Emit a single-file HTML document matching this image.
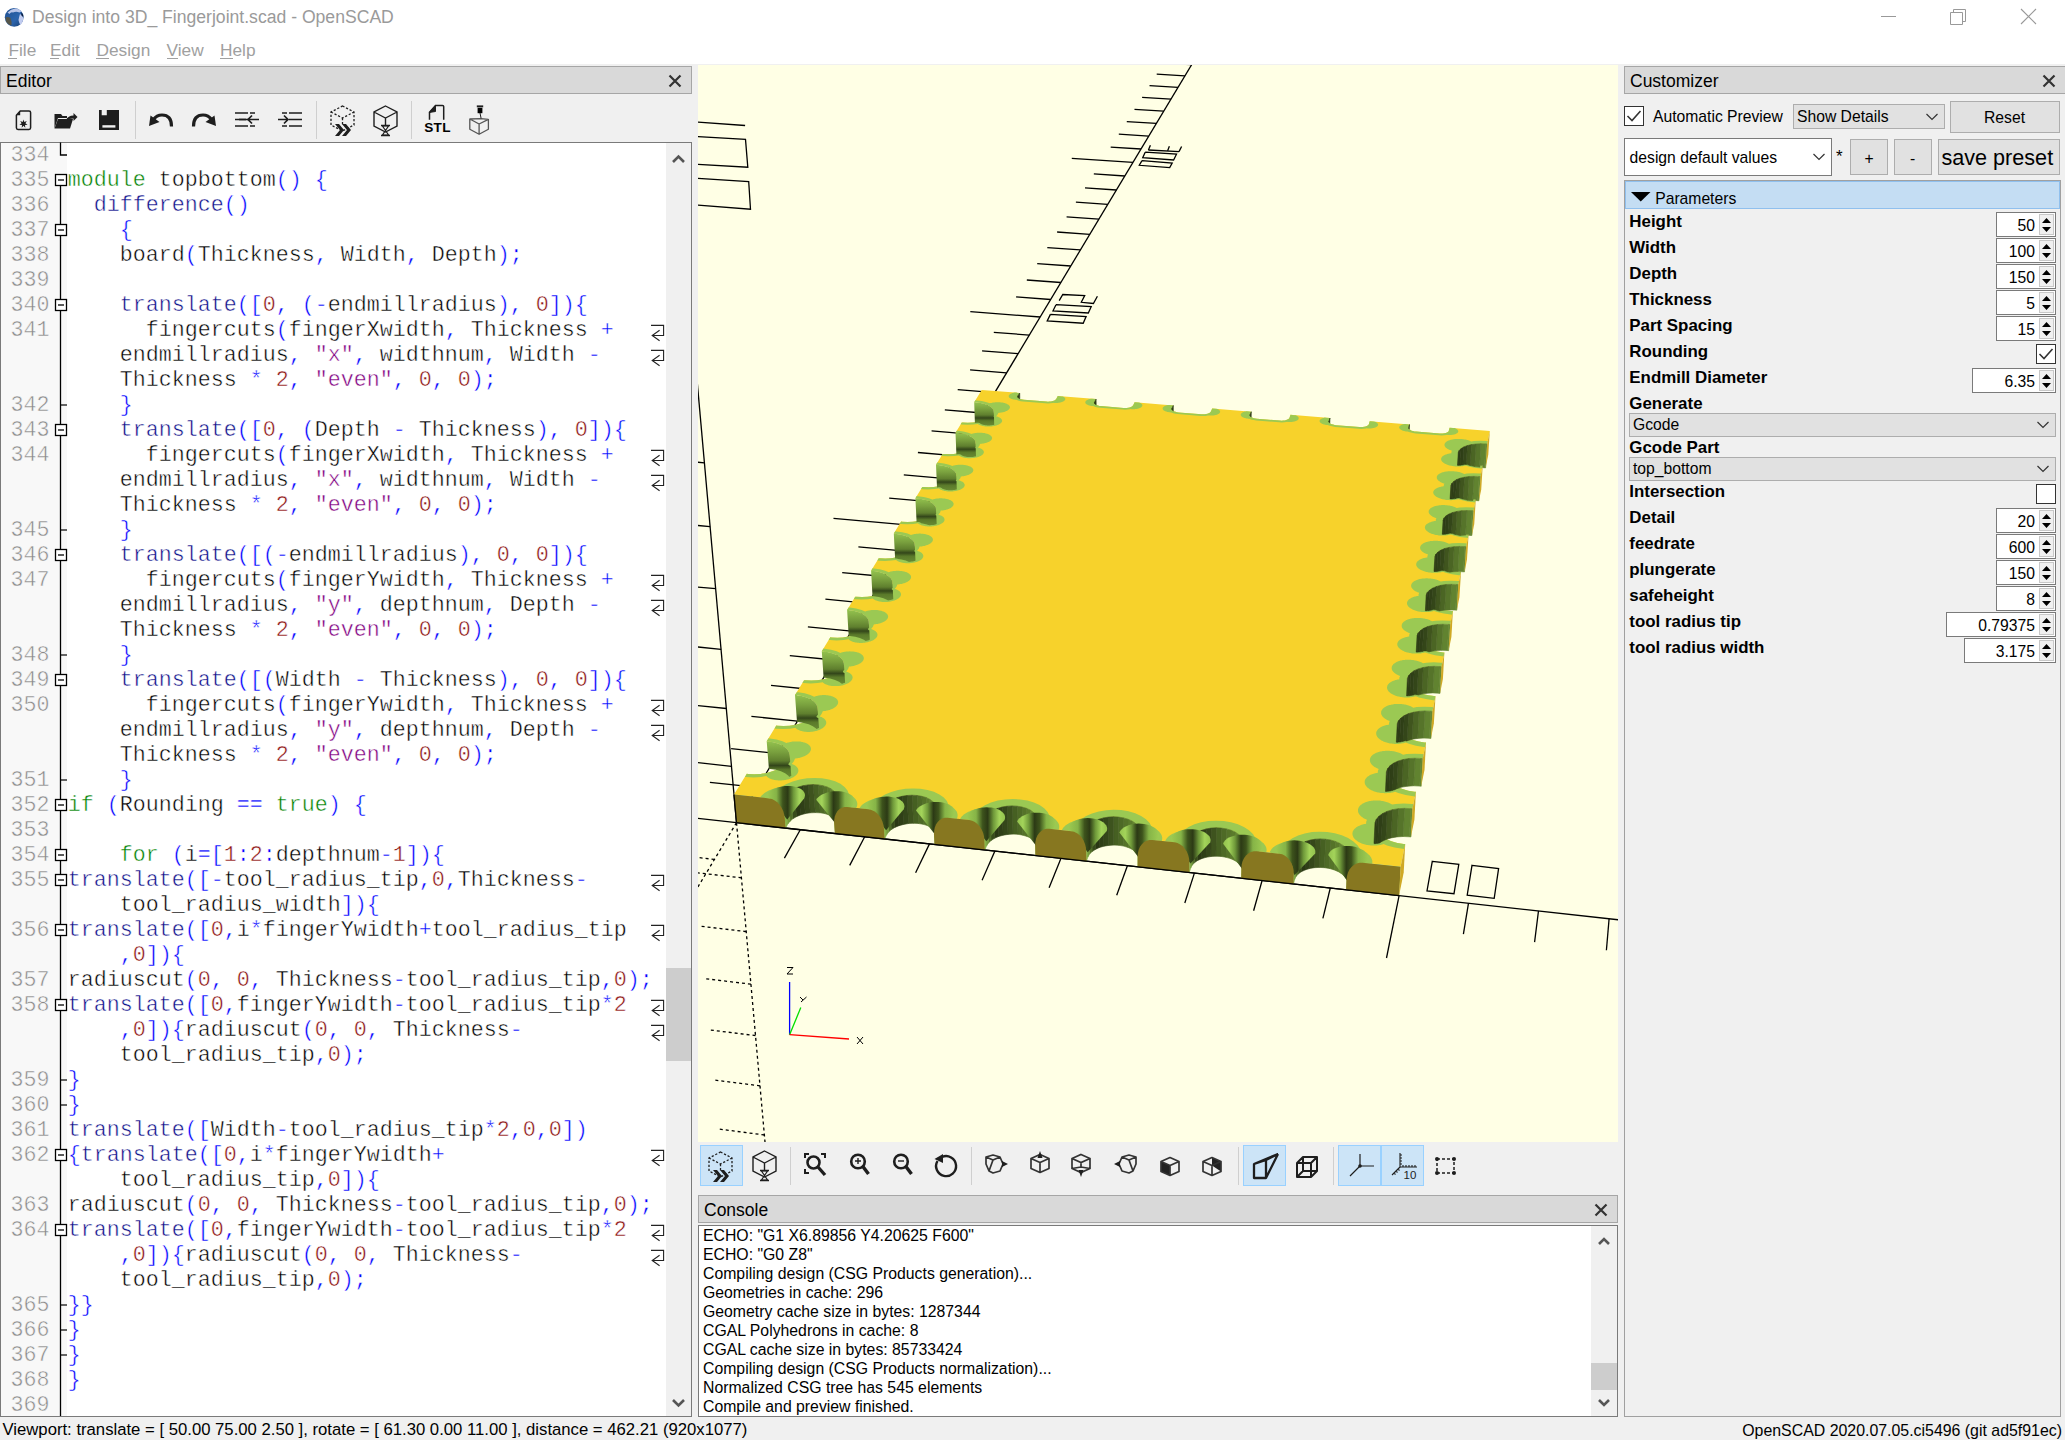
<!DOCTYPE html>
<html><head><meta charset="utf-8"><title>OpenSCAD</title>
<style>
html,body{margin:0;padding:0;}
body{width:2065px;height:1440px;overflow:hidden;position:relative;background:#f0f0f0;font-family:"Liberation Sans",sans-serif;}
.t{position:absolute;line-height:1;white-space:pre;}
.b{position:absolute;}
.s{position:absolute;overflow:visible;}
#code .ln{position:absolute;left:1px;width:48.5px;text-align:right;font-family:"Liberation Mono",monospace;font-size:21.66px;line-height:25px;height:25px;color:#8a8a8a;white-space:pre;-webkit-text-stroke:0.5px #f8f8f8;}
#code .cd{position:absolute;font-family:"Liberation Mono",monospace;font-size:21.66px;line-height:25px;height:25px;white-space:pre;-webkit-text-stroke:0.45px #fff;}
</style></head><body>
<div class="b" style="left:0px;top:0px;width:2065px;height:64px;background:#ffffff;"></div>
<svg class="s" style="left:3px;top:6px;" width="23" height="23" viewBox="0 0 23 23"><defs><linearGradient id="gl" x1="0" y1="0" x2="1" y2="1"><stop offset="0" stop-color="#1f4f8f"/><stop offset="0.6" stop-color="#2c64ad"/><stop offset="1" stop-color="#163a6a"/></linearGradient></defs><circle cx="11.2" cy="11.3" r="9.4" fill="url(#gl)"/><path d="M4.5 6.5 Q8 2.8 12 2.4 Q16 2.6 18.6 5.2 L16.5 6.5 Q13 5 10 6.5 Q8 5.5 6.5 8 Z" fill="#b8c4e8"/><path d="M17 8 Q19.5 9.5 20.5 12 Q20 16.5 17.5 19 Q16 17 15.5 14 Q16 11 17 8 Z" fill="#c0cbef"/><path d="M2.5 11.5 Q5 10.5 7.5 12 Q9 15.5 8.5 19.5 Q5 19 3 15.5 Z" fill="#56564a"/><path d="M18.2 6 Q20.5 8.5 20.3 11 L18.5 9.5 Z" fill="#0c1c3c"/></svg>
<div class="t" style="left:32.00px;top:8.90px;font-size:17.6px;color:#9a9a9a;">Design into 3D_ Fingerjoint.scad - OpenSCAD</div>
<svg class="s" style="left:1870px;top:0px;" width="195" height="34" viewBox="0 0 195 34"><path d="M11 16.5 H26" stroke="#999" stroke-width="1"/><path d="M80.5 12.5 H92.5 V24.5 H80.5 Z M83.5 12.5 V9.5 H95.5 V21.5 H92.5" fill="none" stroke="#999" stroke-width="1"/><path d="M151 9 L166 24 M166 9 L151 24" stroke="#999" stroke-width="1.1"/></svg>
<div class="t" style="left:8.40px;top:41.86px;font-size:17.3px;color:#a0a0a0;">File</div>
<div class="t" style="left:50.00px;top:41.86px;font-size:17.3px;color:#a0a0a0;">Edit</div>
<div class="t" style="left:96.50px;top:41.86px;font-size:17.3px;color:#a0a0a0;">Design</div>
<div class="t" style="left:166.50px;top:41.86px;font-size:17.3px;color:#a0a0a0;">View</div>
<div class="t" style="left:220.00px;top:41.86px;font-size:17.3px;color:#a0a0a0;">Help</div>
<div class="b" style="left:8.2px;top:57.8px;width:9.0px;height:1.0px;background:#a0a0a0;"></div>
<div class="b" style="left:50px;top:57.8px;width:9px;height:1.0px;background:#a0a0a0;"></div>
<div class="b" style="left:96.3px;top:57.8px;width:13.0px;height:1.0px;background:#a0a0a0;"></div>
<div class="b" style="left:166.5px;top:57.8px;width:11.0px;height:1.0px;background:#a0a0a0;"></div>
<div class="b" style="left:220px;top:57.8px;width:13px;height:1.0px;background:#a0a0a0;"></div>
<div class="b" style="left:0px;top:66px;width:692px;height:28px;background:#d9d9d9;border:1px solid #a6a6a6;box-sizing:border-box;"></div>
<div class="t" style="left:6.00px;top:72.99px;font-size:17.5px;color:#000;">Editor</div>
<svg class="s" style="left:667.5px;top:74.3px;" width="14" height="14" viewBox="0 0 14 14"><path d="M1.5 1.5 L12.5 12.5 M12.5 1.5 L1.5 12.5" stroke="#333" stroke-width="2.2"/></svg>
<div class="b" style="left:1624px;top:66px;width:442px;height:28px;background:#d9d9d9;border:1px solid #a6a6a6;box-sizing:border-box;"></div>
<div class="t" style="left:1630.00px;top:72.99px;font-size:17.5px;color:#000;">Customizer</div>
<svg class="s" style="left:2041.5px;top:74.3px;" width="14" height="14" viewBox="0 0 14 14"><path d="M1.5 1.5 L12.5 12.5 M12.5 1.5 L1.5 12.5" stroke="#333" stroke-width="2.2"/></svg>
<div class="b" style="left:698px;top:1195px;width:920px;height:28px;background:#d9d9d9;border:1px solid #a6a6a6;box-sizing:border-box;"></div>
<div class="t" style="left:704.00px;top:1201.99px;font-size:17.5px;color:#000;">Console</div>
<svg class="s" style="left:1593.5px;top:1203.3px;" width="14" height="14" viewBox="0 0 14 14"><path d="M1.5 1.5 L12.5 12.5 M12.5 1.5 L1.5 12.5" stroke="#333" stroke-width="2.2"/></svg>
<svg class="s" style="left:14.5px;top:109.5px;" width="17" height="20.5" viewBox="0 0 17 20.5"><path d="M5.2 1 H14 Q15.6 1 15.6 2.6 V17.8 Q15.6 19.4 14 19.4 H3 Q1.4 19.4 1.4 17.8 V5.2 Z" fill="none" stroke="#1e1e1e" stroke-width="1.5" stroke-linejoin="round"/><path d="M1.4 5.2 L5.2 1 V5.2 Z" fill="#1e1e1e"/><path d="M8.5 9.5 L9.3 12 L11.8 11 L10.4 13.3 L12.6 14.8 L10 15.1 L10.3 17.7 L8.5 15.8 L6.7 17.7 L7 15.1 L4.4 14.8 L6.6 13.3 L5.2 11 L7.7 12 Z" fill="#1e1e1e"/></svg>
<svg class="s" style="left:54px;top:112.5px;" width="24" height="16" viewBox="0 0 24 16"><path d="M0.5 1 H7 L8.5 3 H13 V5 H4 L0.5 15.5 Z" fill="#1e1e1e"/><path d="M0.5 15.5 L4 6 H19 L16 15.5 Z" fill="#1e1e1e"/><path d="M12 7 Q14 2.5 19.5 2.5 V0 L23.5 4 L19.5 8 V5.5 Q15 5.5 12 7 Z" fill="#1e1e1e"/></svg>
<svg class="s" style="left:99px;top:110px;" width="20" height="20" viewBox="0 0 20 20"><path d="M0 0 H2.7 V5.2 H7.8 V0 H20 V20 H0 Z" fill="#1e1e1e"/><rect x="3.4" y="15.2" width="13" height="2.4" fill="#f0f0f0"/></svg>
<svg class="s" style="left:149px;top:113px;" width="24" height="14" viewBox="0 0 24 14"><path d="M22.5 13.5 Q22.5 2 13 2 Q7.5 2 4.5 6.5" fill="none" stroke="#1e1e1e" stroke-width="3.2"/><path d="M0 13 L1.5 2.5 L10.5 9 Z" fill="#1e1e1e"/></svg>
<svg class="s" style="left:192px;top:113px;" width="24" height="14" viewBox="0 0 24 14"><g transform="translate(24,0) scale(-1,1)"><path d="M22.5 13.5 Q22.5 2 13 2 Q7.5 2 4.5 6.5" fill="none" stroke="#1e1e1e" stroke-width="3.2"/><path d="M0 13 L1.5 2.5 L10.5 9 Z" fill="#1e1e1e"/></g></svg>
<svg class="s" style="left:235px;top:112px;" width="24" height="16" viewBox="0 0 24 16"><path d="M0 1 H13 M15 1 H20 M0 7.5 H5 M5 7.5 H13 M0 14 H13 M15 14 H20" stroke="#1e1e1e" stroke-width="1.6"/><path d="M24 7.5 H13 M17 3.5 L13 7.5 L17 11.5" fill="none" stroke="#1e1e1e" stroke-width="1.7"/><path d="M4 7.5 H11" stroke="#1e1e1e" stroke-width="1.6"/></svg>
<svg class="s" style="left:278px;top:112px;" width="24" height="16" viewBox="0 0 24 16"><path d="M4 1 H9 M11 1 H24 M11 7.5 H24 M4 14 H9 M11 14 H24" stroke="#1e1e1e" stroke-width="1.6"/><path d="M0 7.5 H10 M6 3.5 L10 7.5 L6 11.5" fill="none" stroke="#1e1e1e" stroke-width="1.7"/></svg>
<svg class="s" style="left:329.5px;top:104.5px;" width="25" height="32" viewBox="0 0 25 32"><path d="M12.5 1 L24 7 V20 L12.5 26 L1 20 V7 Z M1 7 L12.5 13 L24 7 M12.5 13 V21" fill="none" stroke="#1e1e1e" stroke-width="1.3" stroke-dasharray="2.2 1.8"/><path d="M5 19 H9 L14 25 L9 31 H5 L10 25 Z M12 19 H16 L21 25 L16 31 H12 L17 25 Z" fill="#1e1e1e"/></svg>
<svg class="s" style="left:372.5px;top:104.5px;" width="25" height="32" viewBox="0 0 25 32"><path d="M12.5 1 L24 7 V21 L12.5 27 L1 21 V7 Z M1 7 L12.5 13 L24 7 M12.5 13 V20" fill="none" stroke="#1e1e1e" stroke-width="1.4"/><path d="M8 20.5 H17 M8 30.5 H17" stroke="#1e1e1e" stroke-width="1.5"/><path d="M9.5 21 H15.5 L12.5 25.5 Z M12.5 25.5 L15.5 30 H9.5 Z" fill="none" stroke="#1e1e1e" stroke-width="1.2"/></svg>
<svg class="s" style="left:424px;top:104px;" width="28" height="30" viewBox="0 0 28 30"><path d="M5.5 15.8 V8.4 L11.5 1.4 H18.5 Q19.7 1.4 19.7 2.6 V15.8" fill="none" stroke="#1e1e1e" stroke-width="1.5"/><path d="M5.5 8.4 L11.5 1.4 V7.5 Z" fill="#1e1e1e" stroke="#1e1e1e" stroke-width="1"/><text x="13.6" y="28.4" font-family="Liberation Sans" font-weight="bold" font-size="13.6" letter-spacing="0.4" text-anchor="middle" fill="#000">STL</text></svg>
<svg class="s" style="left:469px;top:105px;" width="21" height="31" viewBox="0 0 21 31"><rect x="7.8" y="0.4" width="6.4" height="1.9" fill="#1e1e1e"/><rect x="8.6" y="2.8" width="4.8" height="5.4" fill="#000"/><path d="M11 8 L12.2 13.8" fill="none" stroke="#1e1e1e" stroke-width="1"/><path d="M0.8 14 L12 13.6 L19.4 14.4 M0.8 14 L10.1 19 L19.4 14.4 V24.3 L10.1 29.3 L0.8 24.3 Z M10.1 19 V29.3" fill="none" stroke="#555" stroke-width="1.3" stroke-linejoin="round"/></svg>
<div class="b" style="left:135px;top:101px;width:1px;height:38px;background:#cfcfcf;"></div>
<div class="b" style="left:316px;top:101px;width:1px;height:38px;background:#cfcfcf;"></div>
<div class="b" style="left:411px;top:101px;width:1px;height:38px;background:#cfcfcf;"></div>
<div class="b" style="left:0px;top:142px;width:692px;height:1275px;background:#ffffff;border:1px solid #7a7a7a;box-sizing:border-box;"></div>
<div class="b" style="left:1px;top:143px;width:66px;height:1273px;background:#f8f8f8;"></div>
<div class="b" style="left:666px;top:143px;width:25px;height:1273px;background:#f0f0f0;"></div>
<svg class="s" style="left:666px;top:143px;" width="25" height="1273" viewBox="0 0 25 1273"><path d="M7 19 L12.5 13.5 L18 19" fill="none" stroke="#555" stroke-width="2.6"/><path d="M7 1257 L12.5 1262.5 L18 1257" fill="none" stroke="#555" stroke-width="2.6"/><rect x="0" y="825" width="25" height="93" fill="#cdcdcd"/></svg>
<div id="code"><div class="ln" style="top:142.5px">334</div>
<div class="ln" style="top:167.5px">335</div>
<div class="cd" style="top:167.5px;left:67.8px"><span style="color:#008000">module</span> <span style="color:#000000">topbottom</span><span style="color:#0000ff">(</span><span style="color:#0000ff">)</span> <span style="color:#0000ff">{</span></div>
<div class="ln" style="top:192.5px">336</div>
<div class="cd" style="top:192.5px;left:93.8px"><span style="color:#10108a">difference</span><span style="color:#0000ff">(</span><span style="color:#0000ff">)</span></div>
<div class="ln" style="top:217.5px">337</div>
<div class="cd" style="top:217.5px;left:119.8px"><span style="color:#0000ff">{</span></div>
<div class="ln" style="top:242.5px">338</div>
<div class="cd" style="top:242.5px;left:119.8px"><span style="color:#000000">board</span><span style="color:#0000ff">(</span><span style="color:#000000">Thickness</span><span style="color:#0000ff">,</span> <span style="color:#000000">Width</span><span style="color:#0000ff">,</span> <span style="color:#000000">Depth</span><span style="color:#0000ff">)</span><span style="color:#0000ff">;</span></div>
<div class="ln" style="top:267.5px">339</div>
<div class="ln" style="top:292.5px">340</div>
<div class="cd" style="top:292.5px;left:119.8px"><span style="color:#10108a">translate</span><span style="color:#0000ff">(</span><span style="color:#0000ff">[</span><span style="color:#8b1010">0</span><span style="color:#0000ff">,</span> <span style="color:#0000ff">(</span><span style="color:#0000ff">-</span><span style="color:#000000">endmillradius</span><span style="color:#0000ff">)</span><span style="color:#0000ff">,</span> <span style="color:#8b1010">0</span><span style="color:#0000ff">]</span><span style="color:#0000ff">)</span><span style="color:#0000ff">{</span></div>
<div class="ln" style="top:317.5px">341</div>
<div class="cd" style="top:317.5px;left:145.8px"><span style="color:#000000">fingercuts</span><span style="color:#0000ff">(</span><span style="color:#000000">fingerXwidth</span><span style="color:#0000ff">,</span> <span style="color:#000000">Thickness</span> <span style="color:#0000ff">+</span></div>
<div class="cd" style="top:342.5px;left:119.8px"><span style="color:#000000">endmillradius</span><span style="color:#0000ff">,</span> <span style="color:#800080">"x"</span><span style="color:#0000ff">,</span> <span style="color:#000000">widthnum</span><span style="color:#0000ff">,</span> <span style="color:#000000">Width</span> <span style="color:#0000ff">-</span></div>
<div class="cd" style="top:367.5px;left:119.8px"><span style="color:#000000">Thickness</span> <span style="color:#0000ff">*</span> <span style="color:#8b1010">2</span><span style="color:#0000ff">,</span> <span style="color:#800080">"even"</span><span style="color:#0000ff">,</span> <span style="color:#8b1010">0</span><span style="color:#0000ff">,</span> <span style="color:#8b1010">0</span><span style="color:#0000ff">)</span><span style="color:#0000ff">;</span></div>
<div class="ln" style="top:392.5px">342</div>
<div class="cd" style="top:392.5px;left:119.8px"><span style="color:#0000ff">}</span></div>
<div class="ln" style="top:417.5px">343</div>
<div class="cd" style="top:417.5px;left:119.8px"><span style="color:#10108a">translate</span><span style="color:#0000ff">(</span><span style="color:#0000ff">[</span><span style="color:#8b1010">0</span><span style="color:#0000ff">,</span> <span style="color:#0000ff">(</span><span style="color:#000000">Depth</span> <span style="color:#0000ff">-</span> <span style="color:#000000">Thickness</span><span style="color:#0000ff">)</span><span style="color:#0000ff">,</span> <span style="color:#8b1010">0</span><span style="color:#0000ff">]</span><span style="color:#0000ff">)</span><span style="color:#0000ff">{</span></div>
<div class="ln" style="top:442.5px">344</div>
<div class="cd" style="top:442.5px;left:145.8px"><span style="color:#000000">fingercuts</span><span style="color:#0000ff">(</span><span style="color:#000000">fingerXwidth</span><span style="color:#0000ff">,</span> <span style="color:#000000">Thickness</span> <span style="color:#0000ff">+</span></div>
<div class="cd" style="top:467.5px;left:119.8px"><span style="color:#000000">endmillradius</span><span style="color:#0000ff">,</span> <span style="color:#800080">"x"</span><span style="color:#0000ff">,</span> <span style="color:#000000">widthnum</span><span style="color:#0000ff">,</span> <span style="color:#000000">Width</span> <span style="color:#0000ff">-</span></div>
<div class="cd" style="top:492.5px;left:119.8px"><span style="color:#000000">Thickness</span> <span style="color:#0000ff">*</span> <span style="color:#8b1010">2</span><span style="color:#0000ff">,</span> <span style="color:#800080">"even"</span><span style="color:#0000ff">,</span> <span style="color:#8b1010">0</span><span style="color:#0000ff">,</span> <span style="color:#8b1010">0</span><span style="color:#0000ff">)</span><span style="color:#0000ff">;</span></div>
<div class="ln" style="top:517.5px">345</div>
<div class="cd" style="top:517.5px;left:119.8px"><span style="color:#0000ff">}</span></div>
<div class="ln" style="top:542.5px">346</div>
<div class="cd" style="top:542.5px;left:119.8px"><span style="color:#10108a">translate</span><span style="color:#0000ff">(</span><span style="color:#0000ff">[</span><span style="color:#0000ff">(</span><span style="color:#0000ff">-</span><span style="color:#000000">endmillradius</span><span style="color:#0000ff">)</span><span style="color:#0000ff">,</span> <span style="color:#8b1010">0</span><span style="color:#0000ff">,</span> <span style="color:#8b1010">0</span><span style="color:#0000ff">]</span><span style="color:#0000ff">)</span><span style="color:#0000ff">{</span></div>
<div class="ln" style="top:567.5px">347</div>
<div class="cd" style="top:567.5px;left:145.8px"><span style="color:#000000">fingercuts</span><span style="color:#0000ff">(</span><span style="color:#000000">fingerYwidth</span><span style="color:#0000ff">,</span> <span style="color:#000000">Thickness</span> <span style="color:#0000ff">+</span></div>
<div class="cd" style="top:592.5px;left:119.8px"><span style="color:#000000">endmillradius</span><span style="color:#0000ff">,</span> <span style="color:#800080">"y"</span><span style="color:#0000ff">,</span> <span style="color:#000000">depthnum</span><span style="color:#0000ff">,</span> <span style="color:#000000">Depth</span> <span style="color:#0000ff">-</span></div>
<div class="cd" style="top:617.5px;left:119.8px"><span style="color:#000000">Thickness</span> <span style="color:#0000ff">*</span> <span style="color:#8b1010">2</span><span style="color:#0000ff">,</span> <span style="color:#800080">"even"</span><span style="color:#0000ff">,</span> <span style="color:#8b1010">0</span><span style="color:#0000ff">,</span> <span style="color:#8b1010">0</span><span style="color:#0000ff">)</span><span style="color:#0000ff">;</span></div>
<div class="ln" style="top:642.5px">348</div>
<div class="cd" style="top:642.5px;left:119.8px"><span style="color:#0000ff">}</span></div>
<div class="ln" style="top:667.5px">349</div>
<div class="cd" style="top:667.5px;left:119.8px"><span style="color:#10108a">translate</span><span style="color:#0000ff">(</span><span style="color:#0000ff">[</span><span style="color:#0000ff">(</span><span style="color:#000000">Width</span> <span style="color:#0000ff">-</span> <span style="color:#000000">Thickness</span><span style="color:#0000ff">)</span><span style="color:#0000ff">,</span> <span style="color:#8b1010">0</span><span style="color:#0000ff">,</span> <span style="color:#8b1010">0</span><span style="color:#0000ff">]</span><span style="color:#0000ff">)</span><span style="color:#0000ff">{</span></div>
<div class="ln" style="top:692.5px">350</div>
<div class="cd" style="top:692.5px;left:145.8px"><span style="color:#000000">fingercuts</span><span style="color:#0000ff">(</span><span style="color:#000000">fingerYwidth</span><span style="color:#0000ff">,</span> <span style="color:#000000">Thickness</span> <span style="color:#0000ff">+</span></div>
<div class="cd" style="top:717.5px;left:119.8px"><span style="color:#000000">endmillradius</span><span style="color:#0000ff">,</span> <span style="color:#800080">"y"</span><span style="color:#0000ff">,</span> <span style="color:#000000">depthnum</span><span style="color:#0000ff">,</span> <span style="color:#000000">Depth</span> <span style="color:#0000ff">-</span></div>
<div class="cd" style="top:742.5px;left:119.8px"><span style="color:#000000">Thickness</span> <span style="color:#0000ff">*</span> <span style="color:#8b1010">2</span><span style="color:#0000ff">,</span> <span style="color:#800080">"even"</span><span style="color:#0000ff">,</span> <span style="color:#8b1010">0</span><span style="color:#0000ff">,</span> <span style="color:#8b1010">0</span><span style="color:#0000ff">)</span><span style="color:#0000ff">;</span></div>
<div class="ln" style="top:767.5px">351</div>
<div class="cd" style="top:767.5px;left:119.8px"><span style="color:#0000ff">}</span></div>
<div class="ln" style="top:792.5px">352</div>
<div class="cd" style="top:792.5px;left:67.8px"><span style="color:#008000">if</span> <span style="color:#0000ff">(</span><span style="color:#000000">Rounding</span> <span style="color:#0000ff">=</span><span style="color:#0000ff">=</span> <span style="color:#008000">true</span><span style="color:#0000ff">)</span> <span style="color:#0000ff">{</span></div>
<div class="ln" style="top:817.5px">353</div>
<div class="ln" style="top:842.5px">354</div>
<div class="cd" style="top:842.5px;left:119.8px"><span style="color:#008000">for</span> <span style="color:#0000ff">(</span><span style="color:#000000">i</span><span style="color:#0000ff">=</span><span style="color:#0000ff">[</span><span style="color:#8b1010">1</span><span style="color:#0000ff">:</span><span style="color:#8b1010">2</span><span style="color:#0000ff">:</span><span style="color:#000000">depthnum</span><span style="color:#0000ff">-</span><span style="color:#8b1010">1</span><span style="color:#0000ff">]</span><span style="color:#0000ff">)</span><span style="color:#0000ff">{</span></div>
<div class="ln" style="top:867.5px">355</div>
<div class="cd" style="top:867.5px;left:67.8px"><span style="color:#10108a">translate</span><span style="color:#0000ff">(</span><span style="color:#0000ff">[</span><span style="color:#0000ff">-</span><span style="color:#000000">tool_radius_tip</span><span style="color:#0000ff">,</span><span style="color:#8b1010">0</span><span style="color:#0000ff">,</span><span style="color:#000000">Thickness</span><span style="color:#0000ff">-</span></div>
<div class="cd" style="top:892.5px;left:119.8px"><span style="color:#000000">tool_radius_width</span><span style="color:#0000ff">]</span><span style="color:#0000ff">)</span><span style="color:#0000ff">{</span></div>
<div class="ln" style="top:917.5px">356</div>
<div class="cd" style="top:917.5px;left:67.8px"><span style="color:#10108a">translate</span><span style="color:#0000ff">(</span><span style="color:#0000ff">[</span><span style="color:#8b1010">0</span><span style="color:#0000ff">,</span><span style="color:#000000">i</span><span style="color:#0000ff">*</span><span style="color:#000000">fingerYwidth</span><span style="color:#0000ff">+</span><span style="color:#000000">tool_radius_tip</span></div>
<div class="cd" style="top:942.5px;left:119.8px"><span style="color:#0000ff">,</span><span style="color:#8b1010">0</span><span style="color:#0000ff">]</span><span style="color:#0000ff">)</span><span style="color:#0000ff">{</span></div>
<div class="ln" style="top:967.5px">357</div>
<div class="cd" style="top:967.5px;left:67.8px"><span style="color:#000000">radiuscut</span><span style="color:#0000ff">(</span><span style="color:#8b1010">0</span><span style="color:#0000ff">,</span> <span style="color:#8b1010">0</span><span style="color:#0000ff">,</span> <span style="color:#000000">Thickness</span><span style="color:#0000ff">-</span><span style="color:#000000">tool_radius_tip</span><span style="color:#0000ff">,</span><span style="color:#8b1010">0</span><span style="color:#0000ff">)</span><span style="color:#0000ff">;</span></div>
<div class="ln" style="top:992.5px">358</div>
<div class="cd" style="top:992.5px;left:67.8px"><span style="color:#10108a">translate</span><span style="color:#0000ff">(</span><span style="color:#0000ff">[</span><span style="color:#8b1010">0</span><span style="color:#0000ff">,</span><span style="color:#000000">fingerYwidth</span><span style="color:#0000ff">-</span><span style="color:#000000">tool_radius_tip</span><span style="color:#0000ff">*</span><span style="color:#8b1010">2</span></div>
<div class="cd" style="top:1017.5px;left:119.8px"><span style="color:#0000ff">,</span><span style="color:#8b1010">0</span><span style="color:#0000ff">]</span><span style="color:#0000ff">)</span><span style="color:#0000ff">{</span><span style="color:#000000">radiuscut</span><span style="color:#0000ff">(</span><span style="color:#8b1010">0</span><span style="color:#0000ff">,</span> <span style="color:#8b1010">0</span><span style="color:#0000ff">,</span> <span style="color:#000000">Thickness</span><span style="color:#0000ff">-</span></div>
<div class="cd" style="top:1042.5px;left:119.8px"><span style="color:#000000">tool_radius_tip</span><span style="color:#0000ff">,</span><span style="color:#8b1010">0</span><span style="color:#0000ff">)</span><span style="color:#0000ff">;</span></div>
<div class="ln" style="top:1067.5px">359</div>
<div class="cd" style="top:1067.5px;left:67.8px"><span style="color:#0000ff">}</span></div>
<div class="ln" style="top:1092.5px">360</div>
<div class="cd" style="top:1092.5px;left:67.8px"><span style="color:#0000ff">}</span></div>
<div class="ln" style="top:1117.5px">361</div>
<div class="cd" style="top:1117.5px;left:67.8px"><span style="color:#10108a">translate</span><span style="color:#0000ff">(</span><span style="color:#0000ff">[</span><span style="color:#000000">Width</span><span style="color:#0000ff">-</span><span style="color:#000000">tool_radius_tip</span><span style="color:#0000ff">*</span><span style="color:#8b1010">2</span><span style="color:#0000ff">,</span><span style="color:#8b1010">0</span><span style="color:#0000ff">,</span><span style="color:#8b1010">0</span><span style="color:#0000ff">]</span><span style="color:#0000ff">)</span></div>
<div class="ln" style="top:1142.5px">362</div>
<div class="cd" style="top:1142.5px;left:67.8px"><span style="color:#0000ff">{</span><span style="color:#10108a">translate</span><span style="color:#0000ff">(</span><span style="color:#0000ff">[</span><span style="color:#8b1010">0</span><span style="color:#0000ff">,</span><span style="color:#000000">i</span><span style="color:#0000ff">*</span><span style="color:#000000">fingerYwidth</span><span style="color:#0000ff">+</span></div>
<div class="cd" style="top:1167.5px;left:119.8px"><span style="color:#000000">tool_radius_tip</span><span style="color:#0000ff">,</span><span style="color:#8b1010">0</span><span style="color:#0000ff">]</span><span style="color:#0000ff">)</span><span style="color:#0000ff">{</span></div>
<div class="ln" style="top:1192.5px">363</div>
<div class="cd" style="top:1192.5px;left:67.8px"><span style="color:#000000">radiuscut</span><span style="color:#0000ff">(</span><span style="color:#8b1010">0</span><span style="color:#0000ff">,</span> <span style="color:#8b1010">0</span><span style="color:#0000ff">,</span> <span style="color:#000000">Thickness</span><span style="color:#0000ff">-</span><span style="color:#000000">tool_radius_tip</span><span style="color:#0000ff">,</span><span style="color:#8b1010">0</span><span style="color:#0000ff">)</span><span style="color:#0000ff">;</span></div>
<div class="ln" style="top:1217.5px">364</div>
<div class="cd" style="top:1217.5px;left:67.8px"><span style="color:#10108a">translate</span><span style="color:#0000ff">(</span><span style="color:#0000ff">[</span><span style="color:#8b1010">0</span><span style="color:#0000ff">,</span><span style="color:#000000">fingerYwidth</span><span style="color:#0000ff">-</span><span style="color:#000000">tool_radius_tip</span><span style="color:#0000ff">*</span><span style="color:#8b1010">2</span></div>
<div class="cd" style="top:1242.5px;left:119.8px"><span style="color:#0000ff">,</span><span style="color:#8b1010">0</span><span style="color:#0000ff">]</span><span style="color:#0000ff">)</span><span style="color:#0000ff">{</span><span style="color:#000000">radiuscut</span><span style="color:#0000ff">(</span><span style="color:#8b1010">0</span><span style="color:#0000ff">,</span> <span style="color:#8b1010">0</span><span style="color:#0000ff">,</span> <span style="color:#000000">Thickness</span><span style="color:#0000ff">-</span></div>
<div class="cd" style="top:1267.5px;left:119.8px"><span style="color:#000000">tool_radius_tip</span><span style="color:#0000ff">,</span><span style="color:#8b1010">0</span><span style="color:#0000ff">)</span><span style="color:#0000ff">;</span></div>
<div class="ln" style="top:1292.5px">365</div>
<div class="cd" style="top:1292.5px;left:67.8px"><span style="color:#0000ff">}</span><span style="color:#0000ff">}</span></div>
<div class="ln" style="top:1317.5px">366</div>
<div class="cd" style="top:1317.5px;left:67.8px"><span style="color:#0000ff">}</span></div>
<div class="ln" style="top:1342.5px">367</div>
<div class="cd" style="top:1342.5px;left:67.8px"><span style="color:#0000ff">}</span></div>
<div class="ln" style="top:1367.5px">368</div>
<div class="cd" style="top:1367.5px;left:67.8px"><span style="color:#0000ff">}</span></div>
<div class="ln" style="top:1392.5px">369</div></div>
<svg class="s" style="left:0;top:0" width="692" height="1417"><path d="M60.5 180.0 V1416" stroke="#000" stroke-width="1.3"/><path d="M60.5 142.5 V155.0 H67" fill="none" stroke="#000" stroke-width="1.3"/><rect x="55.5" y="174.5" width="11" height="11" fill="#fff" stroke="#000" stroke-width="1.3"/><path d="M58 180.0 H64" stroke="#000" stroke-width="1.3"/><rect x="55.5" y="224.5" width="11" height="11" fill="#fff" stroke="#000" stroke-width="1.3"/><path d="M58 230.0 H64" stroke="#000" stroke-width="1.3"/><rect x="55.5" y="299.5" width="11" height="11" fill="#fff" stroke="#000" stroke-width="1.3"/><path d="M58 305.0 H64" stroke="#000" stroke-width="1.3"/><path d="M651 325.4 H663.6 V335.5 H652.2 M659.6 330.2 L652.2 335.5 L659.6 340.7" fill="none" stroke="#222" stroke-width="1.1"/><path d="M651 350.4 H663.6 V360.5 H652.2 M659.6 355.2 L652.2 360.5 L659.6 365.7" fill="none" stroke="#222" stroke-width="1.1"/><path d="M60.5 405.0 H67" stroke="#000" stroke-width="1.2"/><rect x="55.5" y="424.5" width="11" height="11" fill="#fff" stroke="#000" stroke-width="1.3"/><path d="M58 430.0 H64" stroke="#000" stroke-width="1.3"/><path d="M651 450.4 H663.6 V460.5 H652.2 M659.6 455.2 L652.2 460.5 L659.6 465.7" fill="none" stroke="#222" stroke-width="1.1"/><path d="M651 475.4 H663.6 V485.5 H652.2 M659.6 480.2 L652.2 485.5 L659.6 490.7" fill="none" stroke="#222" stroke-width="1.1"/><path d="M60.5 530.0 H67" stroke="#000" stroke-width="1.2"/><rect x="55.5" y="549.5" width="11" height="11" fill="#fff" stroke="#000" stroke-width="1.3"/><path d="M58 555.0 H64" stroke="#000" stroke-width="1.3"/><path d="M651 575.4 H663.6 V585.5 H652.2 M659.6 580.2 L652.2 585.5 L659.6 590.7" fill="none" stroke="#222" stroke-width="1.1"/><path d="M651 600.4 H663.6 V610.5 H652.2 M659.6 605.2 L652.2 610.5 L659.6 615.7" fill="none" stroke="#222" stroke-width="1.1"/><path d="M60.5 655.0 H67" stroke="#000" stroke-width="1.2"/><rect x="55.5" y="674.5" width="11" height="11" fill="#fff" stroke="#000" stroke-width="1.3"/><path d="M58 680.0 H64" stroke="#000" stroke-width="1.3"/><path d="M651 700.4 H663.6 V710.5 H652.2 M659.6 705.2 L652.2 710.5 L659.6 715.7" fill="none" stroke="#222" stroke-width="1.1"/><path d="M651 725.4 H663.6 V735.5 H652.2 M659.6 730.2 L652.2 735.5 L659.6 740.7" fill="none" stroke="#222" stroke-width="1.1"/><path d="M60.5 780.0 H67" stroke="#000" stroke-width="1.2"/><rect x="55.5" y="799.5" width="11" height="11" fill="#fff" stroke="#000" stroke-width="1.3"/><path d="M58 805.0 H64" stroke="#000" stroke-width="1.3"/><rect x="55.5" y="849.5" width="11" height="11" fill="#fff" stroke="#000" stroke-width="1.3"/><path d="M58 855.0 H64" stroke="#000" stroke-width="1.3"/><path d="M651 875.4 H663.6 V885.5 H652.2 M659.6 880.2 L652.2 885.5 L659.6 890.7" fill="none" stroke="#222" stroke-width="1.1"/><rect x="55.5" y="874.5" width="11" height="11" fill="#fff" stroke="#000" stroke-width="1.3"/><path d="M58 880.0 H64" stroke="#000" stroke-width="1.3"/><path d="M651 925.4 H663.6 V935.5 H652.2 M659.6 930.2 L652.2 935.5 L659.6 940.7" fill="none" stroke="#222" stroke-width="1.1"/><rect x="55.5" y="924.5" width="11" height="11" fill="#fff" stroke="#000" stroke-width="1.3"/><path d="M58 930.0 H64" stroke="#000" stroke-width="1.3"/><path d="M651 1000.4 H663.6 V1010.5 H652.2 M659.6 1005.2 L652.2 1010.5 L659.6 1015.7" fill="none" stroke="#222" stroke-width="1.1"/><rect x="55.5" y="999.5" width="11" height="11" fill="#fff" stroke="#000" stroke-width="1.3"/><path d="M58 1005.0 H64" stroke="#000" stroke-width="1.3"/><path d="M651 1025.4 H663.6 V1035.5 H652.2 M659.6 1030.2 L652.2 1035.5 L659.6 1040.7" fill="none" stroke="#222" stroke-width="1.1"/><path d="M60.5 1080.0 H67" stroke="#000" stroke-width="1.2"/><path d="M60.5 1105.0 H67" stroke="#000" stroke-width="1.2"/><path d="M651 1150.4 H663.6 V1160.5 H652.2 M659.6 1155.2 L652.2 1160.5 L659.6 1165.7" fill="none" stroke="#222" stroke-width="1.1"/><rect x="55.5" y="1149.5" width="11" height="11" fill="#fff" stroke="#000" stroke-width="1.3"/><path d="M58 1155.0 H64" stroke="#000" stroke-width="1.3"/><path d="M651 1225.4 H663.6 V1235.5 H652.2 M659.6 1230.2 L652.2 1235.5 L659.6 1240.7" fill="none" stroke="#222" stroke-width="1.1"/><rect x="55.5" y="1224.5" width="11" height="11" fill="#fff" stroke="#000" stroke-width="1.3"/><path d="M58 1230.0 H64" stroke="#000" stroke-width="1.3"/><path d="M651 1250.4 H663.6 V1260.5 H652.2 M659.6 1255.2 L652.2 1260.5 L659.6 1265.7" fill="none" stroke="#222" stroke-width="1.1"/><path d="M60.5 1305.0 H67" stroke="#000" stroke-width="1.2"/><path d="M60.5 1330.0 H67" stroke="#000" stroke-width="1.2"/><path d="M60.5 1355.0 H67" stroke="#000" stroke-width="1.2"/></svg>
<svg class="s" style="left:698px;top:65px;overflow:hidden" width="920" height="1077" viewBox="0 0 920 1077"><defs><linearGradient id="pg1" gradientUnits="userSpaceOnUse" x1="0.0" y1="337.2" x2="0.0" y2="360.4"><stop offset="0" stop-color="#93c24e"/><stop offset="0.3" stop-color="#79a03e"/><stop offset="0.55" stop-color="#5f7f2e"/><stop offset="0.68" stop-color="#33461a"/><stop offset="0.8" stop-color="#5a7a2a"/><stop offset="1" stop-color="#688a33"/></linearGradient><linearGradient id="pg2" gradientUnits="userSpaceOnUse" x1="0.0" y1="367.7" x2="0.0" y2="392.1"><stop offset="0" stop-color="#93c24e"/><stop offset="0.3" stop-color="#79a03e"/><stop offset="0.55" stop-color="#5f7f2e"/><stop offset="0.68" stop-color="#33461a"/><stop offset="0.8" stop-color="#5a7a2a"/><stop offset="1" stop-color="#688a33"/></linearGradient><linearGradient id="pg3" gradientUnits="userSpaceOnUse" x1="0.0" y1="399.7" x2="0.0" y2="425.3"><stop offset="0" stop-color="#93c24e"/><stop offset="0.3" stop-color="#79a03e"/><stop offset="0.55" stop-color="#5f7f2e"/><stop offset="0.68" stop-color="#33461a"/><stop offset="0.8" stop-color="#5a7a2a"/><stop offset="1" stop-color="#688a33"/></linearGradient><linearGradient id="pg4" gradientUnits="userSpaceOnUse" x1="0.0" y1="433.3" x2="0.0" y2="460.2"><stop offset="0" stop-color="#93c24e"/><stop offset="0.3" stop-color="#79a03e"/><stop offset="0.55" stop-color="#5f7f2e"/><stop offset="0.68" stop-color="#33461a"/><stop offset="0.8" stop-color="#5a7a2a"/><stop offset="1" stop-color="#688a33"/></linearGradient><linearGradient id="pg5" gradientUnits="userSpaceOnUse" x1="0.0" y1="468.6" x2="0.0" y2="496.9"><stop offset="0" stop-color="#93c24e"/><stop offset="0.3" stop-color="#79a03e"/><stop offset="0.55" stop-color="#5f7f2e"/><stop offset="0.68" stop-color="#33461a"/><stop offset="0.8" stop-color="#5a7a2a"/><stop offset="1" stop-color="#688a33"/></linearGradient><linearGradient id="pg6" gradientUnits="userSpaceOnUse" x1="0.0" y1="505.7" x2="0.0" y2="535.4"><stop offset="0" stop-color="#93c24e"/><stop offset="0.3" stop-color="#79a03e"/><stop offset="0.55" stop-color="#5f7f2e"/><stop offset="0.68" stop-color="#33461a"/><stop offset="0.8" stop-color="#5a7a2a"/><stop offset="1" stop-color="#688a33"/></linearGradient><linearGradient id="pg7" gradientUnits="userSpaceOnUse" x1="0.0" y1="544.9" x2="0.0" y2="576.0"><stop offset="0" stop-color="#93c24e"/><stop offset="0.3" stop-color="#79a03e"/><stop offset="0.55" stop-color="#5f7f2e"/><stop offset="0.68" stop-color="#33461a"/><stop offset="0.8" stop-color="#5a7a2a"/><stop offset="1" stop-color="#688a33"/></linearGradient><linearGradient id="pg8" gradientUnits="userSpaceOnUse" x1="0.0" y1="586.3" x2="0.0" y2="618.8"><stop offset="0" stop-color="#93c24e"/><stop offset="0.3" stop-color="#79a03e"/><stop offset="0.55" stop-color="#5f7f2e"/><stop offset="0.68" stop-color="#33461a"/><stop offset="0.8" stop-color="#5a7a2a"/><stop offset="1" stop-color="#688a33"/></linearGradient><linearGradient id="pg9" gradientUnits="userSpaceOnUse" x1="0.0" y1="630.0" x2="0.0" y2="664.0"><stop offset="0" stop-color="#93c24e"/><stop offset="0.3" stop-color="#79a03e"/><stop offset="0.55" stop-color="#5f7f2e"/><stop offset="0.68" stop-color="#33461a"/><stop offset="0.8" stop-color="#5a7a2a"/><stop offset="1" stop-color="#688a33"/></linearGradient><linearGradient id="pg10" gradientUnits="userSpaceOnUse" x1="0.0" y1="676.3" x2="0.0" y2="711.9"><stop offset="0" stop-color="#93c24e"/><stop offset="0.3" stop-color="#79a03e"/><stop offset="0.55" stop-color="#5f7f2e"/><stop offset="0.68" stop-color="#33461a"/><stop offset="0.8" stop-color="#5a7a2a"/><stop offset="1" stop-color="#688a33"/></linearGradient><linearGradient id="fan1" gradientUnits="userSpaceOnUse" x1="68.8" y1="0.0" x2="107.0" y2="0.0"><stop offset="0" stop-color="#9dcb51"/><stop offset="0.25" stop-color="#86b447"/><stop offset="0.42" stop-color="#3d531c"/><stop offset="0.55" stop-color="#2c3a15"/><stop offset="0.7" stop-color="#6f993a"/><stop offset="0.85" stop-color="#a3d45a"/><stop offset="1" stop-color="#93c24e"/></linearGradient><linearGradient id="fan2" gradientUnits="userSpaceOnUse" x1="118.2" y1="0.0" x2="156.5" y2="0.0"><stop offset="0" stop-color="#93c24e"/><stop offset="0.15000000000000002" stop-color="#a3d45a"/><stop offset="0.30000000000000004" stop-color="#6f993a"/><stop offset="0.44999999999999996" stop-color="#2c3a15"/><stop offset="0.5800000000000001" stop-color="#3d531c"/><stop offset="0.75" stop-color="#86b447"/><stop offset="1" stop-color="#9dcb51"/></linearGradient><linearGradient id="fan3" gradientUnits="userSpaceOnUse" x1="168.0" y1="0.0" x2="206.4" y2="0.0"><stop offset="0" stop-color="#9dcb51"/><stop offset="0.25" stop-color="#86b447"/><stop offset="0.42" stop-color="#3d531c"/><stop offset="0.55" stop-color="#2c3a15"/><stop offset="0.7" stop-color="#6f993a"/><stop offset="0.85" stop-color="#a3d45a"/><stop offset="1" stop-color="#93c24e"/></linearGradient><linearGradient id="fan4" gradientUnits="userSpaceOnUse" x1="218.0" y1="0.0" x2="256.6" y2="0.0"><stop offset="0" stop-color="#93c24e"/><stop offset="0.15000000000000002" stop-color="#a3d45a"/><stop offset="0.30000000000000004" stop-color="#6f993a"/><stop offset="0.44999999999999996" stop-color="#2c3a15"/><stop offset="0.5800000000000001" stop-color="#3d531c"/><stop offset="0.75" stop-color="#86b447"/><stop offset="1" stop-color="#9dcb51"/></linearGradient><linearGradient id="fan5" gradientUnits="userSpaceOnUse" x1="268.4" y1="0.0" x2="307.1" y2="0.0"><stop offset="0" stop-color="#9dcb51"/><stop offset="0.25" stop-color="#86b447"/><stop offset="0.42" stop-color="#3d531c"/><stop offset="0.55" stop-color="#2c3a15"/><stop offset="0.7" stop-color="#6f993a"/><stop offset="0.85" stop-color="#a3d45a"/><stop offset="1" stop-color="#93c24e"/></linearGradient><linearGradient id="fan6" gradientUnits="userSpaceOnUse" x1="319.1" y1="0.0" x2="358.0" y2="0.0"><stop offset="0" stop-color="#93c24e"/><stop offset="0.15000000000000002" stop-color="#a3d45a"/><stop offset="0.30000000000000004" stop-color="#6f993a"/><stop offset="0.44999999999999996" stop-color="#2c3a15"/><stop offset="0.5800000000000001" stop-color="#3d531c"/><stop offset="0.75" stop-color="#86b447"/><stop offset="1" stop-color="#9dcb51"/></linearGradient><linearGradient id="fan7" gradientUnits="userSpaceOnUse" x1="370.1" y1="0.0" x2="409.2" y2="0.0"><stop offset="0" stop-color="#9dcb51"/><stop offset="0.25" stop-color="#86b447"/><stop offset="0.42" stop-color="#3d531c"/><stop offset="0.55" stop-color="#2c3a15"/><stop offset="0.7" stop-color="#6f993a"/><stop offset="0.85" stop-color="#a3d45a"/><stop offset="1" stop-color="#93c24e"/></linearGradient><linearGradient id="fan8" gradientUnits="userSpaceOnUse" x1="421.4" y1="0.0" x2="460.7" y2="0.0"><stop offset="0" stop-color="#93c24e"/><stop offset="0.15000000000000002" stop-color="#a3d45a"/><stop offset="0.30000000000000004" stop-color="#6f993a"/><stop offset="0.44999999999999996" stop-color="#2c3a15"/><stop offset="0.5800000000000001" stop-color="#3d531c"/><stop offset="0.75" stop-color="#86b447"/><stop offset="1" stop-color="#9dcb51"/></linearGradient><linearGradient id="fan9" gradientUnits="userSpaceOnUse" x1="473.1" y1="0.0" x2="512.6" y2="0.0"><stop offset="0" stop-color="#9dcb51"/><stop offset="0.25" stop-color="#86b447"/><stop offset="0.42" stop-color="#3d531c"/><stop offset="0.55" stop-color="#2c3a15"/><stop offset="0.7" stop-color="#6f993a"/><stop offset="0.85" stop-color="#a3d45a"/><stop offset="1" stop-color="#93c24e"/></linearGradient><linearGradient id="fan10" gradientUnits="userSpaceOnUse" x1="525.1" y1="0.0" x2="564.8" y2="0.0"><stop offset="0" stop-color="#93c24e"/><stop offset="0.15000000000000002" stop-color="#a3d45a"/><stop offset="0.30000000000000004" stop-color="#6f993a"/><stop offset="0.44999999999999996" stop-color="#2c3a15"/><stop offset="0.5800000000000001" stop-color="#3d531c"/><stop offset="0.75" stop-color="#86b447"/><stop offset="1" stop-color="#9dcb51"/></linearGradient><linearGradient id="fan11" gradientUnits="userSpaceOnUse" x1="577.5" y1="0.0" x2="617.4" y2="0.0"><stop offset="0" stop-color="#9dcb51"/><stop offset="0.25" stop-color="#86b447"/><stop offset="0.42" stop-color="#3d531c"/><stop offset="0.55" stop-color="#2c3a15"/><stop offset="0.7" stop-color="#6f993a"/><stop offset="0.85" stop-color="#a3d45a"/><stop offset="1" stop-color="#93c24e"/></linearGradient><linearGradient id="fan12" gradientUnits="userSpaceOnUse" x1="630.2" y1="0.0" x2="670.3" y2="0.0"><stop offset="0" stop-color="#93c24e"/><stop offset="0.15000000000000002" stop-color="#a3d45a"/><stop offset="0.30000000000000004" stop-color="#6f993a"/><stop offset="0.44999999999999996" stop-color="#2c3a15"/><stop offset="0.5800000000000001" stop-color="#3d531c"/><stop offset="0.75" stop-color="#86b447"/><stop offset="1" stop-color="#9dcb51"/></linearGradient></defs><rect x="0" y="0" width="920" height="1077" fill="#ffffe5"/><line x1="38.5" y1="757.7" x2="2212.5" y2="997.0" stroke="#000" stroke-width="1.3" fill="none"/><line x1="38.5" y1="757.7" x2="506.6" y2="-21.9" stroke="#000" stroke-width="1.3" fill="none"/><line x1="38.5" y1="757.7" x2="-192.2" y2="-1829.6" stroke="#000" stroke-width="1.3" fill="none"/><line x1="38.5" y1="757.7" x2="-859.1" y2="658.9" stroke="#000" stroke-width="1.3" fill="none"/><line x1="38.5" y1="757.7" x2="-109.9" y2="1004.9" stroke="#000" stroke-width="1.3" fill="none" stroke-dasharray="3 3"/><line x1="38.5" y1="757.7" x2="101.9" y2="1468.0" stroke="#000" stroke-width="1.3" fill="none" stroke-dasharray="3 3"/><line x1="102.3" y1="764.7" x2="86.4" y2="793.1" stroke="#000" stroke-width="1.3" fill="none"/><line x1="59.7" y1="722.4" x2="11.9" y2="717.3" stroke="#000" stroke-width="1.3" fill="none"/><line x1="33.5" y1="701.3" x2="-15.8" y2="696.0" stroke="#000" stroke-width="1.3" fill="none"/><line x1="-24.7" y1="750.7" x2="-42.6" y2="778.6" stroke="#000" stroke-width="1.3" fill="none" stroke-dasharray="3 3"/><line x1="16.5" y1="794.4" x2="-33.3" y2="788.8" stroke="#000" stroke-width="1.3" fill="none" stroke-dasharray="3 3"/><line x1="43.5" y1="812.8" x2="-4.8" y2="807.3" stroke="#000" stroke-width="1.3" fill="none" stroke-dasharray="3 3"/><line x1="166.7" y1="771.8" x2="151.7" y2="800.4" stroke="#000" stroke-width="1.3" fill="none"/><line x1="80.0" y1="688.6" x2="33.1" y2="683.7" stroke="#000" stroke-width="1.3" fill="none"/><line x1="28.4" y1="643.5" x2="-21.6" y2="638.4" stroke="#000" stroke-width="1.3" fill="none"/><line x1="-87.5" y1="743.8" x2="-106.3" y2="771.5" stroke="#000" stroke-width="1.3" fill="none" stroke-dasharray="3 3"/><line x1="-6.6" y1="832.8" x2="-57.3" y2="826.9" stroke="#000" stroke-width="1.3" fill="none" stroke-dasharray="3 3"/><line x1="48.3" y1="866.6" x2="0.6" y2="861.0" stroke="#000" stroke-width="1.3" fill="none" stroke-dasharray="3 3"/><line x1="231.5" y1="778.9" x2="217.6" y2="807.8" stroke="#000" stroke-width="1.3" fill="none"/><line x1="99.5" y1="656.2" x2="53.4" y2="651.4" stroke="#000" stroke-width="1.3" fill="none"/><line x1="23.1" y1="584.3" x2="-27.4" y2="579.3" stroke="#000" stroke-width="1.3" fill="none"/><line x1="-149.7" y1="736.9" x2="-169.5" y2="764.4" stroke="#000" stroke-width="1.3" fill="none" stroke-dasharray="3 3"/><line x1="52.9" y1="919.2" x2="5.8" y2="913.5" stroke="#000" stroke-width="1.3" fill="none" stroke-dasharray="3 3"/><line x1="296.9" y1="786.1" x2="284.1" y2="815.2" stroke="#000" stroke-width="1.3" fill="none"/><line x1="118.2" y1="625.0" x2="73.0" y2="620.4" stroke="#000" stroke-width="1.3" fill="none"/><line x1="17.7" y1="523.7" x2="-33.4" y2="518.9" stroke="#000" stroke-width="1.3" fill="none"/><line x1="-211.5" y1="730.2" x2="-232.2" y2="757.4" stroke="#000" stroke-width="1.3" fill="none" stroke-dasharray="3 3"/><line x1="57.5" y1="970.6" x2="10.9" y2="964.8" stroke="#000" stroke-width="1.3" fill="none" stroke-dasharray="3 3"/><line x1="362.9" y1="793.4" x2="351.1" y2="822.7" stroke="#000" stroke-width="1.3" fill="none"/><line x1="136.2" y1="595.0" x2="91.8" y2="590.6" stroke="#000" stroke-width="1.3" fill="none"/><line x1="12.1" y1="461.6" x2="-39.6" y2="456.8" stroke="#000" stroke-width="1.3" fill="none"/><line x1="-272.7" y1="723.4" x2="-294.3" y2="750.5" stroke="#000" stroke-width="1.3" fill="none" stroke-dasharray="3 3"/><line x1="62.0" y1="1020.8" x2="15.9" y2="1015.0" stroke="#000" stroke-width="1.3" fill="none" stroke-dasharray="3 3"/><line x1="429.4" y1="800.7" x2="418.7" y2="830.3" stroke="#000" stroke-width="1.3" fill="none"/><line x1="153.5" y1="566.1" x2="109.9" y2="561.9" stroke="#000" stroke-width="1.3" fill="none"/><line x1="6.5" y1="397.8" x2="-45.9" y2="393.3" stroke="#000" stroke-width="1.3" fill="none"/><line x1="-333.5" y1="716.7" x2="-356.0" y2="743.5" stroke="#000" stroke-width="1.3" fill="none" stroke-dasharray="3 3"/><line x1="66.4" y1="1070.0" x2="20.7" y2="1064.0" stroke="#000" stroke-width="1.3" fill="none" stroke-dasharray="3 3"/><line x1="496.4" y1="808.1" x2="486.8" y2="838.0" stroke="#000" stroke-width="1.3" fill="none"/><line x1="170.2" y1="538.3" x2="127.4" y2="534.2" stroke="#000" stroke-width="1.3" fill="none"/><line x1="0.6" y1="332.5" x2="-52.4" y2="328.1" stroke="#000" stroke-width="1.3" fill="none"/><line x1="70.7" y1="1118.0" x2="25.5" y2="1112.0" stroke="#000" stroke-width="1.3" fill="none" stroke-dasharray="3 3"/><line x1="564.1" y1="815.5" x2="555.6" y2="845.7" stroke="#000" stroke-width="1.3" fill="none"/><line x1="186.3" y1="511.5" x2="144.2" y2="507.6" stroke="#000" stroke-width="1.3" fill="none"/><line x1="-5.4" y1="265.4" x2="-59.1" y2="261.2" stroke="#000" stroke-width="1.3" fill="none"/><line x1="74.9" y1="1165.1" x2="30.2" y2="1159.0" stroke="#000" stroke-width="1.3" fill="none" stroke-dasharray="3 3"/><line x1="632.3" y1="823.0" x2="624.9" y2="853.4" stroke="#000" stroke-width="1.3" fill="none"/><line x1="201.8" y1="485.7" x2="160.4" y2="481.9" stroke="#000" stroke-width="1.3" fill="none"/><line x1="-11.5" y1="196.5" x2="-65.9" y2="192.5" stroke="#000" stroke-width="1.3" fill="none"/><line x1="79.0" y1="1211.1" x2="34.8" y2="1205.0" stroke="#000" stroke-width="1.3" fill="none" stroke-dasharray="3 3"/><line x1="701.1" y1="830.6" x2="688.5" y2="893.0" stroke="#000" stroke-width="1.3" fill="none"/><line x1="216.8" y1="460.7" x2="135.5" y2="453.4" stroke="#000" stroke-width="1.3" fill="none"/><line x1="-17.8" y1="125.8" x2="-127.6" y2="118.2" stroke="#000" stroke-width="1.3" fill="none"/><line x1="83.0" y1="1256.2" x2="-4.3" y2="1243.8" stroke="#000" stroke-width="1.3" fill="none" stroke-dasharray="3 3"/><line x1="770.5" y1="838.2" x2="765.4" y2="869.2" stroke="#000" stroke-width="1.3" fill="none"/><line x1="231.3" y1="436.6" x2="191.2" y2="433.1" stroke="#000" stroke-width="1.3" fill="none"/><line x1="840.5" y1="845.9" x2="836.6" y2="877.1" stroke="#000" stroke-width="1.3" fill="none"/><line x1="245.3" y1="413.3" x2="205.8" y2="409.9" stroke="#000" stroke-width="1.3" fill="none"/><line x1="911.1" y1="853.7" x2="908.4" y2="885.2" stroke="#000" stroke-width="1.3" fill="none"/><line x1="258.8" y1="390.8" x2="219.9" y2="387.5" stroke="#000" stroke-width="1.3" fill="none"/><line x1="982.3" y1="861.5" x2="980.9" y2="893.3" stroke="#000" stroke-width="1.3" fill="none"/><line x1="271.8" y1="369.1" x2="233.6" y2="365.9" stroke="#000" stroke-width="1.3" fill="none"/><line x1="1054.1" y1="869.5" x2="1054.0" y2="901.5" stroke="#000" stroke-width="1.3" fill="none"/><line x1="284.5" y1="348.0" x2="246.8" y2="344.9" stroke="#000" stroke-width="1.3" fill="none"/><line x1="1126.6" y1="877.4" x2="1127.8" y2="909.7" stroke="#000" stroke-width="1.3" fill="none"/><line x1="296.7" y1="327.6" x2="259.7" y2="324.6" stroke="#000" stroke-width="1.3" fill="none"/><line x1="308.6" y1="307.8" x2="272.1" y2="304.9" stroke="#000" stroke-width="1.3" fill="none"/><line x1="320.1" y1="288.6" x2="284.1" y2="285.8" stroke="#000" stroke-width="1.3" fill="none"/><line x1="331.3" y1="270.1" x2="295.8" y2="267.3" stroke="#000" stroke-width="1.3" fill="none"/><line x1="342.1" y1="252.0" x2="272.3" y2="246.7" stroke="#000" stroke-width="1.3" fill="none"/><line x1="352.6" y1="234.5" x2="318.1" y2="231.9" stroke="#000" stroke-width="1.3" fill="none"/><line x1="362.8" y1="217.5" x2="328.8" y2="215.0" stroke="#000" stroke-width="1.3" fill="none"/><line x1="372.8" y1="201.0" x2="339.2" y2="198.6" stroke="#000" stroke-width="1.3" fill="none"/><line x1="382.4" y1="184.9" x2="349.3" y2="182.6" stroke="#000" stroke-width="1.3" fill="none"/><line x1="391.8" y1="169.3" x2="359.1" y2="167.0" stroke="#000" stroke-width="1.3" fill="none"/><line x1="400.9" y1="154.1" x2="368.6" y2="151.9" stroke="#000" stroke-width="1.3" fill="none"/><line x1="409.7" y1="139.4" x2="377.9" y2="137.2" stroke="#000" stroke-width="1.3" fill="none"/><line x1="418.4" y1="125.0" x2="387.0" y2="122.9" stroke="#000" stroke-width="1.3" fill="none"/><line x1="426.8" y1="111.0" x2="395.8" y2="108.9" stroke="#000" stroke-width="1.3" fill="none"/><line x1="435.0" y1="97.3" x2="373.8" y2="93.3" stroke="#000" stroke-width="1.3" fill="none"/><line x1="443.0" y1="84.0" x2="412.7" y2="82.1" stroke="#000" stroke-width="1.3" fill="none"/><line x1="450.7" y1="71.1" x2="420.8" y2="69.2" stroke="#000" stroke-width="1.3" fill="none"/><line x1="458.3" y1="58.4" x2="428.8" y2="56.6" stroke="#000" stroke-width="1.3" fill="none"/><line x1="465.7" y1="46.1" x2="436.5" y2="44.3" stroke="#000" stroke-width="1.3" fill="none"/><line x1="473.0" y1="34.1" x2="444.1" y2="32.3" stroke="#000" stroke-width="1.3" fill="none"/><line x1="480.0" y1="22.3" x2="451.5" y2="20.6" stroke="#000" stroke-width="1.3" fill="none"/><line x1="486.9" y1="10.9" x2="458.7" y2="9.2" stroke="#000" stroke-width="1.3" fill="none"/><line x1="493.6" y1="-0.3" x2="465.7" y2="-2.0" stroke="#000" stroke-width="1.3" fill="none"/><line x1="500.2" y1="-11.2" x2="472.6" y2="-12.9" stroke="#000" stroke-width="1.3" fill="none"/><line x1="506.6" y1="-21.9" x2="452.1" y2="-25.1" stroke="#000" stroke-width="1.3" fill="none"/><path d="M450.4 85.0 L481.0 86.6" stroke="#000" stroke-width="1.3" fill="none"/><path d="M450.4 85.0 L452.4 80.3" stroke="#000" stroke-width="1.3" fill="none"/><path d="M469.6 85.8 L471.4 81.3" stroke="#000" stroke-width="1.3" fill="none"/><path d="M481.0 86.6 L483.6 81.5" stroke="#000" stroke-width="1.3" fill="none"/><path d="M447.2 87.2 L478.5 89.2 L475.6 95.0 L444.7 92.7 L447.2 87.2" stroke="#000" stroke-width="1.3" fill="none"/><path d="M444.0 95.6 L474.2 98.0 L471.7 102.6 L441.3 100.3 L444.0 95.6" stroke="#000" stroke-width="1.3" fill="none"/><path d="M361.2 235.6 L364.8 229.5 L386.7 230.5 L383.3 237.3 L395.4 238.5 L399.4 231.2" stroke="#000" stroke-width="1.3" fill="none"/><path d="M358.0 239.7 L393.2 241.7 L390.3 248.0 L355.0 245.8 L358.0 239.7" stroke="#000" stroke-width="1.3" fill="none"/><path d="M352.4 249.4 L388.1 251.6 L385.2 258.2 L349.2 256.0 L352.4 249.4" stroke="#000" stroke-width="1.3" fill="none"/><path d="M0.0 57.1 L47.1 60.5" stroke="#000" stroke-width="1.3" fill="none"/><path d="M0.0 71.6 L47.5 74.4 L49.8 102.2 L0.0 99.3" stroke="#000" stroke-width="1.3" fill="none"/><path d="M0.0 113.3 L50.7 116.5 L52.5 144.2 L0.0 140.1" stroke="#000" stroke-width="1.3" fill="none"/><path d="M734.3 796.3 L760.8 799.4 L756.0 828.7 L729.0 826.0 Z" stroke="#000" stroke-width="1.3" fill="none"/><path d="M774.0 800.3 L800.6 803.5 L796.2 833.3 L769.2 830.2 Z" stroke="#000" stroke-width="1.3" fill="none"/><path d="M85.4 735.0 L87.7 730.9 L89.8 728.2 L92.7 725.8 L96.3 723.7 L100.5 722.0 L105.2 720.7 L110.2 719.9 L115.2 719.6 L120.2 719.9 L124.8 720.7 L129.0 721.9 L132.6 723.6 L135.4 725.7 L137.3 728.1 L138.3 730.7 L138.3 733.5 L137.3 736.2 L135.0 740.4 L184.9 745.8 L187.1 741.6 L189.0 738.9 L191.7 736.5 L195.3 734.4 L199.4 732.6 L204.1 731.3 L209.0 730.5 L214.1 730.2 L219.1 730.5 L223.8 731.3 L228.1 732.5 L231.7 734.3 L234.7 736.4 L236.8 738.8 L237.9 741.5 L238.1 744.2 L237.2 747.0 L235.2 751.2 L285.8 756.7 L287.7 752.5 L289.4 749.8 L292.1 747.3 L295.5 745.1 L299.6 743.4 L304.2 742.0 L309.1 741.2 L314.2 740.9 L319.2 741.2 L324.0 742.0 L328.4 743.3 L332.2 745.0 L335.3 747.2 L337.5 749.6 L338.9 752.3 L339.2 755.1 L338.5 757.9 L336.7 762.2 L387.9 767.7 L389.6 763.5 L391.2 760.7 L393.7 758.2 L397.0 756.0 L401.0 754.2 L405.6 752.9 L410.5 752.1 L415.6 751.8 L420.7 752.1 L425.5 752.9 L430.0 754.2 L434.0 756.0 L437.2 758.1 L439.6 760.6 L441.1 763.3 L441.6 766.2 L441.1 769.0 L439.5 773.3 L491.4 778.9 L492.9 774.6 L494.3 771.8 L496.7 769.3 L499.9 767.1 L503.8 765.3 L508.3 763.9 L513.2 763.1 L518.3 762.8 L523.4 763.1 L528.4 763.9 L533.0 765.2 L537.1 767.0 L540.4 769.2 L543.0 771.7 L544.7 774.5 L545.4 777.4 L545.0 780.2 L543.7 784.6 L596.3 790.3 L597.5 785.9 L598.8 783.1 L601.0 780.5 L604.1 778.3 L607.9 776.4 L612.3 775.1 L617.2 774.2 L622.3 773.9 L627.5 774.2 L632.6 775.0 L637.3 776.4 L641.5 778.2 L645.0 780.4 L647.8 783.0 L649.6 785.8 L650.5 788.7 L650.3 791.6 L649.3 796.0 L702.6 801.8 L707.2 779.1 L705.7 778.9 L699.3 777.9 L693.4 776.2 L688.1 774.0 L683.7 771.2 L680.2 768.1 L677.9 764.7 L676.8 761.2 L677.0 757.7 L678.4 754.3 L680.9 751.3 L684.6 748.6 L689.1 746.4 L694.5 744.7 L700.4 743.7 L706.6 743.3 L712.9 743.7 L714.4 743.8 L717.9 726.8 L716.4 726.7 L710.3 725.7 L704.5 724.1 L699.4 722.0 L695.0 719.4 L691.7 716.5 L689.4 713.3 L688.3 710.0 L688.4 706.7 L689.8 703.5 L692.2 700.6 L695.8 698.1 L700.2 696.0 L705.3 694.5 L711.0 693.5 L717.1 693.2 L723.2 693.5 L724.7 693.7 L728.0 677.6 L726.5 677.5 L720.6 676.6 L715.0 675.1 L710.0 673.1 L705.7 670.7 L702.5 667.9 L700.2 664.9 L699.2 661.8 L699.3 658.7 L700.5 655.7 L702.9 653.0 L706.3 650.6 L710.6 648.6 L715.6 647.2 L721.1 646.3 L727.0 645.9 L732.9 646.2 L734.4 646.4 L737.5 631.3 L736.0 631.1 L730.3 630.3 L724.8 628.9 L719.9 627.0 L715.8 624.7 L712.6 622.1 L710.4 619.2 L709.4 616.3 L709.4 613.4 L710.7 610.6 L713.0 608.0 L716.2 605.7 L720.4 603.9 L725.2 602.5 L730.6 601.6 L736.3 601.3 L742.1 601.6 L743.5 601.8 L746.4 587.5 L745.1 587.4 L739.4 586.5 L734.1 585.2 L729.4 583.4 L725.4 581.3 L722.2 578.8 L720.1 576.1 L719.0 573.3 L719.1 570.6 L720.2 567.9 L722.5 565.5 L725.7 563.3 L729.7 561.6 L734.4 560.3 L739.6 559.5 L745.1 559.2 L750.8 559.4 L752.2 559.6 L754.9 546.1 L753.6 545.9 L748.1 545.2 L742.9 543.9 L738.3 542.2 L734.4 540.2 L731.3 537.8 L729.2 535.3 L728.2 532.7 L728.2 530.0 L729.3 527.5 L731.5 525.2 L734.6 523.2 L738.5 521.5 L743.0 520.3 L748.1 519.5 L753.5 519.3 L759.0 519.5 L760.3 519.6 L763.0 506.8 L761.6 506.7 L756.3 506.0 L751.3 504.8 L746.7 503.2 L742.9 501.2 L739.9 499.0 L737.9 496.6 L736.8 494.1 L736.9 491.6 L737.9 489.2 L740.0 487.0 L743.0 485.1 L746.8 483.5 L751.2 482.4 L756.2 481.7 L761.4 481.4 L766.8 481.6 L768.1 481.7 L770.6 469.6 L769.3 469.5 L764.1 468.8 L759.2 467.7 L754.8 466.1 L751.0 464.3 L748.1 462.2 L746.1 459.9 L745.1 457.5 L745.1 455.2 L746.1 452.9 L748.1 450.8 L751.0 449.0 L754.7 447.5 L759.0 446.4 L763.9 445.7 L769.0 445.5 L774.2 445.7 L775.5 445.8 L777.8 434.2 L776.6 434.1 L771.5 433.5 L766.7 432.4 L762.4 431.0 L758.7 429.2 L755.8 427.2 L753.9 425.0 L752.9 422.8 L752.9 420.5 L753.9 418.4 L755.8 416.4 L758.6 414.6 L762.2 413.2 L766.5 412.2 L771.1 411.5 L776.1 411.3 L781.2 411.5 L782.5 411.6 L784.7 400.6 L783.5 400.5 L778.5 399.9 L773.8 398.9 L769.6 397.5 L766.0 395.8 L763.2 393.9 L761.3 391.8 L760.3 389.7 L760.3 387.5 L761.2 385.5 L763.1 383.6 L765.9 381.9 L769.4 380.6 L773.5 379.6 L778.1 379.0 L782.9 378.7 L787.9 378.9 L789.1 379.0 L791.8 365.9 L751.6 362.7 L750.8 365.7 L750.5 366.4 L749.9 367.0 L749.0 367.6 L747.8 368.0 L746.4 368.3 L744.9 368.5 L743.3 368.6 L741.6 368.6 L718.1 366.6 L716.5 366.4 L715.0 366.1 L713.6 365.7 L712.5 365.1 L711.6 364.5 L711.0 363.9 L710.7 363.2 L710.7 362.5 L711.5 359.5 L671.7 356.2 L670.8 359.3 L670.4 359.9 L669.7 360.5 L668.8 361.1 L667.6 361.5 L666.2 361.8 L664.7 362.0 L663.1 362.1 L661.4 362.0 L638.1 360.2 L636.6 360.0 L635.1 359.6 L633.7 359.2 L632.6 358.7 L631.8 358.1 L631.2 357.4 L630.9 356.7 L631.0 356.0 L632.0 353.0 L592.5 349.8 L591.5 352.8 L591.1 353.5 L590.4 354.1 L589.4 354.6 L588.2 355.1 L586.8 355.4 L585.2 355.6 L583.6 355.7 L582.0 355.6 L559.0 353.7 L557.4 353.5 L555.9 353.2 L554.6 352.8 L553.6 352.3 L552.7 351.7 L552.2 351.0 L552.0 350.3 L552.1 349.6 L553.3 346.7 L514.2 343.5 L512.9 346.5 L512.5 347.1 L511.8 347.7 L510.8 348.2 L509.5 348.7 L508.1 349.0 L506.6 349.2 L505.0 349.3 L503.4 349.2 L480.5 347.4 L479.0 347.2 L477.6 346.8 L476.3 346.4 L475.3 345.9 L474.5 345.3 L474.0 344.7 L473.8 344.0 L474.0 343.3 L475.3 340.4 L436.6 337.3 L435.2 340.2 L434.7 340.8 L434.0 341.4 L432.9 341.9 L431.7 342.4 L430.3 342.7 L428.7 342.9 L427.1 342.9 L425.5 342.9 L402.9 341.1 L401.4 340.9 L400.0 340.5 L398.7 340.1 L397.7 339.6 L397.0 339.0 L396.6 338.4 L396.4 337.7 L396.6 337.1 L398.1 334.1 L359.8 331.0 L358.2 333.9 L357.7 334.6 L356.9 335.2 L355.8 335.7 L354.6 336.1 L353.1 336.4 L351.6 336.6 L350.0 336.7 L348.4 336.6 L326.0 334.8 L324.5 334.6 L323.1 334.3 L321.9 333.9 L321.0 333.4 L320.3 332.8 L319.9 332.2 L319.8 331.5 L320.0 330.8 L321.7 328.0 L283.7 324.9 L276.2 337.2 L277.3 337.3 L281.8 337.8 L286.0 338.8 L289.5 340.0 L292.4 341.6 L294.4 343.3 L295.6 345.2 L295.8 347.3 L295.1 349.3 L293.5 351.2 L291.0 353.0 L287.7 354.6 L283.8 355.9 L279.4 356.9 L274.7 357.5 L269.8 357.7 L265.0 357.5 L263.8 357.4 L257.5 367.7 L258.7 367.8 L263.3 368.4 L267.5 369.3 L271.1 370.7 L274.0 372.3 L276.1 374.1 L277.3 376.1 L277.5 378.2 L276.7 380.3 L275.0 382.4 L272.4 384.3 L269.1 385.9 L265.0 387.3 L260.5 388.3 L255.7 389.0 L250.7 389.2 L245.7 389.0 L244.6 388.9 L238.0 399.7 L239.1 399.8 L243.9 400.4 L248.1 401.4 L251.8 402.8 L254.8 404.5 L256.9 406.4 L258.1 408.5 L258.2 410.8 L257.4 413.0 L255.7 415.1 L253.0 417.1 L249.5 418.8 L245.4 420.3 L240.7 421.3 L235.7 422.0 L230.6 422.2 L225.6 422.0 L224.3 421.9 L217.4 433.3 L218.6 433.4 L223.4 434.0 L227.8 435.1 L231.6 436.5 L234.6 438.3 L236.7 440.4 L237.9 442.6 L238.0 444.9 L237.2 447.2 L235.3 449.5 L232.5 451.6 L228.9 453.4 L224.7 454.9 L219.9 456.0 L214.8 456.7 L209.5 457.0 L204.3 456.8 L203.1 456.6 L195.8 468.6 L197.0 468.7 L202.0 469.4 L206.4 470.5 L210.3 472.0 L213.3 473.9 L215.5 476.0 L216.6 478.4 L216.8 480.8 L215.8 483.3 L213.9 485.6 L211.0 487.8 L207.3 489.8 L202.9 491.3 L198.0 492.5 L192.7 493.3 L187.3 493.5 L182.0 493.3 L180.7 493.2 L173.1 505.7 L174.3 505.9 L179.4 506.6 L183.9 507.8 L187.9 509.4 L191.0 511.4 L193.1 513.6 L194.3 516.1 L194.4 518.7 L193.4 521.2 L191.4 523.7 L188.4 526.0 L184.5 528.1 L180.0 529.7 L174.9 531.0 L169.5 531.8 L163.9 532.0 L158.5 531.8 L157.2 531.7 L149.1 544.9 L150.4 545.0 L155.6 545.8 L160.2 547.1 L164.2 548.8 L167.4 550.8 L169.6 553.2 L170.7 555.8 L170.8 558.5 L169.7 561.3 L167.6 563.9 L164.5 566.3 L160.5 568.5 L155.8 570.3 L150.5 571.6 L144.9 572.4 L139.3 572.7 L133.7 572.4 L132.3 572.3 L123.8 586.3 L125.1 586.4 L130.4 587.2 L135.2 588.5 L139.3 590.3 L142.5 592.5 L144.7 595.1 L145.8 597.8 L145.8 600.7 L144.7 603.6 L142.5 606.3 L139.2 608.9 L135.1 611.2 L130.2 613.0 L124.8 614.4 L119.0 615.3 L113.2 615.6 L107.4 615.3 L106.1 615.2 L97.0 630.0 L98.4 630.1 L103.8 631.0 L108.7 632.4 L112.9 634.3 L116.1 636.6 L118.4 639.3 L119.5 642.2 L119.5 645.2 L118.2 648.3 L115.9 651.2 L112.5 654.0 L108.2 656.4 L103.2 658.3 L97.6 659.8 L91.6 660.7 L85.6 661.1 L79.7 660.8 L78.3 660.6 L68.7 676.3 L70.1 676.4 L75.7 677.3 L80.7 678.8 L85.0 680.8 L88.3 683.3 L90.5 686.1 L91.6 689.2 L91.5 692.4 L90.2 695.7 L87.7 698.8 L84.2 701.7 L79.7 704.2 L74.5 706.3 L68.7 707.9 L62.6 708.9 L56.3 709.2 L50.3 708.9 L48.8 708.8 L36.0 729.6 Z" fill="#f7d22b" fill-rule="evenodd" /><path d="M355.3 337.8 L355.6 337.9 L356.0 337.9 L356.5 337.9 L356.9 338.0 L357.4 338.0 L357.8 338.0 L358.3 338.0 L358.7 337.9 L359.2 337.9 L359.6 337.9 L360.1 337.8 L360.5 337.8 L360.9 337.7 L361.4 337.7 L361.8 337.6 L362.2 337.5 L362.6 337.4 L363.0 337.3 L363.4 337.2 L363.7 337.1 L364.1 337.0 L364.4 336.8 L364.7 336.7 L365.0 336.6 L365.3 336.4 L365.6 336.3 L365.9 336.1 L366.1 335.9 L366.3 335.8 L366.5 335.6 L366.7 335.4 L366.8 335.2 L366.9 335.1 L367.1 334.9 L367.1 334.7 L367.2 334.5 L367.3 334.3 L367.3 334.1 L367.3 333.9 L367.3 333.8 L367.2 333.6 L367.2 333.4 L367.1 333.2 L367.0 333.0 L366.8 332.9 L366.7 332.7 L366.5 332.5 L366.3 332.3 L366.1 332.2 L365.9 332.0 L365.6 331.9 L365.3 331.7 L365.1 331.6 L364.8 331.5 L364.7 331.4 L363.8 331.4 L359.8 331.0 L358.2 333.9 L357.7 334.6 L356.9 335.2 L355.8 335.7 L354.6 336.1 L353.1 336.4 L351.6 336.6 L350.0 336.7 L348.4 336.6 L326.0 334.8 L324.5 334.6 L323.1 334.3 L321.9 333.9 L321.0 333.4 L320.3 332.8 L319.9 332.2 L319.8 331.5 L320.0 330.8 L321.7 328.0 L317.7 327.6 L316.7 327.6 L316.7 327.6 L316.3 327.6 L315.9 327.7 L315.5 327.8 L315.1 327.9 L314.7 328.0 L314.3 328.1 L314.0 328.3 L313.7 328.4 L313.3 328.5 L313.0 328.7 L312.7 328.8 L312.5 329.0 L312.2 329.1 L312.0 329.3 L311.7 329.5 L311.5 329.6 L311.4 329.8 L311.2 330.0 L311.1 330.2 L310.9 330.3 L310.9 330.5 L310.8 330.7 L310.7 330.9 L310.7 331.1 L310.7 331.3 L310.7 331.4 L310.7 331.6 L310.8 331.8 L310.9 332.0 L311.0 332.2 L311.1 332.3 L311.2 332.5 L311.4 332.7 L311.6 332.9 L311.8 333.0 L312.0 333.2 L312.3 333.3 L312.5 333.5 L312.8 333.6 L313.1 333.8 L313.4 333.9 L313.7 334.0 L314.1 334.1 L314.4 334.2 L314.8 334.3 L315.2 334.4 L315.6 334.5 L316.0 334.6 L316.4 334.6 L316.8 334.7 L317.3 334.7 L317.7 334.8 L318.1 334.8 L318.4 334.8 L318.9 335.1 L320.7 335.7 L322.8 336.2 L325.1 336.5 L347.5 338.3 L349.9 338.4 L352.3 338.3 L354.6 338.0 Z M432.5 344.1 L432.8 344.1 L433.3 344.2 L433.7 344.2 L434.2 344.2 L434.6 344.2 L435.1 344.2 L435.5 344.2 L436.0 344.2 L436.4 344.2 L436.9 344.2 L437.3 344.1 L437.8 344.1 L438.2 344.0 L438.6 343.9 L439.0 343.9 L439.4 343.8 L439.8 343.7 L440.2 343.6 L440.6 343.5 L440.9 343.4 L441.3 343.2 L441.6 343.1 L441.9 343.0 L442.2 342.8 L442.5 342.7 L442.8 342.5 L443.0 342.4 L443.2 342.2 L443.4 342.0 L443.6 341.8 L443.8 341.7 L443.9 341.5 L444.1 341.3 L444.2 341.1 L444.2 340.9 L444.3 340.7 L444.3 340.6 L444.3 340.4 L444.3 340.2 L444.3 340.0 L444.2 339.8 L444.2 339.6 L444.1 339.4 L443.9 339.3 L443.8 339.1 L443.6 338.9 L443.4 338.7 L443.2 338.6 L443.0 338.4 L442.8 338.2 L442.5 338.1 L442.2 337.9 L441.9 337.8 L441.6 337.7 L441.6 337.7 L440.6 337.6 L436.6 337.3 L435.2 340.2 L434.7 340.8 L434.0 341.4 L432.9 341.9 L431.7 342.4 L430.3 342.7 L428.7 342.9 L427.1 342.9 L425.5 342.9 L402.9 341.1 L401.4 340.9 L400.0 340.5 L398.7 340.1 L397.7 339.6 L397.0 339.0 L396.6 338.4 L396.4 337.7 L396.6 337.1 L398.1 334.1 L394.1 333.8 L393.1 333.7 L393.1 333.7 L392.7 333.8 L392.3 333.9 L391.9 334.0 L391.5 334.1 L391.1 334.2 L390.8 334.3 L390.4 334.4 L390.1 334.6 L389.8 334.7 L389.5 334.9 L389.2 335.0 L388.9 335.2 L388.7 335.3 L388.5 335.5 L388.2 335.6 L388.0 335.8 L387.9 336.0 L387.7 336.2 L387.6 336.3 L387.5 336.5 L387.4 336.7 L387.3 336.9 L387.3 337.1 L387.3 337.3 L387.3 337.5 L387.3 337.7 L387.4 337.8 L387.4 338.0 L387.5 338.2 L387.6 338.4 L387.8 338.6 L387.9 338.7 L388.1 338.9 L388.3 339.1 L388.5 339.2 L388.7 339.4 L389.0 339.6 L389.3 339.7 L389.6 339.8 L389.9 340.0 L390.2 340.1 L390.5 340.2 L390.9 340.4 L391.2 340.5 L391.6 340.6 L392.0 340.7 L392.4 340.7 L392.8 340.8 L393.2 340.9 L393.7 340.9 L394.1 341.0 L394.5 341.0 L395.0 341.1 L395.3 341.1 L395.8 341.3 L397.6 342.0 L399.7 342.4 L402.0 342.7 L424.7 344.6 L427.1 344.7 L429.5 344.6 L431.8 344.3 Z M303.6 357.3 L303.7 357.1 L303.9 356.8 L304.0 356.5 L304.1 356.3 L304.1 356.0 L304.1 355.7 L304.1 355.5 L304.0 355.2 L304.0 354.9 L303.9 354.7 L303.7 354.4 L303.5 354.2 L303.3 353.9 L303.1 353.7 L302.9 353.4 L302.6 353.2 L302.3 353.0 L301.9 352.8 L301.5 352.6 L301.1 352.4 L300.7 352.2 L300.3 352.0 L299.8 351.8 L299.3 351.6 L298.8 351.5 L298.3 351.4 L298.2 351.3 L299.6 349.6 L300.3 347.9 L300.4 347.9 L301.0 347.8 L301.6 347.8 L302.2 347.7 L302.9 347.6 L303.5 347.5 L304.0 347.4 L304.6 347.3 L305.2 347.2 L305.7 347.0 L306.3 346.9 L306.8 346.7 L307.3 346.5 L307.8 346.3 L308.2 346.1 L308.7 345.9 L309.1 345.7 L309.5 345.5 L309.8 345.3 L310.2 345.1 L310.5 344.8 L310.7 344.6 L311.0 344.3 L311.2 344.1 L311.4 343.8 L311.6 343.6 L311.7 343.3 L311.8 343.1 L311.9 342.8 L311.9 342.5 L312.0 342.3 L311.9 342.0 L311.9 341.8 L311.8 341.5 L311.7 341.2 L311.6 341.0 L311.4 340.7 L311.2 340.5 L310.9 340.3 L310.7 340.0 L310.4 339.8 L310.1 339.6 L309.8 339.4 L309.4 339.2 L309.0 339.0 L308.6 338.8 L308.1 338.6 L307.7 338.4 L307.2 338.3 L306.7 338.1 L306.2 338.0 L305.7 337.8 L305.1 337.7 L304.6 337.6 L304.0 337.5 L303.4 337.4 L302.8 337.4 L302.2 337.3 L301.6 337.3 L300.9 337.2 L300.3 337.2 L299.7 337.2 L299.1 337.2 L298.4 337.3 L297.8 337.3 L297.2 337.3 L296.6 337.4 L296.0 337.5 L295.3 337.5 L294.8 337.6 L294.2 337.7 L293.6 337.9 L293.0 338.0 L292.5 338.1 L291.9 338.3 L291.9 338.3 L288.7 337.2 L283.8 336.1 L278.5 335.4 L277.3 335.3 L276.2 337.2 L277.3 337.3 L281.8 337.8 L286.0 338.8 L289.5 340.0 L292.4 341.6 L294.4 343.3 L295.6 345.2 L295.8 347.3 L295.1 349.3 L293.5 351.2 L291.0 353.0 L287.7 354.6 L283.8 355.9 L279.4 356.9 L274.7 357.5 L269.8 357.7 L265.0 357.5 L263.8 357.4 L262.6 359.3 L263.8 359.4 L269.5 359.7 L275.3 359.4 L279.6 358.9 L279.6 358.9 L279.9 359.1 L280.3 359.3 L280.6 359.5 L281.0 359.7 L281.4 359.9 L281.9 360.1 L282.3 360.3 L282.8 360.5 L283.3 360.6 L283.8 360.8 L284.4 360.9 L284.9 361.0 L285.5 361.1 L286.1 361.2 L286.7 361.3 L287.3 361.4 L287.9 361.4 L288.5 361.5 L289.2 361.5 L289.8 361.5 L290.5 361.5 L291.1 361.5 L291.7 361.5 L292.4 361.5 L293.0 361.4 L293.6 361.4 L294.3 361.3 L294.9 361.2 L295.5 361.1 L296.1 361.0 L296.7 360.9 L297.3 360.7 L297.8 360.6 L298.4 360.4 L298.9 360.3 L299.4 360.1 L299.9 359.9 L300.3 359.7 L300.8 359.5 L301.2 359.3 L301.6 359.1 L301.9 358.8 L302.3 358.6 L302.6 358.4 L302.9 358.1 L303.1 357.9 L303.4 357.6 Z M285.3 388.8 L285.4 388.5 L285.6 388.3 L285.7 388.0 L285.8 387.7 L285.8 387.4 L285.9 387.1 L285.8 386.9 L285.8 386.6 L285.7 386.3 L285.6 386.0 L285.5 385.8 L285.3 385.5 L285.1 385.2 L284.9 385.0 L284.6 384.7 L284.3 384.5 L284.0 384.3 L283.6 384.0 L283.3 383.8 L282.9 383.6 L282.4 383.4 L282.0 383.2 L281.5 383.0 L281.0 382.8 L280.5 382.7 L280.0 382.5 L279.9 382.5 L281.4 380.7 L282.0 378.9 L282.1 378.9 L282.8 378.8 L283.4 378.8 L284.0 378.7 L284.7 378.6 L285.3 378.5 L285.9 378.4 L286.5 378.3 L287.1 378.1 L287.6 378.0 L288.2 377.8 L288.7 377.7 L289.2 377.5 L289.7 377.3 L290.2 377.1 L290.6 376.9 L291.1 376.7 L291.5 376.4 L291.8 376.2 L292.2 376.0 L292.5 375.7 L292.8 375.4 L293.1 375.2 L293.3 374.9 L293.5 374.7 L293.7 374.4 L293.8 374.1 L293.9 373.8 L294.0 373.6 L294.1 373.3 L294.1 373.0 L294.1 372.7 L294.0 372.5 L293.9 372.2 L293.8 371.9 L293.7 371.7 L293.5 371.4 L293.3 371.2 L293.1 370.9 L292.8 370.7 L292.5 370.4 L292.2 370.2 L291.9 370.0 L291.5 369.7 L291.1 369.5 L290.7 369.3 L290.2 369.2 L289.8 369.0 L289.3 368.8 L288.8 368.7 L288.2 368.5 L287.7 368.4 L287.1 368.3 L286.6 368.1 L286.0 368.0 L285.4 368.0 L284.8 367.9 L284.1 367.8 L283.5 367.8 L282.9 367.8 L282.2 367.7 L281.6 367.7 L280.9 367.7 L280.3 367.8 L279.7 367.8 L279.0 367.8 L278.4 367.9 L277.8 368.0 L277.1 368.1 L276.5 368.2 L275.9 368.3 L275.3 368.4 L274.8 368.5 L274.2 368.7 L273.6 368.8 L273.6 368.9 L270.3 367.7 L265.4 366.5 L259.9 365.8 L258.7 365.7 L257.5 367.7 L258.7 367.8 L263.3 368.4 L267.5 369.3 L271.1 370.7 L274.0 372.3 L276.1 374.1 L277.3 376.1 L277.5 378.2 L276.7 380.3 L275.0 382.4 L272.4 384.3 L269.1 385.9 L265.0 387.3 L260.5 388.3 L255.7 389.0 L250.7 389.2 L245.7 389.0 L244.6 388.9 L243.3 390.9 L244.5 391.0 L250.4 391.2 L256.3 391.0 L260.7 390.4 L260.7 390.4 L261.0 390.7 L261.4 390.9 L261.7 391.1 L262.1 391.3 L262.6 391.5 L263.0 391.7 L263.5 391.9 L264.0 392.1 L264.5 392.3 L265.0 392.4 L265.6 392.5 L266.1 392.7 L266.7 392.8 L267.3 392.9 L267.9 393.0 L268.6 393.0 L269.2 393.1 L269.8 393.2 L270.5 393.2 L271.1 393.2 L271.8 393.2 L272.4 393.2 L273.1 393.2 L273.7 393.1 L274.4 393.1 L275.0 393.0 L275.7 393.0 L276.3 392.9 L276.9 392.8 L277.6 392.6 L278.2 392.5 L278.7 392.4 L279.3 392.2 L279.9 392.1 L280.4 391.9 L280.9 391.7 L281.4 391.5 L281.9 391.3 L282.4 391.1 L282.8 390.9 L283.2 390.6 L283.6 390.4 L283.9 390.1 L284.3 389.9 L284.6 389.6 L284.8 389.4 L285.1 389.1 Z M266.1 421.9 L266.2 421.6 L266.4 421.3 L266.5 421.0 L266.6 420.7 L266.7 420.4 L266.7 420.1 L266.7 419.8 L266.6 419.5 L266.6 419.2 L266.4 418.9 L266.3 418.7 L266.1 418.4 L265.9 418.1 L265.7 417.8 L265.4 417.6 L265.1 417.3 L264.8 417.1 L264.5 416.8 L264.1 416.6 L263.7 416.4 L263.2 416.2 L262.8 416.0 L262.3 415.8 L261.8 415.6 L261.3 415.4 L260.7 415.3 L260.6 415.2 L262.2 413.4 L262.9 411.4 L263.0 411.4 L263.6 411.4 L264.3 411.3 L265.0 411.2 L265.6 411.2 L266.2 411.0 L266.9 410.9 L267.5 410.8 L268.1 410.6 L268.6 410.5 L269.2 410.3 L269.8 410.1 L270.3 410.0 L270.8 409.7 L271.3 409.5 L271.7 409.3 L272.2 409.1 L272.6 408.8 L273.0 408.6 L273.3 408.3 L273.7 408.1 L274.0 407.8 L274.2 407.6 L274.5 407.3 L274.7 407.0 L274.9 406.7 L275.0 406.4 L275.1 406.1 L275.2 405.9 L275.3 405.6 L275.3 405.3 L275.3 405.0 L275.3 404.7 L275.2 404.4 L275.1 404.1 L274.9 403.9 L274.8 403.6 L274.5 403.3 L274.3 403.0 L274.0 402.8 L273.8 402.5 L273.4 402.3 L273.1 402.1 L272.7 401.8 L272.3 401.6 L271.9 401.4 L271.4 401.2 L270.9 401.0 L270.5 400.9 L269.9 400.7 L269.4 400.5 L268.8 400.4 L268.3 400.3 L267.7 400.2 L267.1 400.1 L266.5 400.0 L265.8 399.9 L265.2 399.8 L264.6 399.8 L263.9 399.7 L263.3 399.7 L262.6 399.7 L261.9 399.7 L261.3 399.8 L260.6 399.8 L260.0 399.8 L259.3 399.9 L258.7 400.0 L258.0 400.1 L257.4 400.2 L256.8 400.3 L256.2 400.4 L255.6 400.6 L255.0 400.7 L254.4 400.9 L254.4 400.9 L251.1 399.7 L246.0 398.4 L240.4 397.7 L239.2 397.6 L238.0 399.7 L239.1 399.8 L243.9 400.4 L248.1 401.4 L251.8 402.8 L254.8 404.5 L256.9 406.4 L258.1 408.5 L258.2 410.8 L257.4 413.0 L255.7 415.1 L253.0 417.1 L249.5 418.8 L245.4 420.3 L240.7 421.3 L235.7 422.0 L230.6 422.2 L225.6 422.0 L224.3 421.9 L223.0 424.1 L224.2 424.2 L230.3 424.4 L236.3 424.1 L240.8 423.5 L240.9 423.6 L241.2 423.8 L241.5 424.0 L241.9 424.3 L242.3 424.5 L242.7 424.7 L243.2 424.9 L243.7 425.1 L244.2 425.3 L244.7 425.5 L245.3 425.6 L245.8 425.8 L246.4 425.9 L247.0 426.0 L247.6 426.1 L248.2 426.2 L248.9 426.3 L249.5 426.4 L250.2 426.4 L250.8 426.5 L251.5 426.5 L252.2 426.5 L252.8 426.5 L253.5 426.4 L254.2 426.4 L254.9 426.4 L255.5 426.3 L256.2 426.2 L256.8 426.1 L257.5 426.0 L258.1 425.9 L258.7 425.7 L259.3 425.6 L259.9 425.4 L260.5 425.3 L261.0 425.1 L261.6 424.9 L262.1 424.7 L262.6 424.5 L263.0 424.2 L263.5 424.0 L263.9 423.8 L264.3 423.5 L264.7 423.2 L265.0 423.0 L265.3 422.7 L265.6 422.4 L265.8 422.2 Z M245.9 456.6 L246.1 456.3 L246.2 456.0 L246.4 455.7 L246.4 455.4 L246.5 455.0 L246.5 454.7 L246.5 454.4 L246.5 454.1 L246.4 453.8 L246.3 453.5 L246.2 453.2 L246.0 452.9 L245.8 452.6 L245.6 452.3 L245.3 452.1 L245.0 451.8 L244.7 451.5 L244.3 451.3 L243.9 451.0 L243.5 450.8 L243.1 450.6 L242.6 450.4 L242.1 450.2 L241.6 450.0 L241.1 449.8 L240.5 449.7 L240.4 449.6 L242.0 447.7 L242.8 445.6 L242.9 445.6 L243.6 445.6 L244.2 445.5 L244.9 445.4 L245.6 445.3 L246.2 445.2 L246.9 445.1 L247.5 444.9 L248.1 444.8 L248.7 444.6 L249.3 444.5 L249.8 444.3 L250.4 444.1 L250.9 443.9 L251.4 443.6 L251.9 443.4 L252.3 443.2 L252.8 442.9 L253.2 442.6 L253.5 442.4 L253.9 442.1 L254.2 441.8 L254.5 441.5 L254.7 441.3 L255.0 441.0 L255.1 440.7 L255.3 440.4 L255.4 440.1 L255.5 439.8 L255.6 439.5 L255.6 439.1 L255.6 438.8 L255.6 438.5 L255.5 438.2 L255.4 437.9 L255.2 437.7 L255.1 437.4 L254.9 437.1 L254.6 436.8 L254.4 436.5 L254.1 436.3 L253.7 436.0 L253.4 435.8 L253.0 435.5 L252.6 435.3 L252.1 435.1 L251.7 434.9 L251.2 434.7 L250.7 434.5 L250.2 434.3 L249.6 434.2 L249.1 434.0 L248.5 433.9 L247.9 433.8 L247.3 433.7 L246.6 433.6 L246.0 433.5 L245.3 433.4 L244.7 433.4 L244.0 433.3 L243.3 433.3 L242.7 433.3 L242.0 433.3 L241.3 433.3 L240.6 433.4 L240.0 433.4 L239.3 433.5 L238.6 433.6 L238.0 433.7 L237.3 433.8 L236.7 433.9 L236.1 434.0 L235.5 434.2 L234.9 434.4 L234.3 434.5 L234.2 434.6 L230.9 433.2 L225.7 432.0 L219.9 431.2 L218.7 431.1 L217.4 433.3 L218.6 433.4 L223.4 434.0 L227.8 435.1 L231.6 436.5 L234.6 438.3 L236.7 440.4 L237.9 442.6 L238.0 444.9 L237.2 447.2 L235.3 449.5 L232.5 451.6 L228.9 453.4 L224.7 454.9 L219.9 456.0 L214.8 456.7 L209.5 457.0 L204.3 456.8 L203.1 456.6 L201.7 458.9 L203.0 459.0 L209.1 459.3 L215.4 459.0 L220.0 458.3 L220.0 458.4 L220.3 458.6 L220.7 458.9 L221.1 459.1 L221.5 459.4 L221.9 459.6 L222.4 459.8 L222.9 460.0 L223.4 460.2 L223.9 460.4 L224.5 460.5 L225.1 460.7 L225.6 460.8 L226.3 461.0 L226.9 461.1 L227.5 461.2 L228.2 461.3 L228.8 461.3 L229.5 461.4 L230.2 461.4 L230.9 461.4 L231.6 461.4 L232.2 461.4 L232.9 461.4 L233.6 461.4 L234.3 461.3 L235.0 461.2 L235.7 461.2 L236.3 461.1 L237.0 460.9 L237.7 460.8 L238.3 460.7 L238.9 460.5 L239.5 460.3 L240.1 460.2 L240.7 460.0 L241.2 459.8 L241.8 459.5 L242.3 459.3 L242.7 459.1 L243.2 458.8 L243.6 458.6 L244.0 458.3 L244.4 458.0 L244.8 457.8 L245.1 457.5 L245.4 457.2 L245.6 456.9 Z M224.6 493.1 L224.8 492.8 L225.0 492.5 L225.1 492.2 L225.2 491.8 L225.3 491.5 L225.3 491.2 L225.3 490.8 L225.3 490.5 L225.2 490.2 L225.1 489.9 L225.0 489.6 L224.8 489.3 L224.6 489.0 L224.4 488.7 L224.1 488.4 L223.8 488.1 L223.5 487.8 L223.1 487.5 L222.7 487.3 L222.3 487.0 L221.8 486.8 L221.4 486.6 L220.9 486.4 L220.4 486.2 L219.8 486.0 L219.2 485.8 L219.1 485.8 L220.8 483.7 L221.6 481.6 L221.7 481.6 L222.4 481.5 L223.1 481.5 L223.8 481.4 L224.5 481.3 L225.2 481.1 L225.8 481.0 L226.5 480.9 L227.1 480.7 L227.7 480.5 L228.3 480.3 L228.9 480.1 L229.5 479.9 L230.0 479.7 L230.5 479.5 L231.0 479.2 L231.5 479.0 L231.9 478.7 L232.3 478.4 L232.7 478.2 L233.1 477.9 L233.4 477.6 L233.7 477.3 L234.0 477.0 L234.2 476.7 L234.4 476.4 L234.6 476.0 L234.7 475.7 L234.8 475.4 L234.9 475.1 L234.9 474.8 L234.9 474.4 L234.8 474.1 L234.8 473.8 L234.7 473.5 L234.5 473.2 L234.4 472.9 L234.1 472.6 L233.9 472.3 L233.6 472.0 L233.3 471.7 L233.0 471.5 L232.7 471.2 L232.3 471.0 L231.8 470.7 L231.4 470.5 L230.9 470.3 L230.4 470.1 L229.9 469.9 L229.4 469.7 L228.8 469.5 L228.2 469.4 L227.6 469.2 L227.0 469.1 L226.4 469.0 L225.8 468.9 L225.1 468.8 L224.4 468.7 L223.8 468.7 L223.1 468.7 L222.4 468.6 L221.7 468.6 L221.0 468.6 L220.3 468.7 L219.6 468.7 L218.9 468.8 L218.2 468.8 L217.6 468.9 L216.9 469.0 L216.2 469.1 L215.6 469.3 L214.9 469.4 L214.3 469.6 L213.7 469.7 L213.1 469.9 L213.0 469.9 L209.6 468.6 L204.3 467.2 L198.4 466.4 L197.2 466.3 L195.8 468.6 L197.0 468.7 L202.0 469.4 L206.4 470.5 L210.3 472.0 L213.3 473.9 L215.5 476.0 L216.6 478.4 L216.8 480.8 L215.8 483.3 L213.9 485.6 L211.0 487.8 L207.3 489.8 L202.9 491.3 L198.0 492.5 L192.7 493.3 L187.3 493.5 L182.0 493.3 L180.7 493.2 L179.3 495.5 L180.6 495.7 L186.9 495.9 L193.3 495.6 L198.0 495.0 L198.1 495.0 L198.4 495.3 L198.8 495.5 L199.1 495.8 L199.6 496.0 L200.0 496.3 L200.5 496.5 L201.0 496.7 L201.5 496.9 L202.0 497.1 L202.6 497.3 L203.2 497.4 L203.8 497.6 L204.4 497.7 L205.1 497.8 L205.7 497.9 L206.4 498.0 L207.1 498.1 L207.8 498.2 L208.5 498.2 L209.2 498.2 L209.9 498.2 L210.6 498.2 L211.3 498.2 L212.0 498.2 L212.7 498.1 L213.4 498.0 L214.1 497.9 L214.8 497.8 L215.5 497.7 L216.1 497.6 L216.8 497.4 L217.4 497.3 L218.1 497.1 L218.7 496.9 L219.2 496.7 L219.8 496.5 L220.4 496.2 L220.9 496.0 L221.4 495.8 L221.9 495.5 L222.3 495.2 L222.7 494.9 L223.1 494.7 L223.5 494.4 L223.8 494.1 L224.1 493.8 L224.4 493.4 Z M202.3 531.6 L202.5 531.3 L202.6 530.9 L202.8 530.6 L202.9 530.3 L203.0 529.9 L203.0 529.6 L203.0 529.2 L203.0 528.9 L202.9 528.5 L202.8 528.2 L202.7 527.9 L202.5 527.5 L202.3 527.2 L202.1 526.9 L201.8 526.6 L201.5 526.3 L201.1 526.0 L200.8 525.7 L200.4 525.5 L199.9 525.2 L199.5 525.0 L199.0 524.7 L198.5 524.5 L198.0 524.3 L197.4 524.1 L196.8 523.9 L196.7 523.9 L198.5 521.7 L199.3 519.5 L199.5 519.5 L200.2 519.4 L200.9 519.3 L201.6 519.2 L202.3 519.1 L203.0 519.0 L203.7 518.9 L204.3 518.7 L205.0 518.5 L205.6 518.3 L206.2 518.2 L206.8 517.9 L207.4 517.7 L208.0 517.5 L208.5 517.2 L209.0 517.0 L209.5 516.7 L210.0 516.4 L210.4 516.1 L210.8 515.9 L211.2 515.5 L211.5 515.2 L211.8 514.9 L212.1 514.6 L212.3 514.3 L212.5 513.9 L212.7 513.6 L212.9 513.3 L213.0 512.9 L213.0 512.6 L213.1 512.3 L213.1 511.9 L213.0 511.6 L213.0 511.3 L212.9 510.9 L212.7 510.6 L212.6 510.3 L212.4 510.0 L212.1 509.7 L211.8 509.4 L211.5 509.1 L211.2 508.8 L210.8 508.5 L210.4 508.3 L210.0 508.0 L209.6 507.8 L209.1 507.5 L208.6 507.3 L208.1 507.1 L207.5 506.9 L206.9 506.8 L206.3 506.6 L205.7 506.4 L205.1 506.3 L204.5 506.2 L203.8 506.1 L203.1 506.0 L202.4 505.9 L201.8 505.9 L201.1 505.8 L200.4 505.8 L199.6 505.8 L198.9 505.8 L198.2 505.8 L197.5 505.9 L196.8 505.9 L196.1 506.0 L195.4 506.1 L194.7 506.2 L194.0 506.3 L193.3 506.5 L192.7 506.6 L192.0 506.8 L191.4 507.0 L190.8 507.2 L190.7 507.2 L187.2 505.7 L181.8 504.3 L175.8 503.5 L174.5 503.3 L173.1 505.7 L174.3 505.9 L179.4 506.6 L183.9 507.8 L187.9 509.4 L191.0 511.4 L193.1 513.6 L194.3 516.1 L194.4 518.7 L193.4 521.2 L191.4 523.7 L188.4 526.0 L184.5 528.1 L180.0 529.7 L174.9 531.0 L169.5 531.8 L163.9 532.0 L158.5 531.8 L157.2 531.7 L155.7 534.2 L157.0 534.3 L163.4 534.6 L170.0 534.3 L174.9 533.6 L174.9 533.6 L175.3 533.9 L175.6 534.2 L176.0 534.4 L176.5 534.7 L176.9 534.9 L177.4 535.2 L177.9 535.4 L178.4 535.6 L179.0 535.8 L179.6 536.0 L180.2 536.2 L180.8 536.3 L181.4 536.5 L182.1 536.6 L182.8 536.7 L183.4 536.8 L184.1 536.9 L184.8 536.9 L185.6 537.0 L186.3 537.0 L187.0 537.0 L187.7 537.0 L188.5 537.0 L189.2 536.9 L189.9 536.9 L190.6 536.8 L191.4 536.7 L192.1 536.6 L192.8 536.4 L193.5 536.3 L194.1 536.1 L194.8 536.0 L195.4 535.8 L196.1 535.6 L196.7 535.4 L197.3 535.1 L197.8 534.9 L198.4 534.6 L198.9 534.4 L199.4 534.1 L199.8 533.8 L200.3 533.5 L200.7 533.2 L201.1 532.9 L201.4 532.6 L201.7 532.3 L202.0 531.9 Z M178.6 572.2 L178.9 571.9 L179.1 571.5 L179.2 571.1 L179.3 570.8 L179.4 570.4 L179.5 570.1 L179.5 569.7 L179.4 569.3 L179.4 569.0 L179.3 568.6 L179.1 568.3 L179.0 567.9 L178.8 567.6 L178.5 567.3 L178.2 566.9 L177.9 566.6 L177.6 566.3 L177.2 566.0 L176.8 565.7 L176.4 565.5 L175.9 565.2 L175.4 565.0 L174.9 564.7 L174.4 564.5 L173.8 564.3 L173.2 564.1 L173.1 564.1 L174.9 561.8 L175.8 559.4 L176.0 559.4 L176.7 559.3 L177.4 559.2 L178.2 559.1 L178.9 559.0 L179.6 558.9 L180.3 558.8 L181.0 558.6 L181.7 558.4 L182.3 558.2 L183.0 558.0 L183.6 557.8 L184.2 557.6 L184.8 557.3 L185.3 557.0 L185.8 556.8 L186.3 556.5 L186.8 556.2 L187.3 555.9 L187.7 555.6 L188.1 555.3 L188.4 554.9 L188.7 554.6 L189.0 554.3 L189.3 553.9 L189.5 553.6 L189.7 553.2 L189.8 552.9 L190.0 552.5 L190.0 552.2 L190.1 551.8 L190.1 551.5 L190.1 551.1 L190.0 550.7 L189.9 550.4 L189.7 550.1 L189.6 549.7 L189.4 549.4 L189.1 549.1 L188.9 548.8 L188.5 548.5 L188.2 548.2 L187.8 547.9 L187.4 547.6 L187.0 547.3 L186.5 547.1 L186.1 546.8 L185.5 546.6 L185.0 546.4 L184.4 546.2 L183.9 546.0 L183.3 545.8 L182.6 545.7 L182.0 545.5 L181.3 545.4 L180.7 545.3 L180.0 545.2 L179.3 545.1 L178.6 545.1 L177.8 545.0 L177.1 545.0 L176.4 545.0 L175.7 545.0 L174.9 545.0 L174.2 545.1 L173.5 545.1 L172.7 545.2 L172.0 545.3 L171.3 545.4 L170.6 545.5 L169.9 545.7 L169.2 545.8 L168.5 546.0 L167.9 546.2 L167.3 546.4 L167.2 546.4 L163.6 544.9 L158.1 543.4 L151.9 542.5 L150.6 542.4 L149.1 544.9 L150.4 545.0 L155.6 545.8 L160.2 547.1 L164.2 548.8 L167.4 550.8 L169.6 553.2 L170.7 555.8 L170.8 558.5 L169.7 561.3 L167.6 563.9 L164.5 566.3 L160.5 568.5 L155.8 570.3 L150.5 571.6 L144.9 572.4 L139.3 572.7 L133.7 572.4 L132.3 572.3 L130.7 574.9 L132.1 575.0 L138.7 575.4 L145.5 575.0 L150.5 574.3 L150.5 574.3 L150.9 574.6 L151.3 574.9 L151.7 575.2 L152.1 575.5 L152.6 575.7 L153.0 576.0 L153.6 576.2 L154.1 576.5 L154.7 576.7 L155.3 576.9 L155.9 577.0 L156.5 577.2 L157.2 577.4 L157.8 577.5 L158.5 577.6 L159.2 577.7 L159.9 577.8 L160.7 577.8 L161.4 577.9 L162.1 577.9 L162.9 577.9 L163.6 577.9 L164.4 577.9 L165.1 577.8 L165.9 577.8 L166.6 577.7 L167.4 577.6 L168.1 577.5 L168.8 577.3 L169.5 577.2 L170.2 577.0 L170.9 576.8 L171.6 576.6 L172.2 576.4 L172.8 576.2 L173.4 576.0 L174.0 575.7 L174.6 575.4 L175.1 575.2 L175.6 574.9 L176.1 574.6 L176.6 574.3 L177.0 573.9 L177.4 573.6 L177.8 573.3 L178.1 572.9 L178.4 572.6 Z M153.7 615.1 L153.9 614.8 L154.1 614.4 L154.3 614.0 L154.4 613.6 L154.5 613.2 L154.6 612.8 L154.6 612.5 L154.6 612.1 L154.5 611.7 L154.4 611.3 L154.3 611.0 L154.1 610.6 L153.9 610.2 L153.7 609.9 L153.4 609.5 L153.1 609.2 L152.7 608.9 L152.3 608.6 L151.9 608.3 L151.5 608.0 L151.0 607.7 L150.5 607.4 L150.0 607.2 L149.4 607.0 L148.8 606.7 L148.2 606.5 L148.1 606.5 L150.1 604.1 L151.0 601.6 L151.2 601.6 L151.9 601.5 L152.7 601.4 L153.4 601.3 L154.2 601.2 L154.9 601.1 L155.6 600.9 L156.3 600.7 L157.0 600.5 L157.7 600.3 L158.4 600.1 L159.0 599.9 L159.6 599.6 L160.2 599.4 L160.8 599.1 L161.4 598.8 L161.9 598.5 L162.4 598.2 L162.8 597.9 L163.3 597.5 L163.7 597.2 L164.0 596.9 L164.4 596.5 L164.7 596.2 L164.9 595.8 L165.2 595.4 L165.4 595.1 L165.5 594.7 L165.7 594.3 L165.7 593.9 L165.8 593.6 L165.8 593.2 L165.8 592.8 L165.7 592.4 L165.6 592.1 L165.5 591.7 L165.3 591.4 L165.1 591.0 L164.9 590.7 L164.6 590.3 L164.3 590.0 L163.9 589.7 L163.6 589.4 L163.1 589.1 L162.7 588.8 L162.2 588.5 L161.7 588.3 L161.2 588.0 L160.7 587.8 L160.1 587.6 L159.5 587.4 L158.9 587.2 L158.2 587.1 L157.6 586.9 L156.9 586.8 L156.2 586.7 L155.5 586.6 L154.8 586.5 L154.1 586.4 L153.3 586.4 L152.6 586.4 L151.8 586.3 L151.1 586.4 L150.3 586.4 L149.6 586.4 L148.8 586.5 L148.1 586.6 L147.3 586.7 L146.6 586.8 L145.9 586.9 L145.2 587.1 L144.5 587.3 L143.8 587.4 L143.1 587.6 L142.4 587.9 L142.4 587.9 L138.7 586.3 L133.1 584.7 L126.8 583.7 L125.4 583.6 L123.8 586.3 L125.1 586.4 L130.4 587.2 L135.2 588.5 L139.3 590.3 L142.5 592.5 L144.7 595.1 L145.8 597.8 L145.8 600.7 L144.7 603.6 L142.5 606.3 L139.2 608.9 L135.1 611.2 L130.2 613.0 L124.8 614.4 L119.0 615.3 L113.2 615.6 L107.4 615.3 L106.1 615.2 L104.4 618.0 L105.7 618.1 L112.6 618.5 L119.6 618.1 L124.7 617.3 L124.8 617.3 L125.1 617.7 L125.5 618.0 L125.9 618.3 L126.3 618.6 L126.8 618.9 L127.3 619.1 L127.8 619.4 L128.4 619.6 L129.0 619.8 L129.6 620.0 L130.2 620.2 L130.9 620.4 L131.5 620.6 L132.2 620.7 L132.9 620.8 L133.6 620.9 L134.4 621.0 L135.1 621.1 L135.9 621.1 L136.6 621.1 L137.4 621.1 L138.2 621.1 L138.9 621.1 L139.7 621.1 L140.5 621.0 L141.2 620.9 L142.0 620.8 L142.8 620.7 L143.5 620.5 L144.2 620.4 L145.0 620.2 L145.7 620.0 L146.3 619.8 L147.0 619.6 L147.7 619.3 L148.3 619.1 L148.9 618.8 L149.5 618.5 L150.0 618.2 L150.6 617.9 L151.1 617.6 L151.5 617.3 L152.0 616.9 L152.4 616.6 L152.8 616.2 L153.1 615.9 L153.4 615.5 Z M127.3 660.5 L127.5 660.1 L127.8 659.7 L127.9 659.3 L128.1 658.9 L128.2 658.5 L128.2 658.1 L128.3 657.7 L128.2 657.3 L128.2 656.9 L128.1 656.5 L128.0 656.1 L127.8 655.7 L127.6 655.4 L127.3 655.0 L127.1 654.6 L126.7 654.3 L126.4 653.9 L126.0 653.6 L125.6 653.3 L125.1 653.0 L124.7 652.7 L124.2 652.4 L123.6 652.1 L123.0 651.9 L122.5 651.7 L121.8 651.4 L121.7 651.4 L123.7 648.8 L124.8 646.2 L124.9 646.2 L125.7 646.1 L126.5 646.0 L127.3 645.9 L128.0 645.8 L128.8 645.6 L129.5 645.5 L130.3 645.3 L131.0 645.1 L131.7 644.9 L132.4 644.6 L133.0 644.4 L133.7 644.1 L134.3 643.9 L134.9 643.6 L135.5 643.3 L136.0 642.9 L136.5 642.6 L137.0 642.3 L137.4 641.9 L137.9 641.6 L138.3 641.2 L138.6 640.8 L138.9 640.4 L139.2 640.1 L139.4 639.7 L139.7 639.3 L139.8 638.9 L140.0 638.5 L140.1 638.1 L140.1 637.7 L140.1 637.3 L140.1 636.9 L140.1 636.5 L140.0 636.1 L139.8 635.7 L139.7 635.4 L139.5 635.0 L139.2 634.6 L138.9 634.3 L138.6 633.9 L138.3 633.6 L137.9 633.3 L137.5 633.0 L137.0 632.7 L136.5 632.4 L136.0 632.1 L135.5 631.9 L134.9 631.6 L134.4 631.4 L133.7 631.2 L133.1 631.0 L132.5 630.8 L131.8 630.7 L131.1 630.5 L130.4 630.4 L129.7 630.3 L128.9 630.2 L128.2 630.2 L127.4 630.1 L126.7 630.1 L125.9 630.1 L125.1 630.1 L124.3 630.1 L123.6 630.2 L122.8 630.2 L122.0 630.3 L121.2 630.4 L120.5 630.5 L119.7 630.7 L119.0 630.9 L118.3 631.0 L117.6 631.2 L116.9 631.4 L116.2 631.7 L116.1 631.7 L112.4 630.0 L106.6 628.3 L100.1 627.3 L98.8 627.2 L97.0 630.0 L98.4 630.1 L103.8 631.0 L108.7 632.4 L112.9 634.3 L116.1 636.6 L118.4 639.3 L119.5 642.2 L119.5 645.2 L118.2 648.3 L115.9 651.2 L112.5 654.0 L108.2 656.4 L103.2 658.3 L97.6 659.8 L91.6 660.7 L85.6 661.1 L79.7 660.8 L78.3 660.6 L76.5 663.6 L77.9 663.7 L84.9 664.1 L92.1 663.7 L97.5 662.8 L97.5 662.9 L97.8 663.2 L98.2 663.6 L98.6 663.9 L99.1 664.2 L99.6 664.5 L100.1 664.8 L100.6 665.0 L101.2 665.3 L101.8 665.5 L102.4 665.7 L103.0 665.9 L103.7 666.1 L104.4 666.3 L105.1 666.4 L105.8 666.6 L106.6 666.7 L107.3 666.8 L108.1 666.8 L108.8 666.9 L109.6 666.9 L110.4 666.9 L111.2 666.9 L112.0 666.9 L112.8 666.8 L113.6 666.7 L114.4 666.7 L115.2 666.5 L115.9 666.4 L116.7 666.3 L117.5 666.1 L118.2 665.9 L118.9 665.7 L119.6 665.5 L120.3 665.2 L121.0 665.0 L121.7 664.7 L122.3 664.4 L122.9 664.1 L123.5 663.8 L124.0 663.5 L124.5 663.2 L125.0 662.8 L125.5 662.5 L125.9 662.1 L126.3 661.7 L126.7 661.3 L127.0 660.9 Z M99.3 708.7 L99.6 708.3 L99.8 707.8 L100.0 707.4 L100.1 707.0 L100.3 706.5 L100.3 706.1 L100.4 705.7 L100.3 705.2 L100.3 704.8 L100.2 704.4 L100.1 704.0 L99.9 703.6 L99.7 703.2 L99.5 702.8 L99.2 702.4 L98.9 702.0 L98.5 701.7 L98.1 701.3 L97.7 701.0 L97.2 700.6 L96.7 700.3 L96.2 700.0 L95.7 699.8 L95.1 699.5 L94.5 699.3 L93.9 699.0 L93.7 699.0 L95.9 696.3 L97.0 693.4 L97.1 693.4 L97.9 693.4 L98.8 693.3 L99.5 693.2 L100.3 693.0 L101.1 692.9 L101.9 692.7 L102.6 692.5 L103.4 692.3 L104.1 692.1 L104.8 691.8 L105.5 691.5 L106.2 691.3 L106.8 691.0 L107.4 690.7 L108.0 690.3 L108.6 690.0 L109.1 689.7 L109.6 689.3 L110.1 688.9 L110.5 688.6 L110.9 688.2 L111.3 687.8 L111.6 687.4 L111.9 687.0 L112.2 686.5 L112.4 686.1 L112.6 685.7 L112.7 685.3 L112.9 684.9 L112.9 684.4 L112.9 684.0 L112.9 683.6 L112.9 683.2 L112.8 682.8 L112.7 682.4 L112.5 682.0 L112.3 681.6 L112.0 681.2 L111.8 680.8 L111.4 680.5 L111.1 680.1 L110.7 679.8 L110.3 679.4 L109.8 679.1 L109.3 678.8 L108.8 678.5 L108.3 678.3 L107.7 678.0 L107.1 677.8 L106.5 677.6 L105.8 677.4 L105.2 677.2 L104.5 677.0 L103.8 676.9 L103.0 676.7 L102.3 676.6 L101.5 676.5 L100.8 676.5 L100.0 676.4 L99.2 676.4 L98.4 676.4 L97.6 676.4 L96.8 676.4 L96.0 676.5 L95.2 676.5 L94.4 676.6 L93.6 676.7 L92.8 676.9 L92.1 677.0 L91.3 677.2 L90.6 677.4 L89.8 677.6 L89.1 677.8 L88.4 678.1 L88.3 678.1 L84.5 676.3 L78.6 674.5 L71.9 673.4 L70.5 673.3 L68.7 676.3 L70.1 676.4 L75.7 677.3 L80.7 678.8 L85.0 680.8 L88.3 683.3 L90.5 686.1 L91.6 689.2 L91.5 692.4 L90.2 695.7 L87.7 698.8 L84.2 701.7 L79.7 704.2 L74.5 706.3 L68.7 707.9 L62.6 708.9 L56.3 709.2 L50.3 708.9 L48.8 708.8 L46.9 711.9 L48.4 712.0 L55.6 712.4 L63.0 712.0 L68.5 711.1 L68.6 711.2 L68.9 711.5 L69.3 711.9 L69.7 712.2 L70.2 712.5 L70.7 712.9 L71.2 713.2 L71.7 713.4 L72.3 713.7 L72.9 714.0 L73.6 714.2 L74.2 714.4 L74.9 714.6 L75.6 714.8 L76.3 714.9 L77.1 715.1 L77.8 715.2 L78.6 715.3 L79.4 715.3 L80.2 715.4 L81.0 715.4 L81.8 715.4 L82.6 715.4 L83.4 715.4 L84.3 715.3 L85.1 715.3 L85.9 715.2 L86.7 715.0 L87.5 714.9 L88.3 714.7 L89.1 714.6 L89.9 714.4 L90.6 714.2 L91.3 713.9 L92.1 713.7 L92.8 713.4 L93.4 713.1 L94.1 712.8 L94.7 712.5 L95.3 712.2 L95.9 711.8 L96.4 711.5 L96.9 711.1 L97.4 710.7 L97.9 710.3 L98.3 709.9 L98.7 709.5 L99.0 709.1 Z M62.6 731.8 L62.2 732.5 L73.1 733.7 L85.4 735.0 L87.7 730.9 L89.8 728.2 L92.7 725.8 L96.3 723.7 L100.5 722.0 L105.2 720.7 L110.2 719.9 L115.2 719.6 L120.2 719.9 L124.8 720.7 L129.0 721.9 L132.6 723.6 L135.4 725.7 L137.3 728.1 L138.3 730.7 L138.3 733.5 L137.3 736.2 L135.0 740.4 L147.3 741.7 L158.3 742.9 L158.6 742.2 L158.9 741.6 L159.1 740.9 L159.2 740.3 L159.3 739.6 L159.3 739.0 L159.3 738.4 L159.2 737.7 L159.0 737.1 L158.8 736.5 L158.6 735.9 L158.2 735.3 L157.9 734.7 L157.4 734.1 L156.9 733.5 L156.4 733.0 L155.8 732.5 L155.2 732.0 L154.5 731.5 L153.7 731.0 L153.0 730.6 L152.1 730.2 L151.3 729.8 L151.0 729.6 L151.0 729.4 L149.5 725.5 L146.6 721.9 L142.4 718.8 L137.1 716.3 L130.9 714.4 L123.9 713.2 L116.6 712.9 L109.1 713.3 L101.7 714.4 L94.7 716.4 L88.4 718.9 L82.9 722.1 L82.6 722.3 L82.2 722.3 L81.1 722.5 L79.9 722.7 L78.8 723.0 L77.6 723.2 L76.5 723.5 L75.4 723.8 L74.4 724.2 L73.3 724.5 L72.3 724.9 L71.3 725.3 L70.3 725.8 L69.4 726.2 L68.6 726.7 L67.7 727.2 L66.9 727.8 L66.2 728.3 L65.4 728.9 L64.8 729.4 L64.2 730.0 L63.6 730.6 L63.1 731.2 Z M161.9 742.6 L161.5 743.2 L172.6 744.4 L184.9 745.8 L187.1 741.6 L189.0 738.9 L191.7 736.5 L195.3 734.4 L199.4 732.6 L204.1 731.3 L209.0 730.5 L214.1 730.2 L219.1 730.5 L223.8 731.3 L228.1 732.5 L231.7 734.3 L234.7 736.4 L236.8 738.8 L237.9 741.5 L238.1 744.2 L237.2 747.0 L235.2 751.2 L247.6 752.6 L258.8 753.8 L259.1 753.1 L259.3 752.5 L259.5 751.8 L259.6 751.1 L259.6 750.5 L259.6 749.8 L259.5 749.2 L259.4 748.5 L259.2 747.9 L259.0 747.3 L258.7 746.6 L258.3 746.0 L257.9 745.4 L257.4 744.9 L256.9 744.3 L256.3 743.7 L255.7 743.2 L255.0 742.7 L254.3 742.2 L253.5 741.7 L252.7 741.3 L251.8 740.9 L251.0 740.5 L250.6 740.4 L250.6 740.1 L248.9 736.1 L245.8 732.5 L241.4 729.4 L235.9 726.8 L229.5 724.9 L222.4 723.7 L215.0 723.4 L207.5 723.8 L200.1 725.0 L193.2 726.9 L187.0 729.5 L181.7 732.7 L181.4 732.9 L181.0 733.0 L179.9 733.1 L178.7 733.3 L177.6 733.6 L176.4 733.8 L175.3 734.1 L174.3 734.5 L173.2 734.8 L172.2 735.2 L171.2 735.6 L170.2 736.0 L169.3 736.4 L168.4 736.9 L167.5 737.4 L166.7 737.9 L165.9 738.4 L165.2 739.0 L164.5 739.6 L163.9 740.1 L163.3 740.7 L162.8 741.3 L162.3 742.0 Z M262.4 753.5 L262.1 754.1 L273.2 755.3 L285.8 756.7 L287.7 752.5 L289.4 749.8 L292.1 747.3 L295.5 745.1 L299.6 743.4 L304.2 742.0 L309.1 741.2 L314.2 740.9 L319.2 741.2 L324.0 742.0 L328.4 743.3 L332.2 745.0 L335.3 747.2 L337.5 749.6 L338.9 752.3 L339.2 755.1 L338.5 757.9 L336.7 762.2 L349.3 763.6 L360.6 764.8 L360.9 764.1 L361.1 763.5 L361.2 762.8 L361.2 762.1 L361.2 761.5 L361.2 760.8 L361.1 760.1 L360.9 759.5 L360.7 758.8 L360.4 758.2 L360.0 757.6 L359.6 757.0 L359.2 756.4 L358.7 755.8 L358.1 755.2 L357.5 754.6 L356.8 754.1 L356.1 753.6 L355.4 753.1 L354.6 752.6 L353.7 752.2 L352.8 751.7 L351.9 751.3 L351.6 751.2 L351.6 750.9 L349.6 746.9 L346.2 743.3 L341.6 740.1 L335.9 737.5 L329.4 735.5 L322.2 734.4 L314.7 734.0 L307.2 734.4 L299.8 735.6 L293.0 737.6 L286.9 740.2 L281.8 743.4 L281.5 743.7 L281.1 743.7 L279.9 743.9 L278.8 744.1 L277.6 744.3 L276.5 744.6 L275.4 744.9 L274.4 745.2 L273.3 745.6 L272.3 746.0 L271.3 746.4 L270.4 746.8 L269.5 747.2 L268.6 747.7 L267.8 748.2 L267.0 748.7 L266.2 749.3 L265.5 749.8 L264.9 750.4 L264.3 751.0 L263.7 751.6 L263.2 752.2 L262.8 752.8 Z M364.2 764.5 L363.9 765.1 L375.2 766.4 L387.9 767.7 L389.6 763.5 L391.2 760.7 L393.7 758.2 L397.0 756.0 L401.0 754.2 L405.6 752.9 L410.5 752.1 L415.6 751.8 L420.7 752.1 L425.5 752.9 L430.0 754.2 L434.0 756.0 L437.2 758.1 L439.6 760.6 L441.1 763.3 L441.6 766.2 L441.1 769.0 L439.5 773.3 L452.3 774.7 L463.8 776.0 L464.0 775.3 L464.1 774.6 L464.2 773.9 L464.2 773.3 L464.2 772.6 L464.1 771.9 L463.9 771.3 L463.7 770.6 L463.5 769.9 L463.1 769.3 L462.7 768.7 L462.3 768.0 L461.8 767.4 L461.3 766.8 L460.7 766.2 L460.0 765.7 L459.3 765.1 L458.6 764.6 L457.8 764.1 L456.9 763.6 L456.1 763.2 L455.1 762.7 L454.2 762.3 L453.9 762.2 L453.8 761.9 L451.6 757.9 L448.0 754.2 L443.1 750.9 L437.2 748.3 L430.5 746.3 L423.3 745.1 L415.7 744.7 L408.1 745.2 L400.8 746.4 L394.0 748.4 L388.1 751.1 L383.1 754.3 L382.8 754.6 L382.5 754.6 L381.3 754.8 L380.1 755.0 L379.0 755.2 L377.9 755.5 L376.8 755.8 L375.8 756.1 L374.7 756.5 L373.7 756.9 L372.8 757.3 L371.8 757.7 L371.0 758.2 L370.1 758.7 L369.3 759.2 L368.5 759.7 L367.8 760.2 L367.1 760.8 L366.5 761.4 L366.0 762.0 L365.4 762.6 L365.0 763.2 L364.6 763.8 Z M510.5 350.4 L510.8 350.5 L511.2 350.5 L511.7 350.5 L512.1 350.6 L512.6 350.6 L513.1 350.6 L513.5 350.6 L514.0 350.6 L514.4 350.5 L514.9 350.5 L515.3 350.5 L515.7 350.4 L516.2 350.3 L516.6 350.3 L517.0 350.2 L517.4 350.1 L517.8 350.0 L518.2 349.9 L518.6 349.8 L518.9 349.7 L519.3 349.6 L519.6 349.4 L519.9 349.3 L520.2 349.1 L520.4 349.0 L520.7 348.8 L520.9 348.7 L521.1 348.5 L521.3 348.3 L521.5 348.2 L521.7 348.0 L521.8 347.8 L521.9 347.6 L522.0 347.4 L522.1 347.2 L522.1 347.1 L522.1 346.9 L522.1 346.7 L522.1 346.5 L522.1 346.3 L522.0 346.1 L521.9 345.9 L521.8 345.7 L521.7 345.5 L521.5 345.4 L521.3 345.2 L521.2 345.0 L520.9 344.8 L520.7 344.7 L520.5 344.5 L520.2 344.4 L519.9 344.2 L519.6 344.1 L519.3 343.9 L519.2 343.9 L518.3 343.8 L514.2 343.5 L512.9 346.5 L512.5 347.1 L511.8 347.7 L510.8 348.2 L509.5 348.7 L508.1 349.0 L506.6 349.2 L505.0 349.3 L503.4 349.2 L480.5 347.4 L479.0 347.2 L477.6 346.8 L476.3 346.4 L475.3 345.9 L474.5 345.3 L474.0 344.7 L473.8 344.0 L474.0 343.3 L475.3 340.4 L471.3 340.1 L470.3 340.0 L470.3 340.0 L469.9 340.1 L469.5 340.1 L469.1 340.2 L468.7 340.3 L468.3 340.4 L468.0 340.6 L467.6 340.7 L467.3 340.8 L467.0 341.0 L466.7 341.1 L466.4 341.2 L466.1 341.4 L465.9 341.6 L465.7 341.7 L465.5 341.9 L465.3 342.1 L465.1 342.2 L465.0 342.4 L464.9 342.6 L464.8 342.8 L464.7 343.0 L464.7 343.2 L464.6 343.4 L464.6 343.5 L464.6 343.7 L464.7 343.9 L464.7 344.1 L464.8 344.3 L464.9 344.5 L465.0 344.7 L465.2 344.8 L465.3 345.0 L465.5 345.2 L465.7 345.4 L466.0 345.5 L466.2 345.7 L466.5 345.8 L466.8 346.0 L467.1 346.1 L467.4 346.3 L467.7 346.4 L468.1 346.5 L468.4 346.6 L468.8 346.8 L469.2 346.9 L469.6 347.0 L470.0 347.0 L470.4 347.1 L470.8 347.2 L471.3 347.2 L471.7 347.3 L472.1 347.3 L472.6 347.4 L472.9 347.4 L473.4 347.6 L475.3 348.3 L477.5 348.8 L479.8 349.1 L502.6 350.9 L505.1 351.0 L507.5 350.9 L509.8 350.6 Z M589.3 356.8 L589.5 356.9 L590.0 356.9 L590.4 356.9 L590.9 357.0 L591.4 357.0 L591.8 357.0 L592.3 357.0 L592.7 357.0 L593.2 356.9 L593.6 356.9 L594.1 356.9 L594.5 356.8 L594.9 356.7 L595.4 356.7 L595.8 356.6 L596.2 356.5 L596.6 356.4 L596.9 356.3 L597.3 356.2 L597.7 356.1 L598.0 355.9 L598.3 355.8 L598.6 355.7 L598.9 355.5 L599.2 355.4 L599.4 355.2 L599.6 355.1 L599.8 354.9 L600.0 354.7 L600.2 354.5 L600.3 354.4 L600.4 354.2 L600.5 354.0 L600.6 353.8 L600.7 353.6 L600.7 353.4 L600.7 353.2 L600.7 353.0 L600.7 352.8 L600.6 352.6 L600.5 352.5 L600.4 352.3 L600.3 352.1 L600.2 351.9 L600.0 351.7 L599.8 351.5 L599.6 351.4 L599.4 351.2 L599.1 351.0 L598.9 350.9 L598.6 350.7 L598.3 350.6 L598.0 350.4 L597.7 350.3 L597.6 350.3 L596.6 350.2 L592.5 349.8 L591.5 352.8 L591.1 353.5 L590.4 354.1 L589.4 354.6 L588.2 355.1 L586.8 355.4 L585.2 355.6 L583.6 355.7 L582.0 355.6 L559.0 353.7 L557.4 353.5 L555.9 353.2 L554.6 352.8 L553.6 352.3 L552.7 351.7 L552.2 351.0 L552.0 350.3 L552.1 349.6 L553.3 346.7 L549.2 346.3 L548.2 346.3 L548.2 346.3 L547.8 346.4 L547.4 346.4 L547.0 346.5 L546.6 346.6 L546.2 346.7 L545.9 346.9 L545.6 347.0 L545.2 347.1 L544.9 347.3 L544.6 347.4 L544.4 347.6 L544.1 347.7 L543.9 347.9 L543.7 348.0 L543.5 348.2 L543.3 348.4 L543.2 348.6 L543.0 348.7 L542.9 348.9 L542.8 349.1 L542.8 349.3 L542.7 349.5 L542.7 349.7 L542.7 349.9 L542.7 350.1 L542.8 350.3 L542.9 350.4 L543.0 350.6 L543.1 350.8 L543.2 351.0 L543.4 351.2 L543.5 351.4 L543.7 351.5 L544.0 351.7 L544.2 351.9 L544.5 352.0 L544.7 352.2 L545.0 352.4 L545.3 352.5 L545.7 352.6 L546.0 352.8 L546.4 352.9 L546.7 353.0 L547.1 353.1 L547.5 353.2 L547.9 353.3 L548.3 353.4 L548.7 353.5 L549.2 353.5 L549.6 353.6 L550.1 353.7 L550.5 353.7 L551.0 353.7 L551.3 353.7 L551.8 354.0 L553.7 354.7 L555.9 355.1 L558.3 355.4 L581.4 357.3 L583.8 357.4 L586.2 357.3 L588.5 357.0 Z M668.8 363.3 L669.1 363.3 L669.5 363.4 L670.0 363.4 L670.4 363.4 L670.9 363.4 L671.4 363.4 L671.8 363.4 L672.3 363.4 L672.7 363.4 L673.2 363.4 L673.6 363.3 L674.1 363.3 L674.5 363.2 L674.9 363.1 L675.3 363.1 L675.7 363.0 L676.1 362.9 L676.5 362.8 L676.8 362.6 L677.2 362.5 L677.5 362.4 L677.8 362.3 L678.1 362.1 L678.4 362.0 L678.6 361.8 L678.9 361.7 L679.1 361.5 L679.3 361.3 L679.5 361.1 L679.6 361.0 L679.8 360.8 L679.9 360.6 L680.0 360.4 L680.0 360.2 L680.1 360.0 L680.1 359.8 L680.1 359.6 L680.1 359.5 L680.0 359.3 L679.9 359.1 L679.9 358.9 L679.7 358.7 L679.6 358.5 L679.5 358.3 L679.3 358.1 L679.1 357.9 L678.9 357.8 L678.6 357.6 L678.4 357.4 L678.1 357.3 L677.8 357.1 L677.5 357.0 L677.2 356.8 L676.8 356.7 L676.8 356.7 L675.8 356.6 L671.7 356.2 L670.8 359.3 L670.4 359.9 L669.7 360.5 L668.8 361.1 L667.6 361.5 L666.2 361.8 L664.7 362.0 L663.1 362.1 L661.4 362.0 L638.1 360.2 L636.6 360.0 L635.1 359.6 L633.7 359.2 L632.6 358.7 L631.8 358.1 L631.2 357.4 L630.9 356.7 L631.0 356.0 L632.0 353.0 L627.9 352.7 L626.9 352.6 L626.9 352.6 L626.4 352.7 L626.1 352.8 L625.7 352.9 L625.3 353.0 L624.9 353.1 L624.6 353.2 L624.3 353.4 L623.9 353.5 L623.7 353.6 L623.4 353.8 L623.1 353.9 L622.9 354.1 L622.6 354.2 L622.4 354.4 L622.3 354.6 L622.1 354.8 L622.0 354.9 L621.8 355.1 L621.7 355.3 L621.7 355.5 L621.6 355.7 L621.6 355.9 L621.6 356.1 L621.6 356.3 L621.6 356.5 L621.7 356.7 L621.8 356.8 L621.9 357.0 L622.0 357.2 L622.1 357.4 L622.3 357.6 L622.5 357.8 L622.7 358.0 L622.9 358.1 L623.2 358.3 L623.5 358.5 L623.8 358.6 L624.1 358.8 L624.4 358.9 L624.7 359.1 L625.1 359.2 L625.4 359.3 L625.8 359.4 L626.2 359.5 L626.6 359.6 L627.0 359.7 L627.4 359.8 L627.9 359.9 L628.3 360.0 L628.8 360.0 L629.2 360.1 L629.7 360.1 L630.1 360.2 L630.4 360.2 L631.0 360.4 L633.0 361.1 L635.2 361.6 L637.6 361.9 L660.9 363.8 L663.3 363.9 L665.8 363.8 L668.1 363.5 Z M749.1 369.8 L749.4 369.9 L749.9 369.9 L750.3 369.9 L750.8 370.0 L751.3 370.0 L751.7 370.0 L752.2 370.0 L752.6 369.9 L753.1 369.9 L753.5 369.9 L754.0 369.8 L754.4 369.8 L754.8 369.7 L755.3 369.7 L755.7 369.6 L756.1 369.5 L756.4 369.4 L756.8 369.3 L757.2 369.2 L757.5 369.0 L757.8 368.9 L758.1 368.8 L758.4 368.6 L758.7 368.5 L758.9 368.3 L759.1 368.2 L759.4 368.0 L759.5 367.8 L759.7 367.7 L759.9 367.5 L760.0 367.3 L760.1 367.1 L760.2 366.9 L760.2 366.7 L760.2 366.5 L760.3 366.3 L760.2 366.1 L760.2 365.9 L760.1 365.7 L760.1 365.5 L760.0 365.4 L759.8 365.2 L759.7 365.0 L759.5 364.8 L759.3 364.6 L759.1 364.4 L758.9 364.2 L758.6 364.1 L758.4 363.9 L758.1 363.7 L757.8 363.6 L757.5 363.4 L757.1 363.3 L756.8 363.1 L756.8 363.1 L755.7 363.0 L751.6 362.7 L750.8 365.7 L750.5 366.4 L749.9 367.0 L749.0 367.6 L747.8 368.0 L746.4 368.3 L744.9 368.5 L743.3 368.6 L741.6 368.6 L718.1 366.6 L716.5 366.4 L715.0 366.1 L713.6 365.7 L712.5 365.1 L711.6 364.5 L711.0 363.9 L710.7 363.2 L710.7 362.5 L711.5 359.5 L707.4 359.1 L706.3 359.0 L706.3 359.0 L705.9 359.1 L705.5 359.2 L705.1 359.3 L704.8 359.4 L704.4 359.5 L704.1 359.6 L703.8 359.8 L703.4 359.9 L703.2 360.1 L702.9 360.2 L702.6 360.4 L702.4 360.5 L702.2 360.7 L702.0 360.8 L701.8 361.0 L701.7 361.2 L701.5 361.4 L701.4 361.6 L701.3 361.8 L701.3 361.9 L701.2 362.1 L701.2 362.3 L701.2 362.5 L701.2 362.7 L701.3 362.9 L701.4 363.1 L701.5 363.3 L701.6 363.5 L701.7 363.7 L701.9 363.9 L702.1 364.1 L702.3 364.2 L702.5 364.4 L702.7 364.6 L703.0 364.8 L703.3 364.9 L703.6 365.1 L703.9 365.2 L704.2 365.4 L704.6 365.5 L704.9 365.7 L705.3 365.8 L705.7 365.9 L706.1 366.0 L706.5 366.1 L706.9 366.2 L707.3 366.3 L707.8 366.4 L708.2 366.5 L708.7 366.5 L709.1 366.6 L709.6 366.6 L710.1 366.7 L710.3 366.7 L710.9 366.9 L713.0 367.6 L715.2 368.1 L717.7 368.4 L741.2 370.3 L743.7 370.4 L746.1 370.3 L748.4 370.0 Z M767.9 400.5 L770.6 401.4 L776.5 402.7 L782.9 403.5 L784.1 403.6 L784.7 400.6 L783.5 400.5 L778.5 399.9 L773.8 398.9 L769.6 397.5 L766.0 395.8 L763.2 393.9 L761.3 391.8 L760.3 389.7 L760.3 387.5 L761.2 385.5 L763.1 383.6 L765.9 381.9 L769.4 380.6 L773.5 379.6 L778.1 379.0 L782.9 378.7 L787.9 378.9 L789.1 379.0 L789.7 376.1 L788.5 376.1 L782.2 375.8 L776.0 376.1 L773.2 376.5 L772.7 376.2 L772.2 376.0 L771.6 375.8 L771.0 375.6 L770.4 375.3 L769.7 375.1 L769.1 375.0 L768.4 374.8 L767.7 374.6 L767.0 374.5 L766.3 374.4 L765.6 374.3 L764.8 374.2 L764.1 374.1 L763.3 374.0 L762.6 373.9 L761.8 373.9 L761.1 373.9 L760.3 373.9 L759.6 373.9 L758.8 373.9 L758.1 374.0 L757.4 374.0 L756.7 374.1 L756.0 374.2 L755.3 374.3 L754.6 374.4 L753.9 374.5 L753.3 374.7 L752.7 374.8 L752.1 375.0 L751.5 375.2 L751.0 375.4 L750.5 375.6 L750.0 375.8 L749.5 376.0 L749.1 376.3 L748.7 376.5 L748.3 376.8 L748.0 377.1 L747.7 377.4 L747.4 377.6 L747.1 377.9 L746.9 378.2 L746.8 378.6 L746.6 378.9 L746.5 379.2 L746.5 379.5 L746.5 379.8 L746.5 380.1 L746.5 380.5 L746.6 380.8 L746.8 381.1 L746.9 381.4 L747.1 381.7 L747.4 382.1 L747.6 382.4 L747.9 382.7 L748.3 383.0 L748.7 383.3 L749.1 383.6 L749.5 383.9 L750.0 384.1 L750.5 384.4 L751.0 384.6 L751.5 384.9 L752.1 385.1 L752.7 385.3 L753.3 385.6 L753.9 385.7 L753.4 387.0 L753.4 388.2 L752.7 388.3 L752.0 388.4 L751.3 388.5 L750.7 388.7 L750.0 388.8 L749.4 389.0 L748.8 389.2 L748.2 389.4 L747.7 389.6 L747.1 389.8 L746.6 390.0 L746.2 390.2 L745.7 390.5 L745.3 390.7 L744.9 391.0 L744.6 391.3 L744.3 391.6 L744.0 391.9 L743.8 392.2 L743.6 392.5 L743.4 392.8 L743.3 393.1 L743.2 393.4 L743.1 393.8 L743.1 394.1 L743.1 394.4 L743.2 394.7 L743.3 395.1 L743.4 395.4 L743.5 395.7 L743.8 396.1 L744.0 396.4 L744.3 396.7 L744.6 397.0 L744.9 397.3 L745.3 397.6 L745.7 397.9 L746.1 398.2 L746.6 398.5 L747.1 398.8 L747.6 399.0 L748.2 399.3 L748.8 399.5 L749.4 399.7 L750.0 400.0 L750.7 400.2 L751.3 400.4 L752.0 400.5 L752.7 400.7 L753.4 400.8 L754.2 401.0 L754.9 401.1 L755.7 401.2 L756.4 401.3 L757.2 401.4 L757.9 401.4 L758.7 401.5 L759.5 401.5 L760.2 401.5 L761.0 401.5 L761.8 401.4 L762.5 401.4 L763.3 401.3 L764.0 401.3 L764.7 401.2 L765.4 401.1 L766.1 401.0 L766.8 400.8 L767.4 400.7 Z M760.6 434.2 L763.3 435.1 L769.4 436.4 L775.9 437.3 L777.2 437.4 L777.8 434.2 L776.6 434.1 L771.5 433.5 L766.7 432.4 L762.4 431.0 L758.7 429.2 L755.8 427.2 L753.9 425.0 L752.9 422.8 L752.9 420.5 L753.9 418.4 L755.8 416.4 L758.6 414.6 L762.2 413.2 L766.5 412.2 L771.1 411.5 L776.1 411.3 L781.2 411.5 L782.5 411.6 L783.1 408.6 L781.8 408.5 L775.4 408.2 L769.0 408.5 L766.1 408.9 L765.7 408.7 L765.1 408.4 L764.5 408.2 L763.9 407.9 L763.3 407.7 L762.6 407.5 L761.9 407.3 L761.2 407.1 L760.5 407.0 L759.8 406.8 L759.1 406.7 L758.3 406.6 L757.6 406.5 L756.8 406.4 L756.1 406.3 L755.3 406.2 L754.5 406.2 L753.7 406.2 L753.0 406.2 L752.2 406.2 L751.5 406.2 L750.7 406.3 L750.0 406.3 L749.2 406.4 L748.5 406.5 L747.8 406.6 L747.1 406.7 L746.4 406.8 L745.8 407.0 L745.2 407.2 L744.5 407.3 L744.0 407.5 L743.4 407.8 L742.9 408.0 L742.4 408.2 L741.9 408.4 L741.4 408.7 L741.0 409.0 L740.6 409.2 L740.3 409.5 L740.0 409.8 L739.7 410.1 L739.4 410.4 L739.2 410.8 L739.1 411.1 L738.9 411.4 L738.8 411.7 L738.8 412.1 L738.8 412.4 L738.8 412.7 L738.8 413.1 L738.9 413.4 L739.0 413.8 L739.2 414.1 L739.4 414.4 L739.7 414.8 L739.9 415.1 L740.2 415.4 L740.6 415.7 L741.0 416.0 L741.4 416.3 L741.8 416.6 L742.3 416.9 L742.8 417.2 L743.4 417.5 L743.9 417.7 L744.5 418.0 L745.1 418.2 L745.7 418.4 L746.4 418.6 L745.8 419.9 L745.8 421.3 L745.1 421.3 L744.4 421.4 L743.7 421.6 L743.0 421.7 L742.3 421.9 L741.7 422.0 L741.1 422.2 L740.5 422.4 L739.9 422.6 L739.4 422.9 L738.9 423.1 L738.4 423.4 L737.9 423.6 L737.5 423.9 L737.1 424.2 L736.8 424.5 L736.4 424.8 L736.2 425.1 L735.9 425.4 L735.7 425.7 L735.5 426.0 L735.4 426.4 L735.3 426.7 L735.2 427.1 L735.2 427.4 L735.2 427.7 L735.3 428.1 L735.4 428.4 L735.5 428.8 L735.7 429.1 L735.9 429.5 L736.1 429.8 L736.4 430.1 L736.7 430.5 L737.1 430.8 L737.4 431.1 L737.9 431.4 L738.3 431.7 L738.8 432.0 L739.3 432.3 L739.8 432.6 L740.4 432.8 L741.0 433.1 L741.6 433.3 L742.3 433.6 L742.9 433.8 L743.6 434.0 L744.3 434.2 L745.0 434.3 L745.8 434.5 L746.5 434.6 L747.3 434.8 L748.0 434.9 L748.8 435.0 L749.6 435.0 L750.4 435.1 L751.2 435.1 L752.0 435.2 L752.7 435.2 L753.5 435.2 L754.3 435.1 L755.1 435.1 L755.8 435.0 L756.6 434.9 L757.3 434.8 L758.0 434.7 L758.7 434.6 L759.4 434.5 L760.1 434.3 Z M752.9 469.5 L755.7 470.5 L762.0 471.9 L768.6 472.8 L769.9 472.9 L770.6 469.6 L769.3 469.5 L764.1 468.8 L759.2 467.7 L754.8 466.1 L751.0 464.3 L748.1 462.2 L746.1 459.9 L745.1 457.5 L745.1 455.2 L746.1 452.9 L748.1 450.8 L751.0 449.0 L754.7 447.5 L759.0 446.4 L763.9 445.7 L769.0 445.5 L774.2 445.7 L775.5 445.8 L776.1 442.6 L774.8 442.5 L768.2 442.2 L761.7 442.5 L758.7 442.9 L758.3 442.7 L757.7 442.4 L757.1 442.2 L756.5 441.9 L755.8 441.7 L755.1 441.5 L754.4 441.3 L753.7 441.1 L753.0 440.9 L752.3 440.8 L751.5 440.6 L750.8 440.5 L750.0 440.4 L749.2 440.3 L748.4 440.2 L747.6 440.2 L746.8 440.1 L746.1 440.1 L745.3 440.1 L744.5 440.1 L743.7 440.1 L742.9 440.2 L742.2 440.2 L741.4 440.3 L740.7 440.4 L740.0 440.5 L739.2 440.7 L738.6 440.8 L737.9 441.0 L737.2 441.1 L736.6 441.3 L736.0 441.5 L735.4 441.7 L734.9 442.0 L734.4 442.2 L733.9 442.5 L733.4 442.8 L733.0 443.0 L732.6 443.3 L732.2 443.6 L731.9 443.9 L731.6 444.3 L731.4 444.6 L731.2 444.9 L731.0 445.2 L730.8 445.6 L730.7 445.9 L730.7 446.3 L730.6 446.6 L730.7 447.0 L730.7 447.4 L730.8 447.7 L730.9 448.1 L731.1 448.4 L731.3 448.8 L731.6 449.1 L731.8 449.5 L732.2 449.8 L732.5 450.1 L732.9 450.5 L733.3 450.8 L733.8 451.1 L734.3 451.4 L734.8 451.7 L735.3 452.0 L735.9 452.2 L736.5 452.5 L737.1 452.8 L737.8 453.0 L738.4 453.2 L737.8 454.5 L737.8 455.9 L737.1 456.0 L736.3 456.1 L735.6 456.3 L734.9 456.4 L734.3 456.6 L733.6 456.8 L733.0 457.0 L732.4 457.2 L731.8 457.4 L731.2 457.6 L730.7 457.9 L730.2 458.2 L729.7 458.4 L729.3 458.7 L728.9 459.0 L728.5 459.3 L728.2 459.6 L727.9 460.0 L727.6 460.3 L727.4 460.6 L727.2 461.0 L727.1 461.3 L727.0 461.7 L726.9 462.0 L726.9 462.4 L726.9 462.8 L727.0 463.1 L727.1 463.5 L727.2 463.9 L727.4 464.2 L727.6 464.6 L727.8 464.9 L728.1 465.3 L728.4 465.6 L728.8 466.0 L729.2 466.3 L729.6 466.6 L730.1 467.0 L730.6 467.3 L731.1 467.6 L731.6 467.9 L732.2 468.1 L732.8 468.4 L733.5 468.7 L734.1 468.9 L734.8 469.1 L735.5 469.3 L736.2 469.5 L736.9 469.7 L737.7 469.9 L738.5 470.0 L739.2 470.1 L740.0 470.3 L740.8 470.4 L741.6 470.4 L742.4 470.5 L743.2 470.5 L744.0 470.6 L744.9 470.6 L745.7 470.6 L746.5 470.5 L747.2 470.5 L748.0 470.4 L748.8 470.3 L749.5 470.2 L750.3 470.1 L751.0 470.0 L751.7 469.8 L752.4 469.7 Z M744.9 506.7 L747.7 507.7 L754.1 509.3 L760.9 510.2 L762.2 510.3 L763.0 506.8 L761.6 506.7 L756.3 506.0 L751.3 504.8 L746.7 503.2 L742.9 501.2 L739.9 499.0 L737.9 496.6 L736.8 494.1 L736.9 491.6 L737.9 489.2 L740.0 487.0 L743.0 485.1 L746.8 483.5 L751.2 482.4 L756.2 481.7 L761.4 481.4 L766.8 481.6 L768.1 481.7 L768.8 478.4 L767.5 478.3 L760.7 478.0 L754.0 478.3 L750.9 478.8 L750.5 478.5 L749.9 478.2 L749.3 478.0 L748.6 477.7 L748.0 477.5 L747.3 477.2 L746.6 477.0 L745.8 476.8 L745.1 476.6 L744.3 476.5 L743.6 476.3 L742.8 476.2 L742.0 476.1 L741.2 476.0 L740.4 475.9 L739.6 475.8 L738.8 475.8 L738.0 475.8 L737.2 475.8 L736.4 475.8 L735.6 475.8 L734.8 475.9 L734.0 475.9 L733.2 476.0 L732.4 476.1 L731.7 476.2 L731.0 476.4 L730.3 476.5 L729.6 476.7 L728.9 476.9 L728.3 477.1 L727.7 477.3 L727.1 477.5 L726.5 477.7 L726.0 478.0 L725.5 478.3 L725.0 478.6 L724.5 478.9 L724.1 479.2 L723.8 479.5 L723.4 479.8 L723.1 480.1 L722.9 480.5 L722.6 480.8 L722.5 481.2 L722.3 481.5 L722.2 481.9 L722.1 482.3 L722.1 482.7 L722.1 483.0 L722.2 483.4 L722.3 483.8 L722.4 484.2 L722.6 484.5 L722.8 484.9 L723.0 485.3 L723.3 485.6 L723.6 486.0 L724.0 486.3 L724.4 486.7 L724.8 487.0 L725.3 487.3 L725.8 487.7 L726.3 488.0 L726.9 488.3 L727.5 488.5 L728.1 488.8 L728.7 489.1 L729.4 489.3 L730.1 489.5 L729.4 491.0 L729.4 492.4 L728.7 492.5 L727.9 492.7 L727.2 492.8 L726.5 493.0 L725.8 493.1 L725.1 493.3 L724.4 493.5 L723.8 493.7 L723.2 494.0 L722.6 494.2 L722.1 494.5 L721.6 494.8 L721.1 495.1 L720.7 495.4 L720.2 495.7 L719.9 496.0 L719.5 496.3 L719.2 496.7 L719.0 497.0 L718.7 497.4 L718.5 497.7 L718.4 498.1 L718.3 498.5 L718.2 498.9 L718.2 499.2 L718.2 499.6 L718.2 500.0 L718.3 500.4 L718.5 500.8 L718.6 501.2 L718.9 501.5 L719.1 501.9 L719.4 502.3 L719.7 502.7 L720.1 503.0 L720.5 503.4 L720.9 503.7 L721.4 504.0 L721.9 504.4 L722.4 504.7 L723.0 505.0 L723.6 505.3 L724.2 505.6 L724.9 505.8 L725.5 506.1 L726.2 506.3 L726.9 506.5 L727.7 506.7 L728.4 506.9 L729.2 507.1 L730.0 507.3 L730.8 507.4 L731.6 507.5 L732.4 507.6 L733.2 507.7 L734.1 507.8 L734.9 507.8 L735.7 507.8 L736.5 507.8 L737.4 507.8 L738.2 507.8 L739.0 507.8 L739.8 507.7 L740.6 507.6 L741.4 507.5 L742.1 507.4 L742.9 507.2 L743.6 507.1 L744.3 506.9 Z M736.3 546.0 L739.2 547.0 L745.8 548.6 L752.8 549.6 L754.2 549.7 L754.9 546.1 L753.6 545.9 L748.1 545.2 L742.9 543.9 L738.3 542.2 L734.4 540.2 L731.3 537.8 L729.2 535.3 L728.2 532.7 L728.2 530.0 L729.3 527.5 L731.5 525.2 L734.6 523.2 L738.5 521.5 L743.0 520.3 L748.1 519.5 L753.5 519.3 L759.0 519.5 L760.3 519.6 L761.1 516.1 L759.7 516.0 L752.8 515.7 L745.9 516.0 L742.7 516.5 L742.3 516.2 L741.7 515.9 L741.0 515.6 L740.4 515.4 L739.7 515.1 L739.0 514.9 L738.3 514.6 L737.5 514.4 L736.8 514.2 L736.0 514.1 L735.2 513.9 L734.4 513.8 L733.6 513.7 L732.8 513.5 L731.9 513.5 L731.1 513.4 L730.3 513.4 L729.4 513.3 L728.6 513.3 L727.8 513.3 L727.0 513.4 L726.2 513.4 L725.4 513.5 L724.6 513.6 L723.8 513.7 L723.0 513.8 L722.3 513.9 L721.5 514.1 L720.8 514.3 L720.2 514.5 L719.5 514.7 L718.9 514.9 L718.2 515.2 L717.7 515.4 L717.1 515.7 L716.6 516.0 L716.1 516.3 L715.7 516.6 L715.2 516.9 L714.9 517.2 L714.5 517.6 L714.2 517.9 L713.9 518.3 L713.7 518.7 L713.5 519.0 L713.3 519.4 L713.2 519.8 L713.2 520.2 L713.1 520.6 L713.1 521.0 L713.2 521.4 L713.3 521.8 L713.4 522.2 L713.6 522.6 L713.8 522.9 L714.1 523.3 L714.4 523.7 L714.7 524.1 L715.1 524.5 L715.5 524.8 L715.9 525.2 L716.4 525.5 L716.9 525.9 L717.4 526.2 L718.0 526.5 L718.6 526.8 L719.2 527.1 L719.9 527.4 L720.6 527.6 L721.2 527.8 L720.6 529.3 L720.5 530.9 L719.8 531.0 L719.0 531.1 L718.3 531.3 L717.5 531.4 L716.8 531.6 L716.1 531.8 L715.4 532.0 L714.8 532.3 L714.2 532.5 L713.6 532.8 L713.0 533.1 L712.5 533.4 L712.0 533.7 L711.6 534.0 L711.1 534.3 L710.7 534.6 L710.4 535.0 L710.1 535.4 L709.8 535.7 L709.6 536.1 L709.4 536.5 L709.2 536.9 L709.1 537.3 L709.0 537.7 L709.0 538.1 L709.0 538.5 L709.0 538.9 L709.1 539.3 L709.3 539.7 L709.5 540.1 L709.7 540.5 L709.9 540.9 L710.2 541.3 L710.5 541.7 L710.9 542.0 L711.3 542.4 L711.8 542.8 L712.3 543.1 L712.8 543.5 L713.3 543.8 L713.9 544.1 L714.5 544.4 L715.1 544.7 L715.8 545.0 L716.5 545.3 L717.2 545.5 L717.9 545.8 L718.7 546.0 L719.5 546.2 L720.3 546.4 L721.1 546.5 L721.9 546.7 L722.7 546.8 L723.5 546.9 L724.4 547.0 L725.2 547.1 L726.1 547.1 L726.9 547.1 L727.8 547.1 L728.6 547.1 L729.5 547.1 L730.3 547.1 L731.1 547.0 L731.9 546.9 L732.7 546.8 L733.5 546.6 L734.3 546.5 L735.0 546.3 L735.7 546.1 Z M727.3 587.4 L730.3 588.5 L737.1 590.2 L744.3 591.2 L745.7 591.4 L746.4 587.5 L745.1 587.4 L739.4 586.5 L734.1 585.2 L729.4 583.4 L725.4 581.3 L722.2 578.8 L720.1 576.1 L719.0 573.3 L719.1 570.6 L720.2 567.9 L722.5 565.5 L725.7 563.3 L729.7 561.6 L734.4 560.3 L739.6 559.5 L745.1 559.2 L750.8 559.4 L752.2 559.6 L752.9 555.8 L751.6 555.7 L744.4 555.4 L737.4 555.7 L734.1 556.2 L733.6 556.0 L733.0 555.7 L732.3 555.4 L731.7 555.1 L731.0 554.8 L730.3 554.6 L729.5 554.3 L728.8 554.1 L728.0 553.9 L727.2 553.7 L726.4 553.5 L725.5 553.4 L724.7 553.3 L723.9 553.2 L723.0 553.1 L722.2 553.0 L721.3 553.0 L720.5 552.9 L719.6 552.9 L718.8 552.9 L717.9 553.0 L717.1 553.0 L716.3 553.1 L715.4 553.2 L714.6 553.3 L713.9 553.4 L713.1 553.6 L712.3 553.7 L711.6 553.9 L710.9 554.1 L710.2 554.4 L709.6 554.6 L708.9 554.9 L708.3 555.1 L707.8 555.4 L707.2 555.7 L706.7 556.0 L706.3 556.4 L705.8 556.7 L705.4 557.0 L705.1 557.4 L704.8 557.8 L704.5 558.2 L704.2 558.5 L704.0 558.9 L703.9 559.3 L703.8 559.8 L703.7 560.2 L703.7 560.6 L703.7 561.0 L703.7 561.4 L703.8 561.8 L703.9 562.2 L704.1 562.7 L704.3 563.1 L704.6 563.5 L704.9 563.9 L705.2 564.3 L705.6 564.7 L706.0 565.1 L706.5 565.4 L707.0 565.8 L707.5 566.1 L708.0 566.5 L708.6 566.8 L709.2 567.1 L709.9 567.4 L710.6 567.7 L711.2 568.0 L711.9 568.2 L711.2 569.8 L711.2 571.5 L710.4 571.6 L709.6 571.7 L708.9 571.9 L708.1 572.0 L707.4 572.2 L706.6 572.4 L706.0 572.7 L705.3 572.9 L704.7 573.2 L704.0 573.5 L703.5 573.7 L702.9 574.1 L702.4 574.4 L701.9 574.7 L701.5 575.1 L701.1 575.4 L700.7 575.8 L700.4 576.2 L700.1 576.6 L699.9 577.0 L699.7 577.4 L699.5 577.8 L699.4 578.2 L699.3 578.6 L699.3 579.0 L699.3 579.5 L699.3 579.9 L699.4 580.3 L699.6 580.8 L699.7 581.2 L700.0 581.6 L700.2 582.0 L700.5 582.4 L700.9 582.8 L701.2 583.2 L701.7 583.6 L702.1 584.0 L702.6 584.4 L703.1 584.8 L703.7 585.1 L704.3 585.4 L704.9 585.8 L705.6 586.1 L706.2 586.4 L706.9 586.7 L707.7 586.9 L708.4 587.2 L709.2 587.4 L710.0 587.6 L710.8 587.8 L711.6 588.0 L712.5 588.1 L713.3 588.3 L714.2 588.4 L715.1 588.5 L715.9 588.5 L716.8 588.6 L717.7 588.6 L718.6 588.6 L719.4 588.6 L720.3 588.6 L721.1 588.5 L722.0 588.5 L722.8 588.4 L723.6 588.2 L724.4 588.1 L725.2 587.9 L726.0 587.8 L726.7 587.6 Z M717.8 631.2 L720.9 632.4 L727.8 634.1 L735.2 635.2 L736.6 635.4 L737.5 631.3 L736.0 631.1 L730.3 630.3 L724.8 628.9 L719.9 627.0 L715.8 624.7 L712.6 622.1 L710.4 619.2 L709.4 616.3 L709.4 613.4 L710.7 610.6 L713.0 608.0 L716.2 605.7 L720.4 603.9 L725.2 602.5 L730.6 601.6 L736.3 601.3 L742.1 601.6 L743.5 601.8 L744.3 597.8 L742.9 597.7 L735.6 597.3 L728.3 597.7 L725.0 598.2 L724.5 598.0 L723.8 597.6 L723.2 597.3 L722.5 597.0 L721.8 596.7 L721.0 596.5 L720.3 596.2 L719.5 596.0 L718.7 595.8 L717.9 595.6 L717.0 595.4 L716.2 595.2 L715.3 595.1 L714.5 595.0 L713.6 594.9 L712.7 594.8 L711.9 594.8 L711.0 594.7 L710.1 594.7 L709.2 594.7 L708.4 594.8 L707.5 594.8 L706.7 594.9 L705.8 595.0 L705.0 595.1 L704.2 595.3 L703.4 595.4 L702.6 595.6 L701.9 595.8 L701.2 596.0 L700.4 596.2 L699.8 596.5 L699.1 596.8 L698.5 597.1 L697.9 597.4 L697.4 597.7 L696.9 598.0 L696.4 598.4 L695.9 598.7 L695.5 599.1 L695.1 599.5 L694.8 599.9 L694.5 600.3 L694.3 600.7 L694.1 601.1 L693.9 601.5 L693.8 601.9 L693.7 602.4 L693.7 602.8 L693.7 603.3 L693.7 603.7 L693.8 604.1 L693.9 604.6 L694.1 605.0 L694.3 605.5 L694.6 605.9 L694.9 606.3 L695.2 606.7 L695.6 607.1 L696.0 607.6 L696.5 607.9 L697.0 608.3 L697.5 608.7 L698.1 609.1 L698.7 609.4 L699.3 609.8 L700.0 610.1 L700.7 610.4 L701.4 610.7 L702.1 610.9 L701.4 612.6 L701.3 614.3 L700.5 614.4 L699.7 614.6 L698.9 614.8 L698.1 614.9 L697.4 615.1 L696.6 615.4 L695.9 615.6 L695.2 615.9 L694.6 616.1 L694.0 616.4 L693.4 616.7 L692.8 617.1 L692.3 617.4 L691.8 617.8 L691.3 618.1 L690.9 618.5 L690.5 618.9 L690.2 619.3 L689.9 619.7 L689.7 620.1 L689.4 620.6 L689.3 621.0 L689.2 621.5 L689.1 621.9 L689.0 622.3 L689.0 622.8 L689.1 623.3 L689.2 623.7 L689.3 624.2 L689.5 624.6 L689.7 625.1 L690.0 625.5 L690.3 625.9 L690.6 626.4 L691.0 626.8 L691.4 627.2 L691.9 627.6 L692.4 628.0 L692.9 628.4 L693.5 628.8 L694.1 629.1 L694.8 629.5 L695.4 629.8 L696.1 630.1 L696.9 630.4 L697.6 630.7 L698.4 630.9 L699.2 631.2 L700.0 631.4 L700.8 631.6 L701.7 631.8 L702.5 632.0 L703.4 632.1 L704.3 632.2 L705.2 632.3 L706.1 632.4 L707.0 632.4 L707.9 632.5 L708.8 632.5 L709.7 632.5 L710.6 632.4 L711.4 632.4 L712.3 632.3 L713.2 632.2 L714.0 632.1 L714.8 631.9 L715.6 631.8 L716.4 631.6 L717.2 631.4 Z M707.8 677.5 L710.9 678.8 L718.0 680.7 L725.6 681.9 L727.1 682.0 L728.0 677.6 L726.5 677.5 L720.6 676.6 L715.0 675.1 L710.0 673.1 L705.7 670.7 L702.5 667.9 L700.2 664.9 L699.2 661.8 L699.3 658.7 L700.5 655.7 L702.9 653.0 L706.3 650.6 L710.6 648.6 L715.6 647.2 L721.1 646.3 L727.0 645.9 L732.9 646.2 L734.4 646.4 L735.2 642.2 L733.8 642.1 L726.2 641.7 L718.8 642.1 L715.3 642.7 L714.8 642.4 L714.2 642.0 L713.5 641.7 L712.8 641.3 L712.0 641.0 L711.3 640.8 L710.5 640.5 L709.7 640.3 L708.9 640.0 L708.0 639.8 L707.2 639.6 L706.3 639.5 L705.4 639.3 L704.6 639.2 L703.7 639.1 L702.8 639.0 L701.9 639.0 L701.0 638.9 L700.1 638.9 L699.2 638.9 L698.3 639.0 L697.4 639.0 L696.5 639.1 L695.6 639.2 L694.8 639.4 L694.0 639.5 L693.1 639.7 L692.4 639.9 L691.6 640.1 L690.8 640.3 L690.1 640.5 L689.4 640.8 L688.7 641.1 L688.1 641.4 L687.5 641.7 L686.9 642.1 L686.4 642.4 L685.9 642.8 L685.4 643.2 L685.0 643.6 L684.6 644.0 L684.3 644.4 L684.0 644.8 L683.7 645.2 L683.5 645.7 L683.3 646.1 L683.2 646.6 L683.1 647.0 L683.1 647.5 L683.1 648.0 L683.1 648.4 L683.2 648.9 L683.3 649.4 L683.5 649.8 L683.8 650.3 L684.0 650.8 L684.3 651.2 L684.7 651.7 L685.1 652.1 L685.5 652.5 L686.0 652.9 L686.5 653.3 L687.0 653.7 L687.6 654.1 L688.2 654.5 L688.9 654.8 L689.6 655.2 L690.3 655.5 L691.0 655.8 L691.7 656.1 L691.0 657.9 L690.9 659.7 L690.1 659.8 L689.2 660.0 L688.4 660.1 L687.6 660.3 L686.8 660.6 L686.1 660.8 L685.3 661.0 L684.6 661.3 L683.9 661.6 L683.3 661.9 L682.7 662.3 L682.1 662.6 L681.6 663.0 L681.1 663.3 L680.6 663.7 L680.2 664.1 L679.8 664.5 L679.4 665.0 L679.1 665.4 L678.8 665.9 L678.6 666.3 L678.4 666.8 L678.3 667.2 L678.2 667.7 L678.2 668.2 L678.2 668.7 L678.2 669.1 L678.3 669.6 L678.4 670.1 L678.6 670.6 L678.9 671.1 L679.1 671.5 L679.4 672.0 L679.8 672.4 L680.2 672.9 L680.6 673.3 L681.1 673.8 L681.6 674.2 L682.2 674.6 L682.7 675.0 L683.4 675.4 L684.0 675.7 L684.7 676.1 L685.4 676.4 L686.2 676.7 L686.9 677.0 L687.7 677.3 L688.6 677.5 L689.4 677.8 L690.3 678.0 L691.1 678.2 L692.0 678.4 L692.9 678.5 L693.8 678.6 L694.7 678.7 L695.7 678.8 L696.6 678.9 L697.5 678.9 L698.4 678.9 L699.4 678.9 L700.3 678.9 L701.2 678.8 L702.1 678.7 L703.0 678.6 L703.8 678.5 L704.7 678.3 L705.5 678.2 L706.3 678.0 L707.1 677.7 Z M697.1 726.7 L700.3 728.0 L707.6 730.1 L715.4 731.3 L717.0 731.5 L717.9 726.8 L716.4 726.7 L710.3 725.7 L704.5 724.1 L699.4 722.0 L695.0 719.4 L691.7 716.5 L689.4 713.3 L688.3 710.0 L688.4 706.7 L689.8 703.5 L692.2 700.6 L695.8 698.1 L700.2 696.0 L705.3 694.5 L711.0 693.5 L717.1 693.2 L723.2 693.5 L724.7 693.7 L725.6 689.2 L724.1 689.1 L716.3 688.7 L708.7 689.1 L705.1 689.7 L704.6 689.4 L703.9 689.0 L703.2 688.7 L702.5 688.3 L701.7 688.0 L701.0 687.7 L700.2 687.4 L699.3 687.2 L698.5 686.9 L697.6 686.7 L696.7 686.5 L695.9 686.3 L694.9 686.2 L694.0 686.1 L693.1 685.9 L692.2 685.9 L691.3 685.8 L690.3 685.8 L689.4 685.8 L688.5 685.8 L687.6 685.8 L686.6 685.9 L685.7 686.0 L684.9 686.1 L684.0 686.2 L683.1 686.4 L682.3 686.5 L681.5 686.7 L680.7 687.0 L679.9 687.2 L679.2 687.5 L678.4 687.8 L677.7 688.1 L677.1 688.4 L676.5 688.7 L675.9 689.1 L675.3 689.5 L674.8 689.8 L674.3 690.2 L673.9 690.7 L673.5 691.1 L673.1 691.5 L672.8 692.0 L672.5 692.4 L672.3 692.9 L672.1 693.4 L672.0 693.9 L671.9 694.4 L671.9 694.9 L671.9 695.3 L671.9 695.8 L672.0 696.3 L672.1 696.8 L672.3 697.3 L672.5 697.8 L672.8 698.3 L673.1 698.8 L673.5 699.2 L673.9 699.7 L674.3 700.2 L674.8 700.6 L675.3 701.0 L675.9 701.5 L676.5 701.9 L677.1 702.3 L677.8 702.6 L678.5 703.0 L679.2 703.3 L680.0 703.7 L680.7 704.0 L679.9 705.8 L679.8 707.8 L679.0 707.9 L678.1 708.1 L677.3 708.3 L676.4 708.5 L675.6 708.7 L674.8 708.9 L674.1 709.2 L673.3 709.5 L672.7 709.8 L672.0 710.1 L671.3 710.5 L670.8 710.9 L670.2 711.2 L669.7 711.6 L669.2 712.1 L668.7 712.5 L668.3 712.9 L668.0 713.4 L667.6 713.8 L667.4 714.3 L667.1 714.8 L666.9 715.3 L666.8 715.8 L666.7 716.3 L666.7 716.8 L666.7 717.3 L666.7 717.8 L666.8 718.3 L666.9 718.8 L667.1 719.3 L667.3 719.8 L667.6 720.3 L667.9 720.8 L668.3 721.3 L668.7 721.8 L669.1 722.2 L669.6 722.7 L670.2 723.1 L670.7 723.6 L671.3 724.0 L672.0 724.4 L672.6 724.8 L673.3 725.2 L674.1 725.5 L674.8 725.8 L675.6 726.2 L676.5 726.4 L677.3 726.7 L678.2 727.0 L679.0 727.2 L679.9 727.4 L680.8 727.6 L681.8 727.8 L682.7 727.9 L683.6 728.0 L684.6 728.1 L685.6 728.1 L686.5 728.2 L687.5 728.2 L688.4 728.2 L689.3 728.1 L690.3 728.1 L691.2 728.0 L692.1 727.9 L693.0 727.7 L693.9 727.6 L694.8 727.4 L695.6 727.2 L696.4 726.9 Z M685.7 779.0 L689.0 780.4 L696.6 782.5 L704.6 783.8 L706.2 784.0 L707.2 779.1 L705.7 778.9 L699.3 777.9 L693.4 776.2 L688.1 774.0 L683.7 771.2 L680.2 768.1 L677.9 764.7 L676.8 761.2 L677.0 757.7 L678.4 754.3 L680.9 751.3 L684.6 748.6 L689.1 746.4 L694.5 744.7 L700.4 743.7 L706.6 743.3 L712.9 743.7 L714.4 743.8 L715.4 739.1 L713.9 739.0 L705.8 738.6 L697.9 739.0 L694.3 739.6 L693.7 739.3 L693.0 738.9 L692.3 738.5 L691.6 738.2 L690.8 737.8 L690.0 737.5 L689.2 737.2 L688.3 736.9 L687.5 736.7 L686.6 736.4 L685.7 736.2 L684.7 736.1 L683.8 735.9 L682.9 735.8 L681.9 735.6 L681.0 735.6 L680.0 735.5 L679.1 735.5 L678.1 735.4 L677.2 735.5 L676.2 735.5 L675.3 735.6 L674.3 735.7 L673.4 735.8 L672.5 735.9 L671.6 736.1 L670.8 736.3 L669.9 736.5 L669.1 736.7 L668.3 737.0 L667.5 737.3 L666.8 737.6 L666.1 737.9 L665.4 738.2 L664.7 738.6 L664.1 739.0 L663.6 739.4 L663.0 739.8 L662.5 740.2 L662.1 740.6 L661.7 741.1 L661.3 741.6 L661.0 742.1 L660.7 742.5 L660.4 743.0 L660.3 743.5 L660.1 744.1 L660.0 744.6 L660.0 745.1 L660.0 745.6 L660.0 746.2 L660.1 746.7 L660.2 747.2 L660.4 747.7 L660.6 748.2 L660.9 748.8 L661.2 749.3 L661.6 749.8 L662.0 750.3 L662.5 750.7 L663.0 751.2 L663.5 751.7 L664.1 752.1 L664.7 752.6 L665.3 753.0 L666.0 753.4 L666.7 753.8 L667.5 754.1 L668.2 754.5 L669.0 754.8 L668.2 756.8 L668.1 758.8 L667.2 759.0 L666.3 759.1 L665.4 759.3 L664.6 759.6 L663.7 759.8 L662.9 760.1 L662.1 760.4 L661.4 760.7 L660.7 761.0 L660.0 761.3 L659.3 761.7 L658.7 762.1 L658.1 762.5 L657.6 762.9 L657.1 763.4 L656.6 763.8 L656.2 764.3 L655.8 764.8 L655.5 765.3 L655.2 765.8 L654.9 766.3 L654.7 766.8 L654.6 767.3 L654.5 767.9 L654.4 768.4 L654.4 769.0 L654.5 769.5 L654.6 770.0 L654.7 770.6 L654.9 771.1 L655.1 771.6 L655.4 772.2 L655.7 772.7 L656.1 773.2 L656.5 773.7 L657.0 774.2 L657.5 774.7 L658.0 775.2 L658.6 775.6 L659.2 776.1 L659.8 776.5 L660.5 776.9 L661.3 777.3 L662.0 777.7 L662.8 778.0 L663.6 778.4 L664.5 778.7 L665.3 779.0 L666.2 779.2 L667.1 779.5 L668.0 779.7 L669.0 779.9 L669.9 780.1 L670.9 780.2 L671.9 780.3 L672.8 780.4 L673.8 780.5 L674.8 780.5 L675.8 780.5 L676.8 780.5 L677.7 780.5 L678.7 780.4 L679.7 780.3 L680.6 780.2 L681.5 780.0 L682.4 779.9 L683.3 779.7 L684.2 779.4 L685.0 779.2 Z M467.4 775.7 L467.1 776.3 L478.6 777.6 L491.4 778.9 L492.9 774.6 L494.3 771.8 L496.7 769.3 L499.9 767.1 L503.8 765.3 L508.3 763.9 L513.2 763.1 L518.3 762.8 L523.4 763.1 L528.4 763.9 L533.0 765.2 L537.1 767.0 L540.4 769.2 L543.0 771.7 L544.7 774.5 L545.4 777.4 L545.0 780.2 L543.7 784.6 L556.7 786.0 L568.3 787.3 L568.4 786.6 L568.5 785.9 L568.6 785.2 L568.6 784.5 L568.5 783.9 L568.4 783.2 L568.2 782.5 L567.9 781.8 L567.6 781.2 L567.2 780.5 L566.8 779.9 L566.3 779.2 L565.8 778.6 L565.2 778.0 L564.5 777.4 L563.9 776.9 L563.1 776.3 L562.3 775.8 L561.5 775.3 L560.6 774.8 L559.7 774.3 L558.8 773.9 L557.8 773.5 L557.5 773.3 L557.4 773.0 L554.9 768.9 L551.0 765.2 L545.9 761.9 L539.9 759.2 L533.0 757.3 L525.6 756.1 L518.0 755.7 L510.4 756.1 L503.1 757.3 L496.4 759.3 L490.6 762.0 L485.8 765.3 L485.5 765.6 L485.1 765.6 L484.0 765.8 L482.8 766.0 L481.7 766.3 L480.6 766.6 L479.5 766.9 L478.5 767.2 L477.5 767.6 L476.5 767.9 L475.5 768.4 L474.6 768.8 L473.8 769.3 L472.9 769.8 L472.2 770.3 L471.4 770.8 L470.7 771.3 L470.1 771.9 L469.5 772.5 L469.0 773.1 L468.5 773.7 L468.0 774.4 L467.7 775.0 Z M571.9 787.0 L571.6 787.6 L583.3 788.9 L596.3 790.3 L597.5 785.9 L598.8 783.1 L601.0 780.5 L604.1 778.3 L607.9 776.4 L612.3 775.1 L617.2 774.2 L622.3 773.9 L627.5 774.2 L632.6 775.0 L637.3 776.4 L641.5 778.2 L645.0 780.4 L647.8 783.0 L649.6 785.8 L650.5 788.7 L650.3 791.6 L649.3 796.0 L662.4 797.5 L674.2 798.7 L674.3 798.0 L674.3 797.4 L674.3 796.7 L674.3 796.0 L674.2 795.3 L674.0 794.6 L673.7 793.9 L673.4 793.2 L673.1 792.6 L672.7 791.9 L672.2 791.2 L671.7 790.6 L671.1 790.0 L670.5 789.4 L669.8 788.8 L669.1 788.2 L668.3 787.6 L667.5 787.1 L666.6 786.6 L665.7 786.1 L664.8 785.6 L663.8 785.2 L662.8 784.7 L662.4 784.6 L662.3 784.3 L659.5 780.2 L655.4 776.4 L650.1 773.0 L643.8 770.3 L636.8 768.3 L629.3 767.1 L621.6 766.7 L614.0 767.1 L606.7 768.4 L600.1 770.4 L594.4 773.2 L589.8 776.5 L589.5 776.8 L589.1 776.8 L588.0 777.0 L586.8 777.2 L585.7 777.5 L584.6 777.8 L583.6 778.1 L582.5 778.4 L581.5 778.8 L580.6 779.2 L579.7 779.6 L578.8 780.0 L577.9 780.5 L577.1 781.0 L576.4 781.5 L575.7 782.0 L575.0 782.6 L574.4 783.2 L573.8 783.8 L573.3 784.4 L572.9 785.0 L572.5 785.7 L572.1 786.3 Z" fill="#9bc953" fill-rule="evenodd" /><path d="M320.0 330.8 L320.0 332.4 L320.3 332.8 L321.0 333.4 L321.8 333.8 L321.7 328.0 Z" fill="#2c3a15" fill-rule="evenodd" stroke="#2c3a15" stroke-width="0.6"/><path d="M319.8 331.5 L319.9 332.2 L320.0 332.4 L320.0 330.8 Z" fill="#2e3d16" fill-rule="evenodd" stroke="#2e3d16" stroke-width="0.6"/><path d="M85.4 735.0 L87.6 763.1 L89.9 758.9 L87.7 730.9 Z" fill="#86b447" fill-rule="evenodd" stroke="#86b447" stroke-width="0.6"/><path d="M137.3 728.1 L137.7 734.9 L138.3 733.5 L138.3 730.7 Z" fill="#779f3c" fill-rule="evenodd" stroke="#779f3c" stroke-width="0.6"/><path d="M135.4 725.7 L136.2 738.1 L137.3 736.2 L137.7 734.9 L137.3 728.1 Z" fill="#6d9236" fill-rule="evenodd" stroke="#6d9236" stroke-width="0.6"/><path d="M132.6 723.6 L134.5 751.6 L135.8 752.6 L135.0 740.4 L136.2 738.1 L135.4 725.7 Z" fill="#638530" fill-rule="evenodd" stroke="#638530" stroke-width="0.6"/><path d="M129.0 721.9 L130.9 749.9 L134.5 751.6 L132.6 723.6 Z" fill="#5b7b2c" fill-rule="evenodd" stroke="#5b7b2c" stroke-width="0.6"/><path d="M124.8 720.7 L126.8 748.6 L130.9 749.9 L129.0 721.9 Z" fill="#557329" fill-rule="evenodd" stroke="#557329" stroke-width="0.6"/><path d="M120.2 719.9 L122.2 747.8 L126.8 748.6 L124.8 720.7 Z" fill="#4e6a26" fill-rule="evenodd" stroke="#4e6a26" stroke-width="0.6"/><path d="M115.2 719.6 L117.3 747.6 L122.2 747.8 L120.2 719.9 Z" fill="#466022" fill-rule="evenodd" stroke="#466022" stroke-width="0.6"/><path d="M110.2 719.9 L112.2 747.8 L117.3 747.6 L115.2 719.6 Z" fill="#3e531e" fill-rule="evenodd" stroke="#3e531e" stroke-width="0.6"/><path d="M105.2 720.7 L107.3 748.6 L112.2 747.8 L110.2 719.9 Z" fill="#35471a" fill-rule="evenodd" stroke="#35471a" stroke-width="0.6"/><path d="M100.5 722.0 L102.6 749.9 L107.3 748.6 L105.2 720.7 Z" fill="#2f3f17" fill-rule="evenodd" stroke="#2f3f17" stroke-width="0.6"/><path d="M96.3 723.7 L98.4 751.7 L102.6 749.9 L100.5 722.0 Z" fill="#2a3814" fill-rule="evenodd" stroke="#2a3814" stroke-width="0.6"/><path d="M92.7 725.8 L94.8 753.8 L98.4 751.7 L96.3 723.7 Z" fill="#374b1b" fill-rule="evenodd" stroke="#374b1b" stroke-width="0.6"/><path d="M89.8 728.2 L92.0 756.3 L94.8 753.8 L92.7 725.8 Z" fill="#516e28" fill-rule="evenodd" stroke="#516e28" stroke-width="0.6"/><path d="M87.7 730.9 L89.9 758.9 L92.0 756.3 L89.8 728.2 Z" fill="#749c3c" fill-rule="evenodd" stroke="#749c3c" stroke-width="0.6"/><path d="M396.6 337.1 L396.6 338.5 L397.0 339.0 L397.7 339.6 L398.2 339.8 L398.1 334.1 Z" fill="#2c3a15" fill-rule="evenodd" stroke="#2c3a15" stroke-width="0.6"/><path d="M396.4 337.7 L396.6 338.4 L396.6 338.5 L396.6 337.1 Z" fill="#2e3d16" fill-rule="evenodd" stroke="#2e3d16" stroke-width="0.6"/><path d="M184.9 745.8 L186.6 774.0 L188.7 769.7 L187.1 741.6 Z" fill="#86b447" fill-rule="evenodd" stroke="#86b447" stroke-width="0.6"/><path d="M237.9 741.5 L238.0 744.3 L238.1 744.2 Z" fill="#80aa42" fill-rule="evenodd" stroke="#80aa42" stroke-width="0.6"/><path d="M236.8 738.8 L237.2 747.1 L237.2 747.0 L238.0 744.3 L237.9 741.5 Z" fill="#779f3c" fill-rule="evenodd" stroke="#779f3c" stroke-width="0.6"/><path d="M234.7 736.4 L235.4 750.8 L237.2 747.1 L236.8 738.8 Z" fill="#6d9236" fill-rule="evenodd" stroke="#6d9236" stroke-width="0.6"/><path d="M231.7 734.3 L233.1 762.4 L235.8 764.3 L235.2 751.2 L235.4 750.8 L234.7 736.4 Z" fill="#638530" fill-rule="evenodd" stroke="#638530" stroke-width="0.6"/><path d="M228.1 732.5 L229.4 760.6 L233.1 762.4 L231.7 734.3 Z" fill="#5b7b2c" fill-rule="evenodd" stroke="#5b7b2c" stroke-width="0.6"/><path d="M223.8 731.3 L225.2 759.3 L229.4 760.6 L228.1 732.5 Z" fill="#557329" fill-rule="evenodd" stroke="#557329" stroke-width="0.6"/><path d="M219.1 730.5 L220.5 758.5 L225.2 759.3 L223.8 731.3 Z" fill="#4e6a26" fill-rule="evenodd" stroke="#4e6a26" stroke-width="0.6"/><path d="M214.1 730.2 L215.5 758.3 L220.5 758.5 L219.1 730.5 Z" fill="#466022" fill-rule="evenodd" stroke="#466022" stroke-width="0.6"/><path d="M209.0 730.5 L210.5 758.5 L215.5 758.3 L214.1 730.2 Z" fill="#3e531e" fill-rule="evenodd" stroke="#3e531e" stroke-width="0.6"/><path d="M204.1 731.3 L205.6 759.4 L210.5 758.5 L209.0 730.5 Z" fill="#34471a" fill-rule="evenodd" stroke="#34471a" stroke-width="0.6"/><path d="M199.4 732.6 L201.0 760.7 L205.6 759.4 L204.1 731.3 Z" fill="#2f3f17" fill-rule="evenodd" stroke="#2f3f17" stroke-width="0.6"/><path d="M195.3 734.4 L196.8 762.4 L201.0 760.7 L199.4 732.6 Z" fill="#2a3814" fill-rule="evenodd" stroke="#2a3814" stroke-width="0.6"/><path d="M191.7 736.5 L193.3 764.6 L196.8 762.4 L195.3 734.4 Z" fill="#374b1b" fill-rule="evenodd" stroke="#374b1b" stroke-width="0.6"/><path d="M189.0 738.9 L190.6 767.1 L193.3 764.6 L191.7 736.5 Z" fill="#516e28" fill-rule="evenodd" stroke="#516e28" stroke-width="0.6"/><path d="M187.1 741.6 L188.7 769.7 L190.6 767.1 L189.0 738.9 Z" fill="#749c3c" fill-rule="evenodd" stroke="#749c3c" stroke-width="0.6"/><path d="M474.0 343.3 L474.0 344.5 L474.0 344.7 L474.5 345.3 L475.3 345.9 L475.3 345.9 L475.3 340.4 Z" fill="#2c3a15" fill-rule="evenodd" stroke="#2c3a15" stroke-width="0.6"/><path d="M473.8 344.0 L474.0 344.5 L474.0 343.3 Z" fill="#2e3d16" fill-rule="evenodd" stroke="#2e3d16" stroke-width="0.6"/><path d="M285.8 756.7 L286.8 785.0 L288.7 780.7 L287.7 752.5 Z" fill="#86b447" fill-rule="evenodd" stroke="#86b447" stroke-width="0.6"/><path d="M338.9 752.3 L338.9 756.1 L339.2 755.1 Z" fill="#80aa42" fill-rule="evenodd" stroke="#80aa42" stroke-width="0.6"/><path d="M337.5 749.6 L337.8 759.6 L338.5 757.9 L338.9 756.1 L338.9 752.3 Z" fill="#779f3c" fill-rule="evenodd" stroke="#779f3c" stroke-width="0.6"/><path d="M335.3 747.2 L336.0 775.4 L337.1 776.5 L336.7 762.2 L337.8 759.6 L337.5 749.6 Z" fill="#6d9236" fill-rule="evenodd" stroke="#6d9236" stroke-width="0.6"/><path d="M332.2 745.0 L333.0 773.2 L336.0 775.4 L335.3 747.2 Z" fill="#638530" fill-rule="evenodd" stroke="#638530" stroke-width="0.6"/><path d="M328.4 743.3 L329.2 771.5 L333.0 773.2 L332.2 745.0 Z" fill="#5b7b2c" fill-rule="evenodd" stroke="#5b7b2c" stroke-width="0.6"/><path d="M324.0 742.0 L324.8 770.2 L329.2 771.5 L328.4 743.3 Z" fill="#557329" fill-rule="evenodd" stroke="#557329" stroke-width="0.6"/><path d="M319.2 741.2 L320.0 769.3 L324.8 770.2 L324.0 742.0 Z" fill="#4e6a26" fill-rule="evenodd" stroke="#4e6a26" stroke-width="0.6"/><path d="M314.2 740.9 L315.0 769.1 L320.0 769.3 L319.2 741.2 Z" fill="#466022" fill-rule="evenodd" stroke="#466022" stroke-width="0.6"/><path d="M309.1 741.2 L310.0 769.4 L315.0 769.1 L314.2 740.9 Z" fill="#3d531e" fill-rule="evenodd" stroke="#3d531e" stroke-width="0.6"/><path d="M304.2 742.0 L305.1 770.2 L310.0 769.4 L309.1 741.2 Z" fill="#34471a" fill-rule="evenodd" stroke="#34471a" stroke-width="0.6"/><path d="M299.6 743.4 L300.5 771.5 L305.1 770.2 L304.2 742.0 Z" fill="#2f3f17" fill-rule="evenodd" stroke="#2f3f17" stroke-width="0.6"/><path d="M295.5 745.1 L296.5 773.3 L300.5 771.5 L299.6 743.4 Z" fill="#2a3814" fill-rule="evenodd" stroke="#2a3814" stroke-width="0.6"/><path d="M292.1 747.3 L293.1 775.5 L296.5 773.3 L295.5 745.1 Z" fill="#374b1b" fill-rule="evenodd" stroke="#374b1b" stroke-width="0.6"/><path d="M289.4 749.8 L290.5 778.0 L293.1 775.5 L292.1 747.3 Z" fill="#516e28" fill-rule="evenodd" stroke="#516e28" stroke-width="0.6"/><path d="M287.7 752.5 L288.7 780.7 L290.5 778.0 L289.4 749.8 Z" fill="#749c3c" fill-rule="evenodd" stroke="#749c3c" stroke-width="0.6"/><path d="M552.1 349.6 L552.1 350.6 L552.2 351.0 L552.7 351.7 L553.2 352.0 L553.3 346.7 Z" fill="#2c3a15" fill-rule="evenodd" stroke="#2c3a15" stroke-width="0.6"/><path d="M552.0 350.3 L552.1 350.6 L552.1 349.6 Z" fill="#2e3d16" fill-rule="evenodd" stroke="#2e3d16" stroke-width="0.6"/><path d="M387.9 767.7 L388.4 796.2 L390.0 791.8 L389.6 763.5 Z" fill="#86b447" fill-rule="evenodd" stroke="#86b447" stroke-width="0.6"/><path d="M441.1 763.3 L441.1 768.8 L441.6 766.2 Z" fill="#80aa42" fill-rule="evenodd" stroke="#80aa42" stroke-width="0.6"/><path d="M439.6 760.6 L439.7 772.9 L441.1 769.0 L441.1 768.8 L441.1 763.3 Z" fill="#779f3c" fill-rule="evenodd" stroke="#779f3c" stroke-width="0.6"/><path d="M437.2 758.1 L437.3 786.5 L439.6 788.8 L439.5 773.3 L439.7 772.9 L439.6 760.6 Z" fill="#6d9236" fill-rule="evenodd" stroke="#6d9236" stroke-width="0.6"/><path d="M434.0 756.0 L434.1 784.3 L437.3 786.5 L437.2 758.1 Z" fill="#638530" fill-rule="evenodd" stroke="#638530" stroke-width="0.6"/><path d="M430.0 754.2 L430.2 782.5 L434.1 784.3 L434.0 756.0 Z" fill="#5b7b2c" fill-rule="evenodd" stroke="#5b7b2c" stroke-width="0.6"/><path d="M425.5 752.9 L425.7 781.1 L430.2 782.5 L430.0 754.2 Z" fill="#557329" fill-rule="evenodd" stroke="#557329" stroke-width="0.6"/><path d="M420.7 752.1 L420.9 780.3 L425.7 781.1 L425.5 752.9 Z" fill="#4e6a26" fill-rule="evenodd" stroke="#4e6a26" stroke-width="0.6"/><path d="M415.6 751.8 L415.8 780.1 L420.9 780.3 L420.7 752.1 Z" fill="#466022" fill-rule="evenodd" stroke="#466022" stroke-width="0.6"/><path d="M410.5 752.1 L410.8 780.4 L415.8 780.1 L415.6 751.8 Z" fill="#3d531e" fill-rule="evenodd" stroke="#3d531e" stroke-width="0.6"/><path d="M405.6 752.9 L405.9 781.2 L410.8 780.4 L410.5 752.1 Z" fill="#34471a" fill-rule="evenodd" stroke="#34471a" stroke-width="0.6"/><path d="M401.0 754.2 L401.4 782.5 L405.9 781.2 L405.6 752.9 Z" fill="#2f3f17" fill-rule="evenodd" stroke="#2f3f17" stroke-width="0.6"/><path d="M397.0 756.0 L397.4 784.4 L401.4 782.5 L401.0 754.2 Z" fill="#2a3814" fill-rule="evenodd" stroke="#2a3814" stroke-width="0.6"/><path d="M393.7 758.2 L394.1 786.6 L397.4 784.4 L397.0 756.0 Z" fill="#374b1b" fill-rule="evenodd" stroke="#374b1b" stroke-width="0.6"/><path d="M391.2 760.7 L391.6 789.1 L394.1 786.6 L393.7 758.2 Z" fill="#516e28" fill-rule="evenodd" stroke="#516e28" stroke-width="0.6"/><path d="M389.6 763.5 L390.0 791.8 L391.6 789.1 L391.2 760.7 Z" fill="#749c3c" fill-rule="evenodd" stroke="#749c3c" stroke-width="0.6"/><path d="M631.0 356.0 L631.0 356.8 L631.2 357.4 L631.8 358.1 L631.8 358.1 L632.0 353.0 Z" fill="#2c3a15" fill-rule="evenodd" stroke="#2c3a15" stroke-width="0.6"/><path d="M630.9 356.7 L631.0 356.8 L631.0 356.0 Z" fill="#2e3d16" fill-rule="evenodd" stroke="#2e3d16" stroke-width="0.6"/><path d="M491.4 778.9 L491.3 807.5 L492.7 803.1 L492.9 774.6 Z" fill="#86b447" fill-rule="evenodd" stroke="#86b447" stroke-width="0.6"/><path d="M544.7 774.5 L544.5 781.8 L545.0 780.2 L545.4 777.4 Z" fill="#80aa42" fill-rule="evenodd" stroke="#80aa42" stroke-width="0.6"/><path d="M543.0 771.7 L542.5 800.2 L543.4 801.7 L543.7 784.6 L543.7 784.6 L544.5 781.8 L544.7 774.5 Z" fill="#779f3c" fill-rule="evenodd" stroke="#779f3c" stroke-width="0.6"/><path d="M540.4 769.2 L540.0 797.7 L542.5 800.2 L543.0 771.7 Z" fill="#6d9236" fill-rule="evenodd" stroke="#6d9236" stroke-width="0.6"/><path d="M537.1 767.0 L536.6 795.4 L540.0 797.7 L540.4 769.2 Z" fill="#638530" fill-rule="evenodd" stroke="#638530" stroke-width="0.6"/><path d="M533.0 765.2 L532.5 793.6 L536.6 795.4 L537.1 767.0 Z" fill="#5b7b2c" fill-rule="evenodd" stroke="#5b7b2c" stroke-width="0.6"/><path d="M528.4 763.9 L528.0 792.3 L532.5 793.6 L533.0 765.2 Z" fill="#557329" fill-rule="evenodd" stroke="#557329" stroke-width="0.6"/><path d="M523.4 763.1 L523.0 791.4 L528.0 792.3 L528.4 763.9 Z" fill="#4e6a26" fill-rule="evenodd" stroke="#4e6a26" stroke-width="0.6"/><path d="M518.3 762.8 L517.9 791.2 L523.0 791.4 L523.4 763.1 Z" fill="#466022" fill-rule="evenodd" stroke="#466022" stroke-width="0.6"/><path d="M513.2 763.1 L512.9 791.5 L517.9 791.2 L518.3 762.8 Z" fill="#3e531e" fill-rule="evenodd" stroke="#3e531e" stroke-width="0.6"/><path d="M508.3 763.9 L508.0 792.3 L512.9 791.5 L513.2 763.1 Z" fill="#35471a" fill-rule="evenodd" stroke="#35471a" stroke-width="0.6"/><path d="M503.8 765.3 L503.5 793.7 L508.0 792.3 L508.3 763.9 Z" fill="#2f3f17" fill-rule="evenodd" stroke="#2f3f17" stroke-width="0.6"/><path d="M499.9 767.1 L499.6 795.5 L503.5 793.7 L503.8 765.3 Z" fill="#2a3814" fill-rule="evenodd" stroke="#2a3814" stroke-width="0.6"/><path d="M496.7 769.3 L496.4 797.8 L499.6 795.5 L499.9 767.1 Z" fill="#374b1b" fill-rule="evenodd" stroke="#374b1b" stroke-width="0.6"/><path d="M494.3 771.8 L494.1 800.3 L496.4 797.8 L496.7 769.3 Z" fill="#516e28" fill-rule="evenodd" stroke="#516e28" stroke-width="0.6"/><path d="M492.9 774.6 L492.7 803.1 L494.1 800.3 L494.3 771.8 Z" fill="#749c3c" fill-rule="evenodd" stroke="#749c3c" stroke-width="0.6"/><path d="M710.7 362.5 L710.7 363.2 L711.0 363.9 L711.3 364.2 L711.5 359.5 Z" fill="#2c3a15" fill-rule="evenodd" stroke="#2c3a15" stroke-width="0.6"/><path d="M596.3 790.3 L595.5 819.0 L596.6 814.5 L597.5 785.9 Z" fill="#86b447" fill-rule="evenodd" stroke="#86b447" stroke-width="0.6"/><path d="M649.6 785.8 L648.5 814.4 L648.5 814.6 L649.3 796.0 L649.3 796.0 L650.3 791.6 L650.5 788.7 Z" fill="#80aa42" fill-rule="evenodd" stroke="#80aa42" stroke-width="0.6"/><path d="M647.8 783.0 L646.6 811.6 L648.5 814.4 L649.6 785.8 Z" fill="#779f3c" fill-rule="evenodd" stroke="#779f3c" stroke-width="0.6"/><path d="M645.0 780.4 L643.9 809.0 L646.6 811.6 L647.8 783.0 Z" fill="#6d9236" fill-rule="evenodd" stroke="#6d9236" stroke-width="0.6"/><path d="M641.5 778.2 L640.4 806.7 L643.9 809.0 L645.0 780.4 Z" fill="#638530" fill-rule="evenodd" stroke="#638530" stroke-width="0.6"/><path d="M637.3 776.4 L636.2 804.9 L640.4 806.7 L641.5 778.2 Z" fill="#5b7b2c" fill-rule="evenodd" stroke="#5b7b2c" stroke-width="0.6"/><path d="M632.6 775.0 L631.5 803.5 L636.2 804.9 L637.3 776.4 Z" fill="#557329" fill-rule="evenodd" stroke="#557329" stroke-width="0.6"/><path d="M627.5 774.2 L626.5 802.7 L631.5 803.5 L632.6 775.0 Z" fill="#4e6a26" fill-rule="evenodd" stroke="#4e6a26" stroke-width="0.6"/><path d="M622.3 773.9 L621.4 802.4 L626.5 802.7 L627.5 774.2 Z" fill="#466022" fill-rule="evenodd" stroke="#466022" stroke-width="0.6"/><path d="M617.2 774.2 L616.3 802.7 L621.4 802.4 L622.3 773.9 Z" fill="#3e531e" fill-rule="evenodd" stroke="#3e531e" stroke-width="0.6"/><path d="M612.3 775.1 L611.4 803.6 L616.3 802.7 L617.2 774.2 Z" fill="#35471a" fill-rule="evenodd" stroke="#35471a" stroke-width="0.6"/><path d="M607.9 776.4 L607.0 805.0 L611.4 803.6 L612.3 775.1 Z" fill="#2f3f17" fill-rule="evenodd" stroke="#2f3f17" stroke-width="0.6"/><path d="M604.1 778.3 L603.2 806.8 L607.0 805.0 L607.9 776.4 Z" fill="#2a3814" fill-rule="evenodd" stroke="#2a3814" stroke-width="0.6"/><path d="M601.0 780.5 L600.1 809.1 L603.2 806.8 L604.1 778.3 Z" fill="#374b1b" fill-rule="evenodd" stroke="#374b1b" stroke-width="0.6"/><path d="M598.8 783.1 L597.9 811.7 L600.1 809.1 L601.0 780.5 Z" fill="#516e28" fill-rule="evenodd" stroke="#516e28" stroke-width="0.6"/><path d="M597.5 785.9 L596.6 814.5 L597.9 811.7 L598.8 783.1 Z" fill="#749c3c" fill-rule="evenodd" stroke="#749c3c" stroke-width="0.6"/><path d="M296.0 351.9 L295.9 351.8 L295.8 351.7 L295.7 351.6 L295.7 351.5 L295.6 351.4 L295.6 351.3 L295.7 351.2 L295.7 351.1 L295.8 351.0 L295.9 350.8 L295.8 347.3 L295.6 345.2 L294.4 343.3 L292.4 341.6 L289.5 340.0 L286.0 338.8 L281.8 337.8 L278.6 337.4 L277.3 337.3 L276.2 337.2 L276.9 358.1 L279.0 357.8 L279.2 357.8 L279.5 357.8 L279.7 357.8 L280.0 357.8 L280.2 357.8 L280.5 357.8 L280.7 357.8 L280.9 357.9 L281.1 357.9 L281.3 358.0 L281.5 358.1 L281.7 358.1 L281.8 358.2 L281.9 358.3 L281.9 358.3 L282.2 358.5 L282.4 358.7 L282.7 358.8 L283.0 359.0 L283.4 359.2 L283.7 359.3 L284.1 359.4 L284.5 359.6 L284.9 359.7 L285.3 359.8 L285.7 359.9 L286.2 360.0 L286.6 360.1 L287.1 360.2 L287.6 360.2 L288.1 360.3 L288.6 360.3 L289.1 360.4 L289.6 360.4 L290.1 360.4 L290.6 360.4 L291.1 360.4 L291.6 360.4 L292.1 360.4 L292.6 360.3 L293.1 360.3 L293.6 360.2 L294.1 360.2 L294.6 360.1 L295.1 360.0 L295.6 359.9 L296.0 359.8 L296.2 359.7 Z" fill="url(#pg1)" fill-rule="evenodd" /><path d="M787.9 378.9 L786.4 402.8 L787.6 402.9 L787.6 402.9 L789.1 379.0 Z" fill="#668a33" fill-rule="evenodd" stroke="#668a33" stroke-width="0.6"/><path d="M782.9 378.7 L781.5 402.1 L781.7 402.2 L782.0 400.3 L783.5 400.5 L784.7 400.6 L784.6 402.7 L786.4 402.8 L787.9 378.9 Z" fill="#618330" fill-rule="evenodd" stroke="#618330" stroke-width="0.6"/><path d="M778.1 379.0 L776.7 401.5 L777.3 401.6 L781.5 402.1 L782.9 378.7 Z" fill="#56742a" fill-rule="evenodd" stroke="#56742a" stroke-width="0.6"/><path d="M773.5 379.6 L772.2 400.5 L776.7 401.5 L778.1 379.0 Z" fill="#4b6524" fill-rule="evenodd" stroke="#4b6524" stroke-width="0.6"/><path d="M769.4 380.6 L768.2 399.4 L768.4 399.4 L768.7 399.4 L768.9 399.5 L769.2 399.5 L769.4 399.6 L771.8 400.4 L772.2 400.5 L773.5 379.6 Z" fill="#40551e" fill-rule="evenodd" stroke="#40551e" stroke-width="0.6"/><path d="M765.9 381.9 L764.8 399.9 L765.4 399.8 L765.9 399.6 L766.4 399.5 L766.6 399.5 L766.8 399.4 L767.1 399.4 L767.4 399.4 L767.6 399.4 L767.9 399.4 L768.2 399.4 L768.2 399.4 L769.4 380.6 Z" fill="#344619" fill-rule="evenodd" stroke="#344619" stroke-width="0.6"/><path d="M763.1 383.6 L762.1 400.2 L762.5 400.2 L763.1 400.1 L763.7 400.1 L764.2 400.0 L764.8 399.9 L764.8 399.9 L765.9 381.9 Z" fill="#2f3f17" fill-rule="evenodd" stroke="#2f3f17" stroke-width="0.6"/><path d="M761.2 385.5 L760.4 400.3 L760.6 400.3 L761.2 400.3 L761.8 400.2 L762.1 400.2 L763.1 383.6 Z" fill="#2e3d16" fill-rule="evenodd" stroke="#2e3d16" stroke-width="0.6"/><path d="M760.3 387.5 L759.5 400.3 L760.0 400.3 L760.4 400.3 L761.2 385.5 Z" fill="#2d3b15" fill-rule="evenodd" stroke="#2d3b15" stroke-width="0.6"/><path d="M277.7 383.2 L277.6 383.1 L277.5 383.0 L277.4 382.9 L277.3 382.8 L277.2 382.7 L277.2 382.6 L277.2 382.5 L277.3 382.4 L277.3 382.3 L277.4 382.2 L277.6 381.9 L277.5 378.2 L277.3 376.1 L276.1 374.1 L274.0 372.3 L271.1 370.7 L267.5 369.3 L263.3 368.4 L260.0 367.9 L258.7 367.8 L257.5 367.7 L258.4 389.5 L260.1 389.3 L260.3 389.3 L260.6 389.3 L260.8 389.3 L261.1 389.3 L261.3 389.3 L261.6 389.3 L261.8 389.3 L262.0 389.4 L262.3 389.4 L262.5 389.5 L262.6 389.6 L262.8 389.7 L263.0 389.7 L263.0 389.8 L263.0 389.8 L263.3 390.0 L263.6 390.2 L263.9 390.4 L264.2 390.6 L264.6 390.7 L264.9 390.9 L265.3 391.0 L265.7 391.2 L266.1 391.3 L266.5 391.4 L267.0 391.5 L267.4 391.6 L267.9 391.7 L268.4 391.8 L268.9 391.9 L269.4 391.9 L269.9 392.0 L270.4 392.0 L270.9 392.0 L271.4 392.1 L271.9 392.1 L272.5 392.1 L273.0 392.0 L273.5 392.0 L274.0 392.0 L274.5 391.9 L275.1 391.9 L275.6 391.8 L276.1 391.7 L276.5 391.6 L277.0 391.5 L277.5 391.4 L278.0 391.3 Z" fill="url(#pg2)" fill-rule="evenodd" /><path d="M781.2 411.5 L779.7 435.7 L780.9 435.8 L782.5 411.6 Z" fill="#668a33" fill-rule="evenodd" stroke="#668a33" stroke-width="0.6"/><path d="M779.7 411.4 L776.1 411.3 L774.6 435.5 L774.8 435.5 L775.1 433.9 L776.6 434.1 L777.8 434.2 L777.7 435.6 L779.7 435.7 L781.2 411.5 Z" fill="#618330" fill-rule="evenodd" stroke="#618330" stroke-width="0.6"/><path d="M771.1 411.5 L769.7 435.2 L770.2 435.3 L772.7 435.6 L774.6 435.5 L776.1 411.3 Z" fill="#56742a" fill-rule="evenodd" stroke="#56742a" stroke-width="0.6"/><path d="M766.5 412.2 L765.1 434.1 L769.7 435.2 L771.1 411.5 Z" fill="#4b6524" fill-rule="evenodd" stroke="#4b6524" stroke-width="0.6"/><path d="M762.2 413.2 L761.0 433.0 L761.1 433.0 L761.4 433.0 L761.7 433.1 L761.9 433.1 L762.2 433.2 L764.6 434.0 L765.1 434.1 L766.5 412.2 Z" fill="#40551e" fill-rule="evenodd" stroke="#40551e" stroke-width="0.6"/><path d="M758.6 414.6 L757.5 433.5 L758.0 433.4 L758.5 433.2 L759.0 433.1 L759.3 433.0 L759.5 433.0 L759.8 433.0 L760.0 432.9 L760.3 432.9 L760.6 432.9 L760.9 432.9 L761.0 433.0 L762.2 413.2 Z" fill="#344619" fill-rule="evenodd" stroke="#344619" stroke-width="0.6"/><path d="M755.8 416.4 L754.8 433.8 L755.0 433.8 L755.6 433.7 L756.2 433.7 L756.8 433.6 L757.4 433.5 L757.5 433.5 L758.6 414.6 Z" fill="#2f3f17" fill-rule="evenodd" stroke="#2f3f17" stroke-width="0.6"/><path d="M753.9 418.4 L753.0 433.9 L753.1 433.9 L753.8 433.9 L754.4 433.9 L754.8 433.8 L755.8 416.4 Z" fill="#2e3d16" fill-rule="evenodd" stroke="#2e3d16" stroke-width="0.6"/><path d="M752.9 420.5 L752.1 433.9 L752.5 433.9 L753.0 433.9 L753.9 418.4 Z" fill="#2d3b15" fill-rule="evenodd" stroke="#2d3b15" stroke-width="0.6"/><path d="M258.5 416.0 L258.4 416.0 L258.3 415.9 L258.1 415.8 L258.0 415.7 L258.0 415.6 L257.9 415.5 L257.9 415.4 L257.9 415.2 L257.9 415.1 L258.0 415.0 L258.1 414.9 L258.4 414.5 L258.2 410.8 L258.1 408.5 L256.9 406.4 L254.8 404.5 L251.8 402.8 L248.1 401.4 L243.9 400.4 L240.5 399.9 L239.1 399.8 L238.0 399.7 L239.0 422.5 L240.2 422.4 L240.5 422.3 L240.7 422.3 L241.0 422.3 L241.3 422.3 L241.5 422.3 L241.8 422.4 L242.0 422.4 L242.3 422.5 L242.5 422.5 L242.7 422.6 L242.9 422.7 L243.0 422.7 L243.2 422.8 L243.3 422.9 L243.3 422.9 L243.6 423.1 L243.8 423.3 L244.1 423.5 L244.5 423.7 L244.8 423.9 L245.2 424.0 L245.6 424.2 L246.0 424.3 L246.4 424.5 L246.8 424.6 L247.3 424.7 L247.7 424.8 L248.2 424.9 L248.7 425.0 L249.2 425.1 L249.7 425.1 L250.2 425.2 L250.7 425.2 L251.3 425.2 L251.8 425.3 L252.3 425.3 L252.9 425.3 L253.4 425.2 L254.0 425.2 L254.5 425.2 L255.0 425.1 L255.5 425.0 L256.1 425.0 L256.6 424.9 L257.1 424.8 L257.6 424.7 L258.1 424.6 L258.5 424.4 L258.8 424.4 Z" fill="url(#pg3)" fill-rule="evenodd" /><path d="M774.2 445.7 L772.7 470.4 L773.9 470.5 L775.5 445.8 Z" fill="#668a33" fill-rule="evenodd" stroke="#668a33" stroke-width="0.6"/><path d="M772.7 445.6 L769.0 445.5 L767.5 470.1 L767.6 470.1 L767.8 469.3 L769.3 469.5 L770.6 469.6 L770.5 470.3 L772.7 470.4 L774.2 445.7 Z" fill="#618330" fill-rule="evenodd" stroke="#618330" stroke-width="0.6"/><path d="M763.9 445.7 L762.4 470.4 L767.5 470.1 L769.0 445.5 Z" fill="#56742a" fill-rule="evenodd" stroke="#56742a" stroke-width="0.6"/><path d="M759.0 446.4 L757.7 469.5 L761.8 470.5 L762.4 470.4 L763.9 445.7 Z" fill="#4b6524" fill-rule="evenodd" stroke="#4b6524" stroke-width="0.6"/><path d="M754.7 447.5 L753.5 468.3 L753.8 468.3 L754.0 468.4 L754.3 468.4 L754.5 468.5 L757.1 469.4 L757.7 469.5 L759.0 446.4 Z" fill="#40551e" fill-rule="evenodd" stroke="#40551e" stroke-width="0.6"/><path d="M751.0 449.0 L749.9 468.8 L750.2 468.7 L750.8 468.5 L751.3 468.4 L751.6 468.3 L751.8 468.3 L752.1 468.3 L752.3 468.2 L752.6 468.2 L752.9 468.2 L753.2 468.2 L753.5 468.3 L753.5 468.3 L754.7 447.5 Z" fill="#344619" fill-rule="evenodd" stroke="#344619" stroke-width="0.6"/><path d="M748.1 450.8 L747.1 469.2 L747.2 469.2 L747.8 469.1 L748.5 469.0 L749.1 468.9 L749.7 468.8 L749.9 468.8 L751.0 449.0 Z" fill="#2f3f17" fill-rule="evenodd" stroke="#2f3f17" stroke-width="0.6"/><path d="M746.1 452.9 L745.2 469.3 L745.2 469.3 L745.9 469.2 L746.6 469.2 L747.1 469.2 L748.1 450.8 Z" fill="#2e3d16" fill-rule="evenodd" stroke="#2e3d16" stroke-width="0.6"/><path d="M745.1 455.2 L744.3 469.3 L744.6 469.3 L745.2 469.3 L746.1 452.9 Z" fill="#2d3b15" fill-rule="evenodd" stroke="#2d3b15" stroke-width="0.6"/><path d="M224.6 458.6 L228.9 459.6 L230.1 460.1 L230.7 460.1 L231.2 460.2 L231.8 460.2 L232.3 460.2 L232.9 460.1 L233.4 460.1 L234.0 460.1 L234.5 460.0 L235.0 459.9 L235.6 459.9 L236.1 459.8 L236.6 459.7 L237.1 459.5 L237.6 459.4 L238.1 459.3 L238.6 459.1 L238.7 459.1 L238.3 450.5 L238.3 450.5 L238.1 450.4 L238.0 450.3 L237.8 450.2 L237.8 450.1 L237.7 450.0 L237.6 449.9 L237.6 449.7 L237.6 449.6 L237.7 449.5 L237.7 449.4 L237.8 449.3 L238.2 448.8 L238.0 444.9 L237.9 442.6 L236.7 440.4 L234.6 438.3 L231.6 436.5 L227.8 435.1 L223.4 434.0 L218.6 433.4 L217.4 433.3 L218.6 457.2 L219.4 457.1 L219.6 457.1 L219.9 457.1 L220.2 457.1 L220.4 457.1 L220.7 457.1 L221.0 457.1 L221.2 457.2 L221.5 457.2 L221.7 457.3 L221.9 457.3 L222.1 457.4 L222.2 457.5 L222.4 457.6 L222.5 457.7 L222.5 457.7 L222.8 457.9 L223.1 458.1 L223.4 458.3 L223.5 458.4 Z" fill="url(#pg4)" fill-rule="evenodd" /><path d="M766.8 481.6 L765.3 506.8 L766.5 506.9 L768.1 481.7 Z" fill="#668a33" fill-rule="evenodd" stroke="#668a33" stroke-width="0.6"/><path d="M761.4 481.4 L759.9 506.5 L760.1 506.5 L760.1 506.5 L760.7 506.6 L765.3 506.8 L766.8 481.6 Z" fill="#618330" fill-rule="evenodd" stroke="#618330" stroke-width="0.6"/><path d="M756.2 481.7 L754.7 506.8 L759.9 506.5 L761.4 481.4 Z" fill="#56742a" fill-rule="evenodd" stroke="#56742a" stroke-width="0.6"/><path d="M751.2 482.4 L749.8 506.8 L751.8 507.2 L754.7 506.8 L756.2 481.7 Z" fill="#4b6524" fill-rule="evenodd" stroke="#4b6524" stroke-width="0.6"/><path d="M746.8 483.5 L745.5 505.4 L745.7 505.5 L746.0 505.5 L746.2 505.6 L746.5 505.7 L749.1 506.6 L749.8 506.8 L751.2 482.4 Z" fill="#40551e" fill-rule="evenodd" stroke="#40551e" stroke-width="0.6"/><path d="M743.0 485.1 L741.8 505.9 L742.1 505.8 L742.7 505.7 L743.2 505.6 L743.4 505.5 L743.7 505.4 L744.0 505.4 L744.3 505.4 L744.5 505.4 L744.8 505.4 L745.1 505.4 L745.4 505.4 L745.5 505.4 L746.8 483.5 Z" fill="#344619" fill-rule="evenodd" stroke="#344619" stroke-width="0.6"/><path d="M740.0 487.0 L738.9 506.4 L739.0 506.4 L739.6 506.3 L740.3 506.2 L740.9 506.1 L741.5 506.0 L741.8 505.9 L743.0 485.1 Z" fill="#2f3f17" fill-rule="evenodd" stroke="#2f3f17" stroke-width="0.6"/><path d="M737.9 489.2 L737.0 506.5 L737.6 506.5 L738.3 506.4 L738.9 506.4 L740.0 487.0 Z" fill="#2e3d16" fill-rule="evenodd" stroke="#2e3d16" stroke-width="0.6"/><path d="M736.9 491.6 L736.0 506.5 L736.3 506.5 L737.0 506.5 L737.0 506.5 L737.9 489.2 Z" fill="#2d3b15" fill-rule="evenodd" stroke="#2d3b15" stroke-width="0.6"/><path d="M203.3 494.4 L207.7 495.5 L211.1 496.9 L211.2 496.9 L211.8 496.8 L212.3 496.8 L212.9 496.7 L213.5 496.6 L214.0 496.6 L214.6 496.5 L215.1 496.4 L215.6 496.2 L216.1 496.1 L216.6 496.0 L217.1 495.8 L217.5 495.7 L217.1 486.8 L216.9 486.7 L216.8 486.6 L216.6 486.5 L216.5 486.4 L216.4 486.3 L216.3 486.2 L216.3 486.0 L216.3 485.9 L216.3 485.8 L216.3 485.7 L216.4 485.5 L216.5 485.4 L217.0 484.8 L216.8 480.8 L216.6 478.4 L215.5 476.0 L213.3 473.9 L210.3 472.0 L206.4 470.5 L202.0 469.4 L197.0 468.7 L195.8 468.6 L197.1 493.5 L198.1 493.6 L198.3 493.6 L198.5 493.6 L198.8 493.7 L199.1 493.7 L199.3 493.7 L199.6 493.8 L199.8 493.8 L199.9 493.9 Z" fill="url(#pg5)" fill-rule="evenodd" /><path d="M759.0 519.5 L757.5 545.1 L758.8 545.2 L760.3 519.6 Z" fill="#668a33" fill-rule="evenodd" stroke="#668a33" stroke-width="0.6"/><path d="M757.4 519.4 L753.5 519.3 L752.0 544.9 L757.5 545.1 L759.0 519.5 Z" fill="#618330" fill-rule="evenodd" stroke="#618330" stroke-width="0.6"/><path d="M748.1 519.5 L746.6 545.1 L752.0 544.9 L753.5 519.3 Z" fill="#56742a" fill-rule="evenodd" stroke="#56742a" stroke-width="0.6"/><path d="M743.0 520.3 L741.6 545.9 L746.6 545.1 L748.1 519.5 Z" fill="#4b6524" fill-rule="evenodd" stroke="#4b6524" stroke-width="0.6"/><path d="M738.5 521.5 L737.2 544.6 L737.2 544.6 L737.5 544.7 L737.8 544.8 L738.0 544.9 L740.7 545.8 L741.3 546.0 L741.6 545.9 L743.0 520.3 Z" fill="#40551e" fill-rule="evenodd" stroke="#40551e" stroke-width="0.6"/><path d="M734.6 523.2 L733.3 545.1 L733.5 545.0 L734.1 544.9 L734.6 544.7 L734.9 544.7 L735.2 544.6 L735.4 544.6 L735.7 544.5 L736.0 544.5 L736.3 544.5 L736.6 544.6 L736.9 544.6 L737.2 544.6 L738.5 521.5 Z" fill="#344619" fill-rule="evenodd" stroke="#344619" stroke-width="0.6"/><path d="M731.5 525.2 L730.4 545.6 L731.0 545.5 L731.6 545.4 L732.3 545.3 L732.9 545.2 L733.3 545.1 L734.6 523.2 Z" fill="#2f3f17" fill-rule="evenodd" stroke="#2f3f17" stroke-width="0.6"/><path d="M729.3 527.5 L728.3 545.7 L728.9 545.7 L729.6 545.6 L730.3 545.6 L730.4 545.6 L731.5 525.2 Z" fill="#2e3d16" fill-rule="evenodd" stroke="#2e3d16" stroke-width="0.6"/><path d="M728.2 530.0 L727.4 545.7 L727.5 545.7 L728.2 545.7 L728.3 545.7 L729.3 527.5 Z" fill="#2d3b15" fill-rule="evenodd" stroke="#2d3b15" stroke-width="0.6"/><path d="M175.8 531.3 L180.8 532.0 L185.4 533.2 L189.3 534.9 L190.1 535.4 L190.2 535.4 L190.7 535.3 L191.3 535.2 L191.9 535.1 L192.4 535.0 L192.9 534.9 L193.5 534.8 L194.0 534.6 L194.5 534.5 L195.0 534.3 L195.3 534.2 L194.8 525.0 L194.6 524.9 L194.4 524.9 L194.3 524.8 L194.1 524.6 L194.0 524.5 L193.9 524.4 L193.8 524.3 L193.8 524.1 L193.8 524.0 L193.8 523.9 L193.8 523.7 L193.9 523.6 L194.0 523.5 L194.6 522.7 L194.3 516.1 L193.1 513.6 L191.0 511.4 L187.9 509.4 L183.9 507.8 L179.4 506.6 L175.8 506.1 L174.3 505.9 L173.1 505.7 L174.5 531.2 Z" fill="url(#pg6)" fill-rule="evenodd" /><path d="M750.8 559.4 L749.3 585.5 L750.6 585.7 L752.2 559.6 Z" fill="#668a33" fill-rule="evenodd" stroke="#668a33" stroke-width="0.6"/><path d="M749.1 559.4 L745.1 559.2 L743.6 585.3 L749.3 585.5 L750.8 559.4 Z" fill="#618330" fill-rule="evenodd" stroke="#618330" stroke-width="0.6"/><path d="M739.6 559.5 L738.1 585.6 L743.6 585.3 L745.1 559.2 Z" fill="#56742a" fill-rule="evenodd" stroke="#56742a" stroke-width="0.6"/><path d="M734.4 560.3 L732.9 586.4 L738.1 585.6 L739.6 559.5 Z" fill="#4b6524" fill-rule="evenodd" stroke="#4b6524" stroke-width="0.6"/><path d="M729.7 561.6 L728.3 586.0 L728.5 586.0 L728.8 586.1 L729.1 586.2 L731.0 586.9 L732.9 586.4 L734.4 560.3 Z" fill="#40551e" fill-rule="evenodd" stroke="#40551e" stroke-width="0.6"/><path d="M725.7 563.3 L724.4 586.4 L724.4 586.4 L725.0 586.2 L725.6 586.1 L725.9 586.0 L726.1 585.9 L726.4 585.9 L726.7 585.9 L727.0 585.9 L727.3 585.9 L727.6 585.9 L727.9 585.9 L728.2 586.0 L728.3 586.0 L729.7 561.6 Z" fill="#344619" fill-rule="evenodd" stroke="#344619" stroke-width="0.6"/><path d="M722.5 565.5 L721.3 586.9 L721.8 586.9 L722.5 586.8 L723.1 586.7 L723.8 586.5 L724.4 586.4 L725.7 563.3 Z" fill="#2f3f17" fill-rule="evenodd" stroke="#2f3f17" stroke-width="0.6"/><path d="M720.2 567.9 L719.2 587.1 L719.7 587.1 L720.4 587.0 L721.1 587.0 L721.3 586.9 L722.5 565.5 Z" fill="#2e3d16" fill-rule="evenodd" stroke="#2e3d16" stroke-width="0.6"/><path d="M719.1 570.6 L718.2 587.1 L718.3 587.1 L719.0 587.1 L719.2 587.1 L720.2 567.9 Z" fill="#2d3b15" fill-rule="evenodd" stroke="#2d3b15" stroke-width="0.6"/><path d="M152.0 571.0 L157.2 571.7 L161.8 573.0 L165.8 574.7 L167.7 576.0 L167.9 575.9 L168.5 575.8 L169.0 575.7 L169.6 575.5 L170.1 575.4 L170.6 575.2 L171.1 575.0 L171.6 574.8 L171.8 574.8 L171.3 565.3 L171.1 565.3 L170.9 565.2 L170.7 565.1 L170.6 565.0 L170.4 564.9 L170.3 564.7 L170.2 564.6 L170.1 564.5 L170.1 564.3 L170.1 564.2 L170.1 564.1 L170.1 563.9 L170.2 563.8 L170.3 563.6 L171.1 562.6 L170.7 555.8 L169.6 553.2 L167.4 550.8 L164.2 548.8 L160.2 547.1 L155.6 545.8 L151.9 545.3 L150.4 545.0 L149.1 544.9 L150.7 570.8 Z" fill="url(#pg7)" fill-rule="evenodd" /><path d="M742.1 601.6 L740.6 628.2 L742.0 628.4 L743.5 601.8 Z" fill="#668a33" fill-rule="evenodd" stroke="#668a33" stroke-width="0.6"/><path d="M736.3 601.3 L734.8 627.9 L740.6 628.2 L742.1 601.6 Z" fill="#618330" fill-rule="evenodd" stroke="#618330" stroke-width="0.6"/><path d="M730.6 601.6 L729.1 628.2 L734.8 627.9 L736.3 601.3 Z" fill="#56742a" fill-rule="evenodd" stroke="#56742a" stroke-width="0.6"/><path d="M725.2 602.5 L723.8 629.1 L729.1 628.2 L730.6 601.6 Z" fill="#4b6524" fill-rule="evenodd" stroke="#4b6524" stroke-width="0.6"/><path d="M720.4 603.9 L719.0 629.7 L719.1 629.8 L719.3 629.8 L719.6 629.9 L720.2 630.1 L723.8 629.1 L725.2 602.5 Z" fill="#40551e" fill-rule="evenodd" stroke="#40551e" stroke-width="0.6"/><path d="M716.2 605.7 L715.0 630.1 L715.5 630.0 L716.0 629.8 L716.3 629.7 L716.6 629.6 L716.9 629.6 L717.2 629.6 L717.5 629.6 L717.8 629.6 L718.1 629.6 L718.5 629.6 L718.8 629.7 L719.0 629.7 L720.4 603.9 Z" fill="#344619" fill-rule="evenodd" stroke="#344619" stroke-width="0.6"/><path d="M713.0 608.0 L711.8 630.7 L712.1 630.6 L712.8 630.5 L713.5 630.4 L714.2 630.3 L714.8 630.1 L715.0 630.1 L716.2 605.7 Z" fill="#2f3f17" fill-rule="evenodd" stroke="#2f3f17" stroke-width="0.6"/><path d="M710.7 610.6 L709.6 630.9 L710.0 630.8 L710.7 630.8 L711.4 630.7 L711.8 630.7 L713.0 608.0 Z" fill="#2e3d16" fill-rule="evenodd" stroke="#2e3d16" stroke-width="0.6"/><path d="M709.4 613.4 L708.6 630.9 L709.3 630.9 L709.6 630.9 L710.7 610.6 Z" fill="#2d3b15" fill-rule="evenodd" stroke="#2d3b15" stroke-width="0.6"/><path d="M126.9 612.8 L132.2 613.6 L137.0 615.0 L141.0 616.8 L143.8 618.8 L144.3 618.7 L144.9 618.5 L145.4 618.3 L145.9 618.1 L146.4 617.9 L146.9 617.7 L147.1 617.6 L146.5 607.9 L146.4 607.9 L146.3 607.9 L146.1 607.8 L145.9 607.7 L145.7 607.6 L145.5 607.5 L145.4 607.4 L145.2 607.2 L145.1 607.1 L145.1 606.9 L145.0 606.8 L145.0 606.7 L145.0 606.5 L145.1 606.4 L145.1 606.2 L145.2 606.1 L146.3 604.8 L145.8 597.8 L144.7 595.1 L142.5 592.5 L139.3 590.3 L135.2 588.5 L130.4 587.2 L126.7 586.6 L126.7 586.6 L125.1 586.4 L123.8 586.3 L125.6 612.7 Z" fill="url(#pg8)" fill-rule="evenodd" /><path d="M732.9 646.2 L731.4 673.3 L732.9 673.5 L734.4 646.4 Z" fill="#668a33" fill-rule="evenodd" stroke="#668a33" stroke-width="0.6"/><path d="M727.0 645.9 L725.5 673.1 L731.4 673.3 L732.9 646.2 Z" fill="#618330" fill-rule="evenodd" stroke="#618330" stroke-width="0.6"/><path d="M721.1 646.3 L719.7 673.4 L725.5 673.1 L727.0 645.9 Z" fill="#56742a" fill-rule="evenodd" stroke="#56742a" stroke-width="0.6"/><path d="M715.6 647.2 L714.1 674.3 L719.7 673.4 L721.1 646.3 Z" fill="#4b6524" fill-rule="evenodd" stroke="#4b6524" stroke-width="0.6"/><path d="M710.6 648.6 L709.2 675.8 L714.1 674.3 L715.6 647.2 Z" fill="#40551e" fill-rule="evenodd" stroke="#40551e" stroke-width="0.6"/><path d="M706.3 650.6 L705.0 676.3 L705.3 676.2 L705.9 676.1 L706.2 676.0 L706.5 675.9 L706.8 675.9 L707.1 675.8 L707.4 675.8 L707.8 675.8 L708.1 675.9 L708.4 675.9 L708.7 676.0 L708.7 676.0 L709.2 675.8 L710.6 648.6 Z" fill="#344619" fill-rule="evenodd" stroke="#344619" stroke-width="0.6"/><path d="M702.9 653.0 L701.7 677.0 L701.9 677.0 L702.6 676.9 L703.3 676.7 L704.0 676.6 L704.7 676.4 L705.0 676.3 L706.3 650.6 Z" fill="#2f3f17" fill-rule="evenodd" stroke="#2f3f17" stroke-width="0.6"/><path d="M700.5 655.7 L699.4 677.2 L699.7 677.2 L700.4 677.1 L701.2 677.1 L701.7 677.0 L702.9 653.0 Z" fill="#2e3d16" fill-rule="evenodd" stroke="#2e3d16" stroke-width="0.6"/><path d="M699.3 658.7 L698.3 677.2 L698.9 677.2 L699.4 677.2 L700.5 655.7 Z" fill="#2d3b15" fill-rule="evenodd" stroke="#2d3b15" stroke-width="0.6"/><path d="M100.4 657.1 L105.8 657.9 L110.7 659.3 L114.8 661.3 L118.1 663.6 L118.4 664.0 L118.7 663.9 L119.2 663.7 L119.8 663.5 L120.3 663.3 L120.7 663.0 L121.0 662.9 L120.3 653.0 L119.9 652.9 L119.9 652.8 L119.6 652.8 L119.4 652.7 L119.2 652.6 L119.0 652.4 L118.9 652.3 L118.7 652.2 L118.6 652.0 L118.6 651.9 L118.5 651.7 L118.5 651.6 L118.5 651.4 L118.6 651.2 L118.7 651.1 L118.8 650.9 L120.0 649.4 L119.5 642.2 L118.4 639.3 L116.1 636.6 L112.9 634.3 L108.7 632.4 L103.8 631.0 L100.0 630.4 L100.0 630.4 L98.4 630.1 L97.0 630.0 L99.0 656.9 Z" fill="url(#pg9)" fill-rule="evenodd" /><path d="M723.2 693.5 L721.7 721.1 L723.2 721.3 L724.7 693.7 Z" fill="#668a33" fill-rule="evenodd" stroke="#668a33" stroke-width="0.6"/><path d="M721.4 693.4 L717.1 693.2 L715.6 720.8 L721.7 721.1 L723.2 693.5 Z" fill="#618330" fill-rule="evenodd" stroke="#618330" stroke-width="0.6"/><path d="M711.0 693.5 L709.6 721.2 L715.6 720.8 L717.1 693.2 Z" fill="#56742a" fill-rule="evenodd" stroke="#56742a" stroke-width="0.6"/><path d="M705.3 694.5 L703.9 722.1 L709.6 721.2 L711.0 693.5 Z" fill="#4b6524" fill-rule="evenodd" stroke="#4b6524" stroke-width="0.6"/><path d="M700.2 696.0 L698.8 723.7 L703.9 722.1 L705.3 694.5 Z" fill="#40551e" fill-rule="evenodd" stroke="#40551e" stroke-width="0.6"/><path d="M695.8 698.1 L694.4 725.4 L694.6 725.3 L695.2 725.1 L695.5 725.1 L695.8 725.0 L696.1 724.9 L696.2 724.9 L698.8 723.7 L700.2 696.0 Z" fill="#344619" fill-rule="evenodd" stroke="#344619" stroke-width="0.6"/><path d="M692.2 700.6 L691.0 726.1 L691.0 726.1 L691.8 726.0 L692.5 725.9 L693.2 725.7 L693.9 725.5 L694.4 725.4 L695.8 698.1 Z" fill="#2f3f17" fill-rule="evenodd" stroke="#2f3f17" stroke-width="0.6"/><path d="M689.8 703.5 L688.7 726.3 L688.8 726.3 L689.5 726.3 L690.3 726.2 L691.0 726.1 L692.2 700.6 Z" fill="#2e3d16" fill-rule="evenodd" stroke="#2e3d16" stroke-width="0.6"/><path d="M688.4 706.7 L687.5 726.4 L688.0 726.4 L688.7 726.3 L689.8 703.5 Z" fill="#2d3b15" fill-rule="evenodd" stroke="#2d3b15" stroke-width="0.6"/><path d="M72.3 703.9 L77.9 704.8 L82.9 706.3 L87.1 708.3 L90.4 710.8 L91.2 711.9 L91.5 711.8 L92.0 711.6 L92.5 711.3 L93.0 711.0 L93.3 710.9 L92.5 700.8 L92.3 700.7 L91.8 700.5 L91.8 700.5 L91.5 700.4 L91.3 700.3 L91.1 700.2 L90.9 700.1 L90.8 699.9 L90.6 699.8 L90.5 699.6 L90.5 699.5 L90.4 699.3 L90.4 699.2 L90.4 699.0 L90.5 698.8 L90.6 698.7 L90.7 698.5 L92.2 696.6 L91.6 689.2 L90.5 686.1 L88.3 683.3 L85.0 680.8 L80.7 678.8 L75.7 677.3 L70.1 676.4 L68.7 676.3 L70.9 703.7 Z" fill="url(#pg10)" fill-rule="evenodd" /><path d="M712.9 743.7 L711.4 771.8 L712.9 772.0 L714.4 743.8 Z" fill="#668a33" fill-rule="evenodd" stroke="#668a33" stroke-width="0.6"/><path d="M706.6 743.3 L705.1 771.5 L711.4 771.8 L712.9 743.7 Z" fill="#618330" fill-rule="evenodd" stroke="#618330" stroke-width="0.6"/><path d="M700.4 743.7 L698.9 771.9 L705.1 771.5 L706.6 743.3 Z" fill="#56742a" fill-rule="evenodd" stroke="#56742a" stroke-width="0.6"/><path d="M694.5 744.7 L693.1 772.9 L698.9 771.9 L700.4 743.7 Z" fill="#4b6524" fill-rule="evenodd" stroke="#4b6524" stroke-width="0.6"/><path d="M689.1 746.4 L687.8 774.6 L693.1 772.9 L694.5 744.7 Z" fill="#40551e" fill-rule="evenodd" stroke="#40551e" stroke-width="0.6"/><path d="M684.6 748.6 L683.2 776.8 L687.8 774.6 L689.1 746.4 Z" fill="#344619" fill-rule="evenodd" stroke="#344619" stroke-width="0.6"/><path d="M680.9 751.3 L679.7 778.3 L680.3 778.2 L681.0 778.1 L681.8 777.9 L683.2 776.8 L684.6 748.6 Z" fill="#2f3f17" fill-rule="evenodd" stroke="#2f3f17" stroke-width="0.6"/><path d="M678.4 754.3 L677.2 778.6 L677.9 778.5 L678.7 778.4 L679.5 778.3 L679.7 778.3 L680.9 751.3 Z" fill="#2e3d16" fill-rule="evenodd" stroke="#2e3d16" stroke-width="0.6"/><path d="M677.0 757.7 L676.0 778.6 L676.3 778.6 L677.2 778.6 L677.2 778.6 L678.4 754.3 Z" fill="#2d3b15" fill-rule="evenodd" stroke="#2d3b15" stroke-width="0.6"/><path d="M38.5 757.7 L87.6 763.1 L85.4 735.0 L36.0 729.6 Z" fill="#9bc953" fill-rule="evenodd" /><path d="M136.9 768.5 L186.6 774.0 L184.9 745.8 L135.0 740.4 Z" fill="#9bc953" fill-rule="evenodd" /><path d="M236.5 779.5 L286.8 785.0 L285.8 756.7 L235.2 751.2 Z" fill="#9bc953" fill-rule="evenodd" /><path d="M337.4 790.6 L388.4 796.2 L387.9 767.7 L336.7 762.2 Z" fill="#9bc953" fill-rule="evenodd" /><path d="M439.6 801.8 L491.3 807.5 L491.4 778.9 L439.5 773.3 Z" fill="#9bc953" fill-rule="evenodd" /><path d="M543.2 813.2 L595.5 819.0 L596.3 790.3 L543.7 784.6 Z" fill="#9bc953" fill-rule="evenodd" /><path d="M648.1 824.8 L701.1 830.6 L702.6 801.8 L649.3 796.0 Z" fill="#9bc953" fill-rule="evenodd" /><path d="M89.5 720.9 L86.9 721.1 L84.2 721.4 L81.6 721.9 L79.2 722.5 L76.8 723.4 L74.7 724.3 L72.8 725.5 L71.2 726.7 L69.8 728.0 L68.8 729.4 L89.2 754.4 L106.1 733.4 L106.7 732.0 L107.0 730.6 L106.9 729.1 L106.4 727.8 L105.6 726.5 L104.5 725.2 L103.0 724.1 L101.3 723.2 L99.3 722.4 L97.0 721.7 L94.6 721.3 L92.1 721.0 Z" fill="url(#fan1)" fill-rule="evenodd" /><path d="M138.7 726.2 L136.1 726.3 L133.4 726.6 L130.9 727.1 L128.4 727.8 L126.1 728.7 L124.0 729.6 L122.1 730.8 L120.5 732.0 L119.2 733.3 L118.2 734.7 L138.5 759.8 L155.7 738.8 L156.3 737.3 L156.5 735.9 L156.4 734.5 L155.9 733.1 L155.0 731.8 L153.9 730.6 L152.4 729.5 L150.6 728.5 L148.6 727.7 L146.3 727.0 L143.9 726.6 L141.4 726.3 Z" fill="url(#fan2)" fill-rule="evenodd" /><path d="M188.3 731.5 L185.6 731.7 L183.0 732.0 L180.4 732.5 L177.9 733.1 L175.7 734.0 L173.6 735.0 L171.7 736.1 L170.2 737.4 L168.9 738.7 L168.0 740.1 L188.1 765.3 L205.7 744.2 L206.2 742.7 L206.4 741.3 L206.2 739.8 L205.7 738.4 L204.8 737.1 L203.6 735.9 L202.0 734.8 L200.2 733.8 L198.2 733.0 L195.9 732.4 L193.5 731.9 L190.9 731.6 Z" fill="url(#fan3)" fill-rule="evenodd" /><path d="M238.1 736.9 L235.4 737.0 L232.8 737.3 L230.2 737.8 L227.8 738.5 L225.5 739.4 L223.5 740.4 L221.7 741.5 L220.1 742.8 L218.9 744.1 L218.0 745.5 L238.0 770.7 L256.0 749.6 L256.5 748.2 L256.6 746.7 L256.4 745.2 L255.8 743.8 L254.9 742.5 L253.6 741.3 L252.0 740.2 L250.2 739.2 L248.1 738.4 L245.8 737.7 L243.3 737.2 L240.8 737.0 Z" fill="url(#fan4)" fill-rule="evenodd" /><path d="M288.3 742.3 L285.6 742.4 L283.0 742.7 L280.4 743.2 L278.0 743.9 L275.7 744.8 L273.7 745.8 L271.9 746.9 L270.4 748.2 L269.2 749.5 L268.4 751.0 L288.3 776.2 L306.6 755.1 L307.0 753.6 L307.1 752.1 L306.9 750.7 L306.2 749.3 L305.3 747.9 L303.9 746.7 L302.3 745.6 L300.5 744.6 L298.3 743.8 L296.0 743.1 L293.5 742.6 L290.9 742.4 Z" fill="url(#fan5)" fill-rule="evenodd" /><path d="M338.8 747.7 L336.1 747.8 L333.5 748.1 L330.9 748.6 L328.5 749.3 L326.3 750.2 L324.2 751.2 L322.5 752.4 L321.0 753.6 L319.9 755.0 L319.1 756.4 L338.9 781.8 L357.5 760.6 L357.9 759.1 L358.0 757.6 L357.7 756.2 L357.0 754.7 L356.0 753.4 L354.6 752.1 L353.0 751.0 L351.1 750.0 L348.9 749.2 L346.6 748.5 L344.0 748.1 L341.4 747.8 Z" fill="url(#fan6)" fill-rule="evenodd" /><path d="M389.6 753.1 L386.9 753.3 L384.3 753.6 L381.7 754.1 L379.3 754.8 L377.1 755.7 L375.1 756.7 L373.4 757.9 L372.0 759.1 L370.8 760.5 L370.1 761.9 L389.7 787.3 L408.8 766.1 L409.1 764.6 L409.2 763.1 L408.8 761.7 L408.1 760.2 L407.0 758.9 L405.6 757.6 L403.9 756.5 L402.0 755.5 L399.8 754.6 L397.4 754.0 L394.9 753.5 L392.3 753.2 Z" fill="url(#fan7)" fill-rule="evenodd" /><path d="M440.7 758.6 L438.1 758.8 L435.4 759.1 L432.9 759.6 L430.5 760.3 L428.3 761.2 L426.3 762.2 L424.6 763.4 L423.2 764.7 L422.2 766.0 L421.4 767.5 L441.0 792.9 L460.4 771.7 L460.7 770.2 L460.7 768.7 L460.3 767.2 L459.5 765.8 L458.4 764.4 L457.0 763.1 L455.2 762.0 L453.2 761.0 L451.0 760.1 L448.6 759.5 L446.1 759.0 L443.4 758.7 Z" fill="url(#fan8)" fill-rule="evenodd" /><path d="M492.2 764.2 L489.5 764.3 L486.9 764.6 L484.4 765.1 L482.0 765.8 L479.8 766.7 L477.9 767.7 L476.2 768.9 L474.8 770.2 L473.8 771.6 L473.1 773.1 L492.5 798.6 L512.3 777.3 L512.6 775.8 L512.5 774.3 L512.1 772.8 L511.3 771.3 L510.1 770.0 L508.6 768.7 L506.9 767.5 L504.8 766.5 L502.6 765.7 L500.1 765.0 L497.6 764.5 L494.9 764.2 Z" fill="url(#fan9)" fill-rule="evenodd" /><path d="M544.0 769.7 L541.3 769.8 L538.7 770.2 L536.2 770.7 L533.8 771.4 L531.7 772.3 L529.7 773.3 L528.1 774.5 L526.8 775.8 L525.8 777.2 L525.1 778.7 L544.4 804.3 L564.6 783.0 L564.8 781.4 L564.7 779.9 L564.2 778.4 L563.3 777.0 L562.1 775.6 L560.6 774.3 L558.8 773.1 L556.8 772.1 L554.5 771.3 L552.0 770.6 L549.4 770.1 L546.7 769.8 Z" fill="url(#fan10)" fill-rule="evenodd" /><path d="M596.2 775.3 L593.5 775.4 L590.9 775.8 L588.3 776.3 L586.0 777.0 L583.9 777.9 L582.0 779.0 L580.4 780.1 L579.1 781.5 L578.1 782.9 L577.5 784.3 L596.6 810.0 L617.2 788.6 L617.4 787.1 L617.2 785.6 L616.7 784.1 L615.8 782.6 L614.5 781.2 L613.0 779.9 L611.1 778.7 L609.0 777.7 L606.7 776.9 L604.2 776.2 L601.6 775.7 L598.9 775.4 Z" fill="url(#fan11)" fill-rule="evenodd" /><path d="M648.7 781.0 L646.0 781.1 L643.3 781.4 L640.8 781.9 L638.5 782.7 L636.4 783.6 L634.5 784.6 L632.9 785.8 L631.7 787.1 L630.8 788.6 L630.2 790.0 L649.2 815.8 L670.2 794.4 L670.3 792.8 L670.1 791.3 L669.5 789.8 L668.6 788.3 L667.3 786.9 L665.7 785.6 L663.8 784.4 L661.6 783.4 L659.3 782.5 L656.8 781.8 L654.1 781.3 L651.4 781.0 Z" fill="url(#fan12)" fill-rule="evenodd" /><path d="M38.5 757.7 L87.6 763.1 L86.8 753.0 L86.2 749.5 L85.2 746.0 L83.6 742.7 L81.6 739.8 L79.3 737.3 L76.7 735.4 L74.0 734.1 L71.2 733.4 L36.0 729.6 Z" fill="#877720" fill-rule="evenodd" /><path d="M136.9 768.5 L186.6 774.0 L186.0 763.8 L185.5 760.3 L184.5 756.8 L183.0 753.6 L181.0 750.6 L178.7 748.1 L176.2 746.2 L173.4 744.9 L170.6 744.2 L149.2 741.9 L146.5 741.9 L143.9 742.7 L141.5 744.1 L139.5 746.1 L137.9 748.7 L136.8 751.6 L136.2 754.9 L136.2 758.4 Z" fill="#877720" fill-rule="evenodd" /><path d="M236.5 779.5 L286.8 785.0 L286.4 774.8 L286.0 771.3 L285.1 767.8 L283.6 764.5 L281.7 761.6 L279.4 759.1 L276.9 757.1 L274.1 755.8 L271.3 755.1 L249.6 752.8 L246.8 752.8 L244.2 753.6 L241.7 755.0 L239.7 757.0 L238.0 759.5 L236.8 762.5 L236.2 765.8 L236.0 769.3 Z" fill="#877720" fill-rule="evenodd" /><path d="M337.4 790.6 L388.4 796.2 L388.2 786.0 L387.9 782.4 L387.0 778.9 L385.6 775.6 L383.7 772.6 L381.5 770.1 L378.9 768.2 L376.1 766.8 L373.2 766.2 L351.3 763.8 L348.5 763.8 L345.7 764.6 L343.3 766.0 L341.1 768.0 L339.4 770.6 L338.1 773.6 L337.4 776.9 L337.2 780.4 Z" fill="#877720" fill-rule="evenodd" /><path d="M439.6 801.8 L491.3 807.5 L491.3 797.3 L491.1 793.7 L490.2 790.1 L488.9 786.8 L487.0 783.9 L484.8 781.3 L482.2 779.4 L479.5 778.0 L476.6 777.3 L454.3 774.9 L451.4 775.0 L448.7 775.7 L446.1 777.1 L443.9 779.2 L442.0 781.7 L440.7 784.7 L439.9 788.1 L439.6 791.6 Z" fill="#877720" fill-rule="evenodd" /><path d="M543.2 813.2 L595.5 819.0 L595.8 808.7 L595.6 805.1 L594.8 801.5 L593.5 798.2 L591.7 795.2 L589.5 792.7 L587.0 790.7 L584.2 789.3 L581.2 788.7 L558.7 786.2 L555.8 786.3 L552.9 787.0 L550.3 788.4 L548.0 790.5 L546.1 793.1 L544.6 796.1 L543.7 799.4 L543.4 803.0 Z" fill="#877720" fill-rule="evenodd" /><path d="M648.1 824.8 L701.1 830.6 L702.6 801.8 L664.5 797.7 L661.5 797.7 L658.6 798.5 L655.9 799.9 L653.5 801.9 L651.5 804.5 L650.0 807.6 L649.0 810.9 L648.5 814.5 Z" fill="#877720" fill-rule="evenodd" /><path d="M701.1 830.6 L705.7 807.6 L707.2 779.1 L702.6 801.8 Z" fill="#cfa925" fill-rule="evenodd" /><path d="M712.9 772.0 L716.4 754.8 L717.9 726.8 L714.4 743.8 Z" fill="#cfa925" fill-rule="evenodd" /><path d="M723.2 721.3 L726.5 705.1 L728.0 677.6 L724.7 693.7 Z" fill="#cfa925" fill-rule="evenodd" /><path d="M732.9 673.5 L735.9 658.2 L737.5 631.3 L734.4 646.4 Z" fill="#cfa925" fill-rule="evenodd" /><path d="M742.0 628.4 L744.9 613.9 L746.4 587.5 L743.5 601.8 Z" fill="#cfa925" fill-rule="evenodd" /><path d="M750.6 585.7 L753.4 572.0 L754.9 546.1 L752.2 559.6 Z" fill="#cfa925" fill-rule="evenodd" /><path d="M758.8 545.2 L761.4 532.3 L763.0 506.8 L760.3 519.6 Z" fill="#cfa925" fill-rule="evenodd" /><path d="M766.5 506.9 L769.0 494.6 L770.6 469.6 L768.1 481.7 Z" fill="#cfa925" fill-rule="evenodd" /><path d="M773.9 470.5 L776.3 458.8 L777.8 434.2 L775.5 445.8 Z" fill="#cfa925" fill-rule="evenodd" /><path d="M780.9 435.8 L783.2 424.7 L784.7 400.6 L782.5 411.6 Z" fill="#cfa925" fill-rule="evenodd" /><path d="M787.6 402.9 L790.3 389.6 L791.8 365.9 L789.1 379.0 Z" fill="#cfa925" fill-rule="evenodd" /><line x1="38.5" y1="757.7" x2="701.1" y2="830.6" stroke="#000" stroke-width="1.3" fill="none"/><line x1="38.5" y1="757.7" x2="36.0" y2="729.6" stroke="#000" stroke-width="1.3" fill="none"/><path d="M91.6 969.7 V917" stroke="#0000ff" stroke-width="1.3"/><path d="M91.6 969.7 L102.8 942.6" stroke="#00e000" stroke-width="1.3"/><path d="M91.6 969.7 L151 974" stroke="#ff0000" stroke-width="1.3"/><path d="M89 902.5 H95 L89 909 H95 M102 932 L105 935 M108.5 932 L103 937 M159 972 L165 979 M165 972 L159 979" stroke="#000" stroke-width="1" fill="none"/></svg>
<div class="b" style="left:700px;top:1145px;width:43px;height:41px;background:#cce4f7;border:1px solid #99d1ff;box-sizing:border-box;"></div>
<div class="b" style="left:1243px;top:1145px;width:43px;height:41px;background:#cce4f7;border:1px solid #99d1ff;box-sizing:border-box;"></div>
<div class="b" style="left:1338px;top:1145px;width:43px;height:41px;background:#cce4f7;border:1px solid #99d1ff;box-sizing:border-box;"></div>
<div class="b" style="left:1381px;top:1145px;width:43px;height:41px;background:#cce4f7;border:1px solid #99d1ff;box-sizing:border-box;"></div>
<svg class="s" style="left:707.5px;top:1151px;" width="25" height="32" viewBox="0 0 25 32"><path d="M12.5 1 L24 7 V20 L12.5 26 L1 20 V7 Z M1 7 L12.5 13 L24 7 M12.5 13 V21" fill="none" stroke="#1e1e1e" stroke-width="1.3" stroke-dasharray="2.2 1.8"/><path d="M5 19 H9 L14 25 L9 31 H5 L10 25 Z M12 19 H16 L21 25 L16 31 H12 L17 25 Z" fill="#1e1e1e"/></svg>
<svg class="s" style="left:751.5px;top:1150px;" width="25" height="32" viewBox="0 0 25 32"><path d="M12.5 1 L24 7 V21 L12.5 27 L1 21 V7 Z M1 7 L12.5 13 L24 7 M12.5 13 V20" fill="none" stroke="#1e1e1e" stroke-width="1.4"/><path d="M8 20.5 H17 M8 30.5 H17" stroke="#1e1e1e" stroke-width="1.5"/><path d="M9.5 21 H15.5 L12.5 25.5 Z M12.5 25.5 L15.5 30 H9.5 Z" fill="none" stroke="#1e1e1e" stroke-width="1.2"/></svg>
<svg class="s" style="left:804px;top:1152.5px;" width="22" height="24" viewBox="0 0 22 24"><path d="M1 5 V1 H5 M17 1 H21 V5 M1 16 V20 H5" fill="none" stroke="#1e1e1e" stroke-width="2"/><circle cx="9.5" cy="9.5" r="6" fill="none" stroke="#1e1e1e" stroke-width="2.6"/><path d="M14 14 L21 22" stroke="#1e1e1e" stroke-width="3.4"/></svg>
<svg class="s" style="left:849px;top:1152.5px;" width="20" height="24" viewBox="0 0 20 24"><circle cx="9" cy="8.5" r="6.8" fill="none" stroke="#1e1e1e" stroke-width="2.6"/><path d="M6 8 H12 M9 5 V11" stroke="#1e1e1e" stroke-width="1.4"/><path d="M13.5 13 L19.5 21" stroke="#1e1e1e" stroke-width="3.4"/></svg>
<svg class="s" style="left:892px;top:1152.5px;" width="20" height="24" viewBox="0 0 20 24"><circle cx="9" cy="8.5" r="6.8" fill="none" stroke="#1e1e1e" stroke-width="2.6"/><path d="M6 8 H12" stroke="#1e1e1e" stroke-width="1.4"/><path d="M13.5 13 L19.5 21" stroke="#1e1e1e" stroke-width="3.4"/></svg>
<svg class="s" style="left:932.5px;top:1153.5px;" width="24" height="25" viewBox="0 0 24 25"><path d="M4.5 7 A10 10 0 1 0 9 3" fill="none" stroke="#1e1e1e" stroke-width="2.4"/><path d="M1.5 5 L10 0 L10 9 Z" fill="#1e1e1e"/></svg>
<svg class="s" style="left:984px;top:1153px;" width="24" height="22" viewBox="0 0 24 22"><g transform="translate(0,1)"><path d="M2 3 L9 1 L16 3 L19 10 L16 17 L9 19 L5 17 L2 10 Z M2 3 L9 6 L16 3 M9 6 L5 17" fill="none" stroke="#333" stroke-width="1.7" stroke-linejoin="round"/><path d="M18 7 L24 10 L18 13 Z" fill="#1e1e1e"/></g></svg>
<svg class="s" style="left:1029.5px;top:1151px;" width="20" height="24" viewBox="0 0 20 24"><g transform="translate(0,2)"><path d="M10 1.5 L19 5.5 V15.5 L10 19.5 L1 15.5 V5.5 Z M1 5.5 L10 9.5 L19 5.5 M10 9.5 V19.5" fill="none" stroke="#333" stroke-width="1.7" stroke-linejoin="round"/></g><path d="M10 0 L12.5 7 H7.5 Z" fill="#1e1e1e"/></svg>
<svg class="s" style="left:1070.5px;top:1152.5px;" width="20" height="25" viewBox="0 0 20 25"><path d="M10 1.5 L19 5.5 V15.5 L10 19.5 L1 15.5 V5.5 Z M1 5.5 L10 9.5 L19 5.5 M10 9.5 V14 M10 14 L1 15.5 M10 14 L19 15.5" fill="none" stroke="#333" stroke-width="1.7"/><path d="M7.5 17 H12.5 L10 24 Z" fill="#1e1e1e"/></svg>
<svg class="s" style="left:1114px;top:1153px;" width="24" height="22" viewBox="0 0 24 22"><g transform="translate(24,0) scale(-1,1)"><g transform="translate(0,1)"><path d="M2 3 L9 1 L16 3 L19 10 L16 17 L9 19 L5 17 L2 10 Z M2 3 L9 6 L16 3 M9 6 L5 17" fill="none" stroke="#333" stroke-width="1.7" stroke-linejoin="round"/><path d="M18 7 L24 10 L18 13 Z" fill="#1e1e1e"/></g></g></svg>
<svg class="s" style="left:1159.5px;top:1155.5px;" width="20" height="21" viewBox="0 0 20 21"><path d="M1 5.5 L10 9.5 V19.5 L1 15.5 Z" fill="#222"/><path d="M10 1.5 L19 5.5 V15.5 L10 19.5 L1 15.5 V5.5 Z M1 5.5 L10 9.5 L19 5.5 M10 9.5 V19.5" fill="none" stroke="#333" stroke-width="1.7" stroke-linejoin="round"/></svg>
<svg class="s" style="left:1202px;top:1155.5px;" width="20" height="21" viewBox="0 0 20 21"><path d="M10 1.5 L19 5.5 V15.5 L10 9.5 Z" fill="#222"/><path d="M10 1.5 L19 5.5 V15.5 L10 19.5 L1 15.5 V5.5 Z M1 5.5 L10 9.5 L19 5.5 M10 9.5 V19.5" fill="none" stroke="#333" stroke-width="1.7" stroke-linejoin="round"/></svg>
<svg class="s" style="left:1253px;top:1153px;" width="27" height="27" viewBox="0 0 27 27"><path d="M1 11 L13 7 V25 H1 Z M1 11 L25 1 M13 7 L25 1 M13 25 L25 1" fill="none" stroke="#1e1e1e" stroke-width="2.3" stroke-linejoin="round"/></svg>
<svg class="s" style="left:1296px;top:1155.5px;" width="22" height="23" viewBox="0 0 22 23"><path d="M1 7 H15 V21 H1 Z M1 7 L7 1 H21 L15 7 M21 1 V15 L15 21 M7 1 V15 H21 M7 15 L1 21" fill="none" stroke="#1e1e1e" stroke-width="2" stroke-linejoin="round"/></svg>
<svg class="s" style="left:1349.5px;top:1154px;" width="24" height="23" viewBox="0 0 24 23"><path d="M10 0 V12 M10 12 H24 M10 12 L0 22" fill="none" stroke="#1e1e1e" stroke-width="1.2"/><circle cx="10" cy="12" r="1.8" fill="#1e1e1e"/></svg>
<svg class="s" style="left:1392px;top:1152.5px;" width="26" height="27" viewBox="0 0 26 27"><path d="M8 0 V14 M8 14 H25 M8 14 L0 22 M8 2 H10 M8 5 H10 M8 8 H10 M8 11 H10 M11 14 V12 M14 14 V12 M17 14 V12 M20 14 V12 M23 14 V12 M6 16 L7.5 17.5 M4 18 L5.5 19.5 M2 20 L3.5 21.5" fill="none" stroke="#1e1e1e" stroke-width="1.1"/><text x="18" y="26" font-family="Liberation Sans" font-size="11.5" text-anchor="middle" fill="#1e1e1e">10</text></svg>
<svg class="s" style="left:1434.5px;top:1157px;" width="21" height="18" viewBox="0 0 21 18"><path d="M2 2 H19 V16 H2 Z" fill="none" stroke="#1e1e1e" stroke-width="1.5" stroke-dasharray="3 2"/><circle cx="2" cy="2" r="2" fill="#1e1e1e"/><circle cx="19" cy="2" r="2" fill="#1e1e1e"/><circle cx="2" cy="16" r="2" fill="#1e1e1e"/><circle cx="19" cy="16" r="2" fill="#1e1e1e"/></svg>
<div class="b" style="left:790px;top:1147px;width:1px;height:38px;background:#cfcfcf;"></div>
<div class="b" style="left:971px;top:1147px;width:1px;height:38px;background:#cfcfcf;"></div>
<div class="b" style="left:1238px;top:1147px;width:1px;height:38px;background:#cfcfcf;"></div>
<div class="b" style="left:1333px;top:1147px;width:1px;height:38px;background:#cfcfcf;"></div>
<div class="b" style="left:698px;top:1225px;width:920px;height:192px;background:#ffffff;border:1px solid #7a7a7a;box-sizing:border-box;"></div>
<div class="b" style="left:1591px;top:1226px;width:26px;height:190px;background:#f0f0f0;"></div>
<svg class="s" style="left:1591px;top:1224px;" width="26" height="192" viewBox="0 0 26 192"><path d="M8 20 L13 15 L18 20" fill="none" stroke="#555" stroke-width="2.6"/><path d="M8 176 L13 181 L18 176" fill="none" stroke="#555" stroke-width="2.6"/><rect x="0" y="139" width="26" height="27" fill="#cdcdcd"/></svg>
<div class="t" style="left:703.00px;top:1228.13px;font-size:15.8px;color:#000;">ECHO: "G1 X6.89856 Y4.20625 F600"</div>
<div class="t" style="left:703.00px;top:1247.13px;font-size:15.8px;color:#000;">ECHO: "G0 Z8"</div>
<div class="t" style="left:703.00px;top:1266.13px;font-size:15.8px;color:#000;">Compiling design (CSG Products generation)...</div>
<div class="t" style="left:703.00px;top:1285.13px;font-size:15.8px;color:#000;">Geometries in cache: 296</div>
<div class="t" style="left:703.00px;top:1304.13px;font-size:15.8px;color:#000;">Geometry cache size in bytes: 1287344</div>
<div class="t" style="left:703.00px;top:1323.13px;font-size:15.8px;color:#000;">CGAL Polyhedrons in cache: 8</div>
<div class="t" style="left:703.00px;top:1342.13px;font-size:15.8px;color:#000;">CGAL cache size in bytes: 85733424</div>
<div class="t" style="left:703.00px;top:1361.13px;font-size:15.8px;color:#000;">Compiling design (CSG Products normalization)...</div>
<div class="t" style="left:703.00px;top:1380.13px;font-size:15.8px;color:#000;">Normalized CSG tree has 545 elements</div>
<div class="t" style="left:703.00px;top:1399.13px;font-size:15.8px;color:#000;">Compile and preview finished.</div>
<div class="t" style="left:2.50px;top:1421.87px;font-size:16.7px;color:#000;">Viewport: translate = [ 50.00 75.00 2.50 ], rotate = [ 61.30 0.00 11.00 ], distance = 462.21 (920x1077)</div>
<div class="t" style="right:3.00px;top:1422.54px;font-size:15.9px;color:#000;">OpenSCAD 2020.07.05.ci5496 (git ad5f91ec)</div>
<div class="b" style="left:1624px;top:106px;width:20px;height:20px;background:#fff;border:1px solid #333;box-sizing:border-box;"></div>
<svg class="s" style="left:1624px;top:106px;" width="20" height="20" viewBox="0 0 20 20"><path d="M3.5 10 L8 14.5 L16.5 5" fill="none" stroke="#333" stroke-width="1.6"/></svg>
<div class="t" style="left:1653.00px;top:109.21px;font-size:15.7px;color:#000;">Automatic Preview</div>
<div class="b" style="left:1793px;top:104px;width:152px;height:25px;background:#e1e1e1;border:1px solid #adadad;box-sizing:border-box;"></div>
<div class="t" style="left:1797.00px;top:109.41px;font-size:15.7px;color:#000;">Show Details</div>
<svg class="s" style="left:1925.5px;top:113px;" width="12" height="8" viewBox="0 0 12 8"><path d="M0.5 1 L6 6.5 L11.5 1" fill="none" stroke="#333" stroke-width="1.2"/></svg>
<div class="b" style="left:1950px;top:101px;width:110px;height:32px;background:#e1e1e1;border:1px solid #adadad;box-sizing:border-box;"></div>
<div class="t" style="left:2004.50px;transform:translateX(-50%);top:110.11px;font-size:15.7px;color:#000;">Reset</div>
<div class="b" style="left:1624px;top:138px;width:208px;height:38px;background:#fff;border:1px solid #7a7a7a;box-sizing:border-box;"></div>
<div class="t" style="left:1629.60px;top:150.41px;font-size:15.7px;color:#000;">design default values</div>
<svg class="s" style="left:1812.5px;top:153px;" width="12" height="8" viewBox="0 0 12 8"><path d="M0.5 1 L6 6.5 L11.5 1" fill="none" stroke="#333" stroke-width="1.2"/></svg>
<div class="t" style="left:1836.00px;top:148.11px;font-size:17px;color:#000;">*</div>
<div class="b" style="left:1850px;top:139px;width:38px;height:36px;background:#e1e1e1;border:1px solid #adadad;box-sizing:border-box;"></div>
<div class="t" style="left:1869.00px;transform:translateX(-50%);top:150.71px;font-size:15.7px;color:#000;">+</div>
<div class="b" style="left:1894px;top:139px;width:38px;height:36px;background:#e1e1e1;border:1px solid #adadad;box-sizing:border-box;"></div>
<div class="t" style="left:1912.50px;transform:translateX(-50%);top:150.71px;font-size:15.7px;color:#000;">-</div>
<div class="b" style="left:1938px;top:139px;width:122px;height:36px;background:#e1e1e1;border:1px solid #adadad;box-sizing:border-box;"></div>
<div class="t" style="left:1941.50px;top:147.22px;font-size:21.6px;color:#000;">save preset</div>
<div class="b" style="left:1624px;top:180px;width:437px;height:1237px;background:#f0f0f0;border:1px solid #a0a0a0;box-sizing:border-box;"></div>
<div class="b" style="left:1625px;top:181px;width:435px;height:28px;background:#c4ddf3;border:1px solid #90c0ee;box-sizing:border-box;"></div>
<svg class="s" style="left:1631px;top:192px;" width="20" height="10" viewBox="0 0 20 10"><path d="M0 0 H19.5 L9.75 9.5 Z" fill="#000"/></svg>
<div class="t" style="left:1655.20px;top:190.51px;font-size:15.7px;color:#000;">Parameters</div>
<div class="t" style="left:1629.30px;top:213.70px;font-size:16.9px;color:#000;font-weight:bold;">Height</div>
<div class="b" style="left:1995.5px;top:211.5px;width:60.0px;height:25.0px;background:#fff;border:1px solid #7a7a7a;box-sizing:border-box;"></div>
<div class="b" style="left:2038.5px;top:213.5px;width:15.0px;height:21.0px;background:#f0f0f0;border:1px solid #c8c8c8;box-sizing:border-box;"></div>
<svg class="s" style="left:2039.5px;top:214.5px;" width="14" height="20" viewBox="0 0 14 20"><path d="M2 8 L6.5 3 L11 8 Z M2 12 L6.5 17 L11 12 Z" fill="#000"/></svg>
<div class="t" style="right:30.00px;top:217.51px;font-size:15.7px;color:#000;">50</div>
<div class="t" style="left:1629.30px;top:239.70px;font-size:16.9px;color:#000;font-weight:bold;">Width</div>
<div class="b" style="left:1995.5px;top:237.5px;width:60.0px;height:25.0px;background:#fff;border:1px solid #7a7a7a;box-sizing:border-box;"></div>
<div class="b" style="left:2038.5px;top:239.5px;width:15.0px;height:21.0px;background:#f0f0f0;border:1px solid #c8c8c8;box-sizing:border-box;"></div>
<svg class="s" style="left:2039.5px;top:240.5px;" width="14" height="20" viewBox="0 0 14 20"><path d="M2 8 L6.5 3 L11 8 Z M2 12 L6.5 17 L11 12 Z" fill="#000"/></svg>
<div class="t" style="right:30.00px;top:243.51px;font-size:15.7px;color:#000;">100</div>
<div class="t" style="left:1629.30px;top:265.70px;font-size:16.9px;color:#000;font-weight:bold;">Depth</div>
<div class="b" style="left:1995.5px;top:263.5px;width:60.0px;height:25.0px;background:#fff;border:1px solid #7a7a7a;box-sizing:border-box;"></div>
<div class="b" style="left:2038.5px;top:265.5px;width:15.0px;height:21.0px;background:#f0f0f0;border:1px solid #c8c8c8;box-sizing:border-box;"></div>
<svg class="s" style="left:2039.5px;top:266.5px;" width="14" height="20" viewBox="0 0 14 20"><path d="M2 8 L6.5 3 L11 8 Z M2 12 L6.5 17 L11 12 Z" fill="#000"/></svg>
<div class="t" style="right:30.00px;top:269.51px;font-size:15.7px;color:#000;">150</div>
<div class="t" style="left:1629.30px;top:291.70px;font-size:16.9px;color:#000;font-weight:bold;">Thickness</div>
<div class="b" style="left:1995.5px;top:289.5px;width:60.0px;height:25.0px;background:#fff;border:1px solid #7a7a7a;box-sizing:border-box;"></div>
<div class="b" style="left:2038.5px;top:291.5px;width:15.0px;height:21.0px;background:#f0f0f0;border:1px solid #c8c8c8;box-sizing:border-box;"></div>
<svg class="s" style="left:2039.5px;top:292.5px;" width="14" height="20" viewBox="0 0 14 20"><path d="M2 8 L6.5 3 L11 8 Z M2 12 L6.5 17 L11 12 Z" fill="#000"/></svg>
<div class="t" style="right:30.00px;top:295.51px;font-size:15.7px;color:#000;">5</div>
<div class="t" style="left:1629.30px;top:317.70px;font-size:16.9px;color:#000;font-weight:bold;">Part Spacing</div>
<div class="b" style="left:1995.5px;top:315.5px;width:60.0px;height:25.0px;background:#fff;border:1px solid #7a7a7a;box-sizing:border-box;"></div>
<div class="b" style="left:2038.5px;top:317.5px;width:15.0px;height:21.0px;background:#f0f0f0;border:1px solid #c8c8c8;box-sizing:border-box;"></div>
<svg class="s" style="left:2039.5px;top:318.5px;" width="14" height="20" viewBox="0 0 14 20"><path d="M2 8 L6.5 3 L11 8 Z M2 12 L6.5 17 L11 12 Z" fill="#000"/></svg>
<div class="t" style="right:30.00px;top:321.51px;font-size:15.7px;color:#000;">15</div>
<div class="t" style="left:1629.30px;top:343.70px;font-size:16.9px;color:#000;font-weight:bold;">Rounding</div>
<div class="b" style="left:2036px;top:344px;width:20px;height:20px;background:#fff;border:1px solid #333;box-sizing:border-box;"></div>
<svg class="s" style="left:2036px;top:344px;" width="20" height="20" viewBox="0 0 20 20"><path d="M3.5 10 L8 14.5 L16.5 5" fill="none" stroke="#333" stroke-width="1.6"/></svg>
<div class="t" style="left:1629.30px;top:369.70px;font-size:16.9px;color:#000;font-weight:bold;">Endmill Diameter</div>
<div class="b" style="left:1972px;top:367.5px;width:83.5px;height:25.0px;background:#fff;border:1px solid #7a7a7a;box-sizing:border-box;"></div>
<div class="b" style="left:2038.5px;top:369.5px;width:15.0px;height:21.0px;background:#f0f0f0;border:1px solid #c8c8c8;box-sizing:border-box;"></div>
<svg class="s" style="left:2039.5px;top:370.5px;" width="14" height="20" viewBox="0 0 14 20"><path d="M2 8 L6.5 3 L11 8 Z M2 12 L6.5 17 L11 12 Z" fill="#000"/></svg>
<div class="t" style="right:30.00px;top:373.51px;font-size:15.7px;color:#000;">6.35</div>
<div class="t" style="left:1629.30px;top:395.70px;font-size:16.9px;color:#000;font-weight:bold;">Generate</div>
<div class="t" style="left:1629.30px;top:439.70px;font-size:16.9px;color:#000;font-weight:bold;">Gcode Part</div>
<div class="t" style="left:1629.30px;top:483.70px;font-size:16.9px;color:#000;font-weight:bold;">Intersection</div>
<div class="b" style="left:2036px;top:484px;width:20px;height:20px;background:#fff;border:1px solid #333;box-sizing:border-box;"></div>
<div class="t" style="left:1629.30px;top:509.70px;font-size:16.9px;color:#000;font-weight:bold;">Detail</div>
<div class="b" style="left:1995.5px;top:507.5px;width:60.0px;height:25.0px;background:#fff;border:1px solid #7a7a7a;box-sizing:border-box;"></div>
<div class="b" style="left:2038.5px;top:509.5px;width:15.0px;height:21.0px;background:#f0f0f0;border:1px solid #c8c8c8;box-sizing:border-box;"></div>
<svg class="s" style="left:2039.5px;top:510.5px;" width="14" height="20" viewBox="0 0 14 20"><path d="M2 8 L6.5 3 L11 8 Z M2 12 L6.5 17 L11 12 Z" fill="#000"/></svg>
<div class="t" style="right:30.00px;top:513.51px;font-size:15.7px;color:#000;">20</div>
<div class="t" style="left:1629.30px;top:535.70px;font-size:16.9px;color:#000;font-weight:bold;">feedrate</div>
<div class="b" style="left:1995.5px;top:533.5px;width:60.0px;height:25.0px;background:#fff;border:1px solid #7a7a7a;box-sizing:border-box;"></div>
<div class="b" style="left:2038.5px;top:535.5px;width:15.0px;height:21.0px;background:#f0f0f0;border:1px solid #c8c8c8;box-sizing:border-box;"></div>
<svg class="s" style="left:2039.5px;top:536.5px;" width="14" height="20" viewBox="0 0 14 20"><path d="M2 8 L6.5 3 L11 8 Z M2 12 L6.5 17 L11 12 Z" fill="#000"/></svg>
<div class="t" style="right:30.00px;top:539.51px;font-size:15.7px;color:#000;">600</div>
<div class="t" style="left:1629.30px;top:561.70px;font-size:16.9px;color:#000;font-weight:bold;">plungerate</div>
<div class="b" style="left:1995.5px;top:559.5px;width:60.0px;height:25.0px;background:#fff;border:1px solid #7a7a7a;box-sizing:border-box;"></div>
<div class="b" style="left:2038.5px;top:561.5px;width:15.0px;height:21.0px;background:#f0f0f0;border:1px solid #c8c8c8;box-sizing:border-box;"></div>
<svg class="s" style="left:2039.5px;top:562.5px;" width="14" height="20" viewBox="0 0 14 20"><path d="M2 8 L6.5 3 L11 8 Z M2 12 L6.5 17 L11 12 Z" fill="#000"/></svg>
<div class="t" style="right:30.00px;top:565.51px;font-size:15.7px;color:#000;">150</div>
<div class="t" style="left:1629.30px;top:587.70px;font-size:16.9px;color:#000;font-weight:bold;">safeheight</div>
<div class="b" style="left:1995.5px;top:585.5px;width:60.0px;height:25.0px;background:#fff;border:1px solid #7a7a7a;box-sizing:border-box;"></div>
<div class="b" style="left:2038.5px;top:587.5px;width:15.0px;height:21.0px;background:#f0f0f0;border:1px solid #c8c8c8;box-sizing:border-box;"></div>
<svg class="s" style="left:2039.5px;top:588.5px;" width="14" height="20" viewBox="0 0 14 20"><path d="M2 8 L6.5 3 L11 8 Z M2 12 L6.5 17 L11 12 Z" fill="#000"/></svg>
<div class="t" style="right:30.00px;top:591.51px;font-size:15.7px;color:#000;">8</div>
<div class="t" style="left:1629.30px;top:613.70px;font-size:16.9px;color:#000;font-weight:bold;">tool radius tip</div>
<div class="b" style="left:1945.5px;top:611.5px;width:110.0px;height:25.0px;background:#fff;border:1px solid #7a7a7a;box-sizing:border-box;"></div>
<div class="b" style="left:2038.5px;top:613.5px;width:15.0px;height:21.0px;background:#f0f0f0;border:1px solid #c8c8c8;box-sizing:border-box;"></div>
<svg class="s" style="left:2039.5px;top:614.5px;" width="14" height="20" viewBox="0 0 14 20"><path d="M2 8 L6.5 3 L11 8 Z M2 12 L6.5 17 L11 12 Z" fill="#000"/></svg>
<div class="t" style="right:30.00px;top:617.51px;font-size:15.7px;color:#000;">0.79375</div>
<div class="t" style="left:1629.30px;top:639.70px;font-size:16.9px;color:#000;font-weight:bold;">tool radius width</div>
<div class="b" style="left:1963.5px;top:637.5px;width:92.0px;height:25.0px;background:#fff;border:1px solid #7a7a7a;box-sizing:border-box;"></div>
<div class="b" style="left:2038.5px;top:639.5px;width:15.0px;height:21.0px;background:#f0f0f0;border:1px solid #c8c8c8;box-sizing:border-box;"></div>
<svg class="s" style="left:2039.5px;top:640.5px;" width="14" height="20" viewBox="0 0 14 20"><path d="M2 8 L6.5 3 L11 8 Z M2 12 L6.5 17 L11 12 Z" fill="#000"/></svg>
<div class="t" style="right:30.00px;top:643.51px;font-size:15.7px;color:#000;">3.175</div>
<div class="b" style="left:1629px;top:412.5px;width:427px;height:24.0px;background:#e1e1e1;border:1px solid #adadad;box-sizing:border-box;"></div>
<div class="t" style="left:1633.00px;top:417.41px;font-size:15.7px;color:#000;">Gcode</div>
<svg class="s" style="left:2036.5px;top:421.0px;" width="12" height="8" viewBox="0 0 12 8"><path d="M0.5 1 L6 6.5 L11.5 1" fill="none" stroke="#333" stroke-width="1.2"/></svg>
<div class="b" style="left:1629px;top:456.5px;width:427px;height:24.0px;background:#e1e1e1;border:1px solid #adadad;box-sizing:border-box;"></div>
<div class="t" style="left:1633.00px;top:461.41px;font-size:15.7px;color:#000;">top_bottom</div>
<svg class="s" style="left:2036.5px;top:465.0px;" width="12" height="8" viewBox="0 0 12 8"><path d="M0.5 1 L6 6.5 L11.5 1" fill="none" stroke="#333" stroke-width="1.2"/></svg>

</body></html>
